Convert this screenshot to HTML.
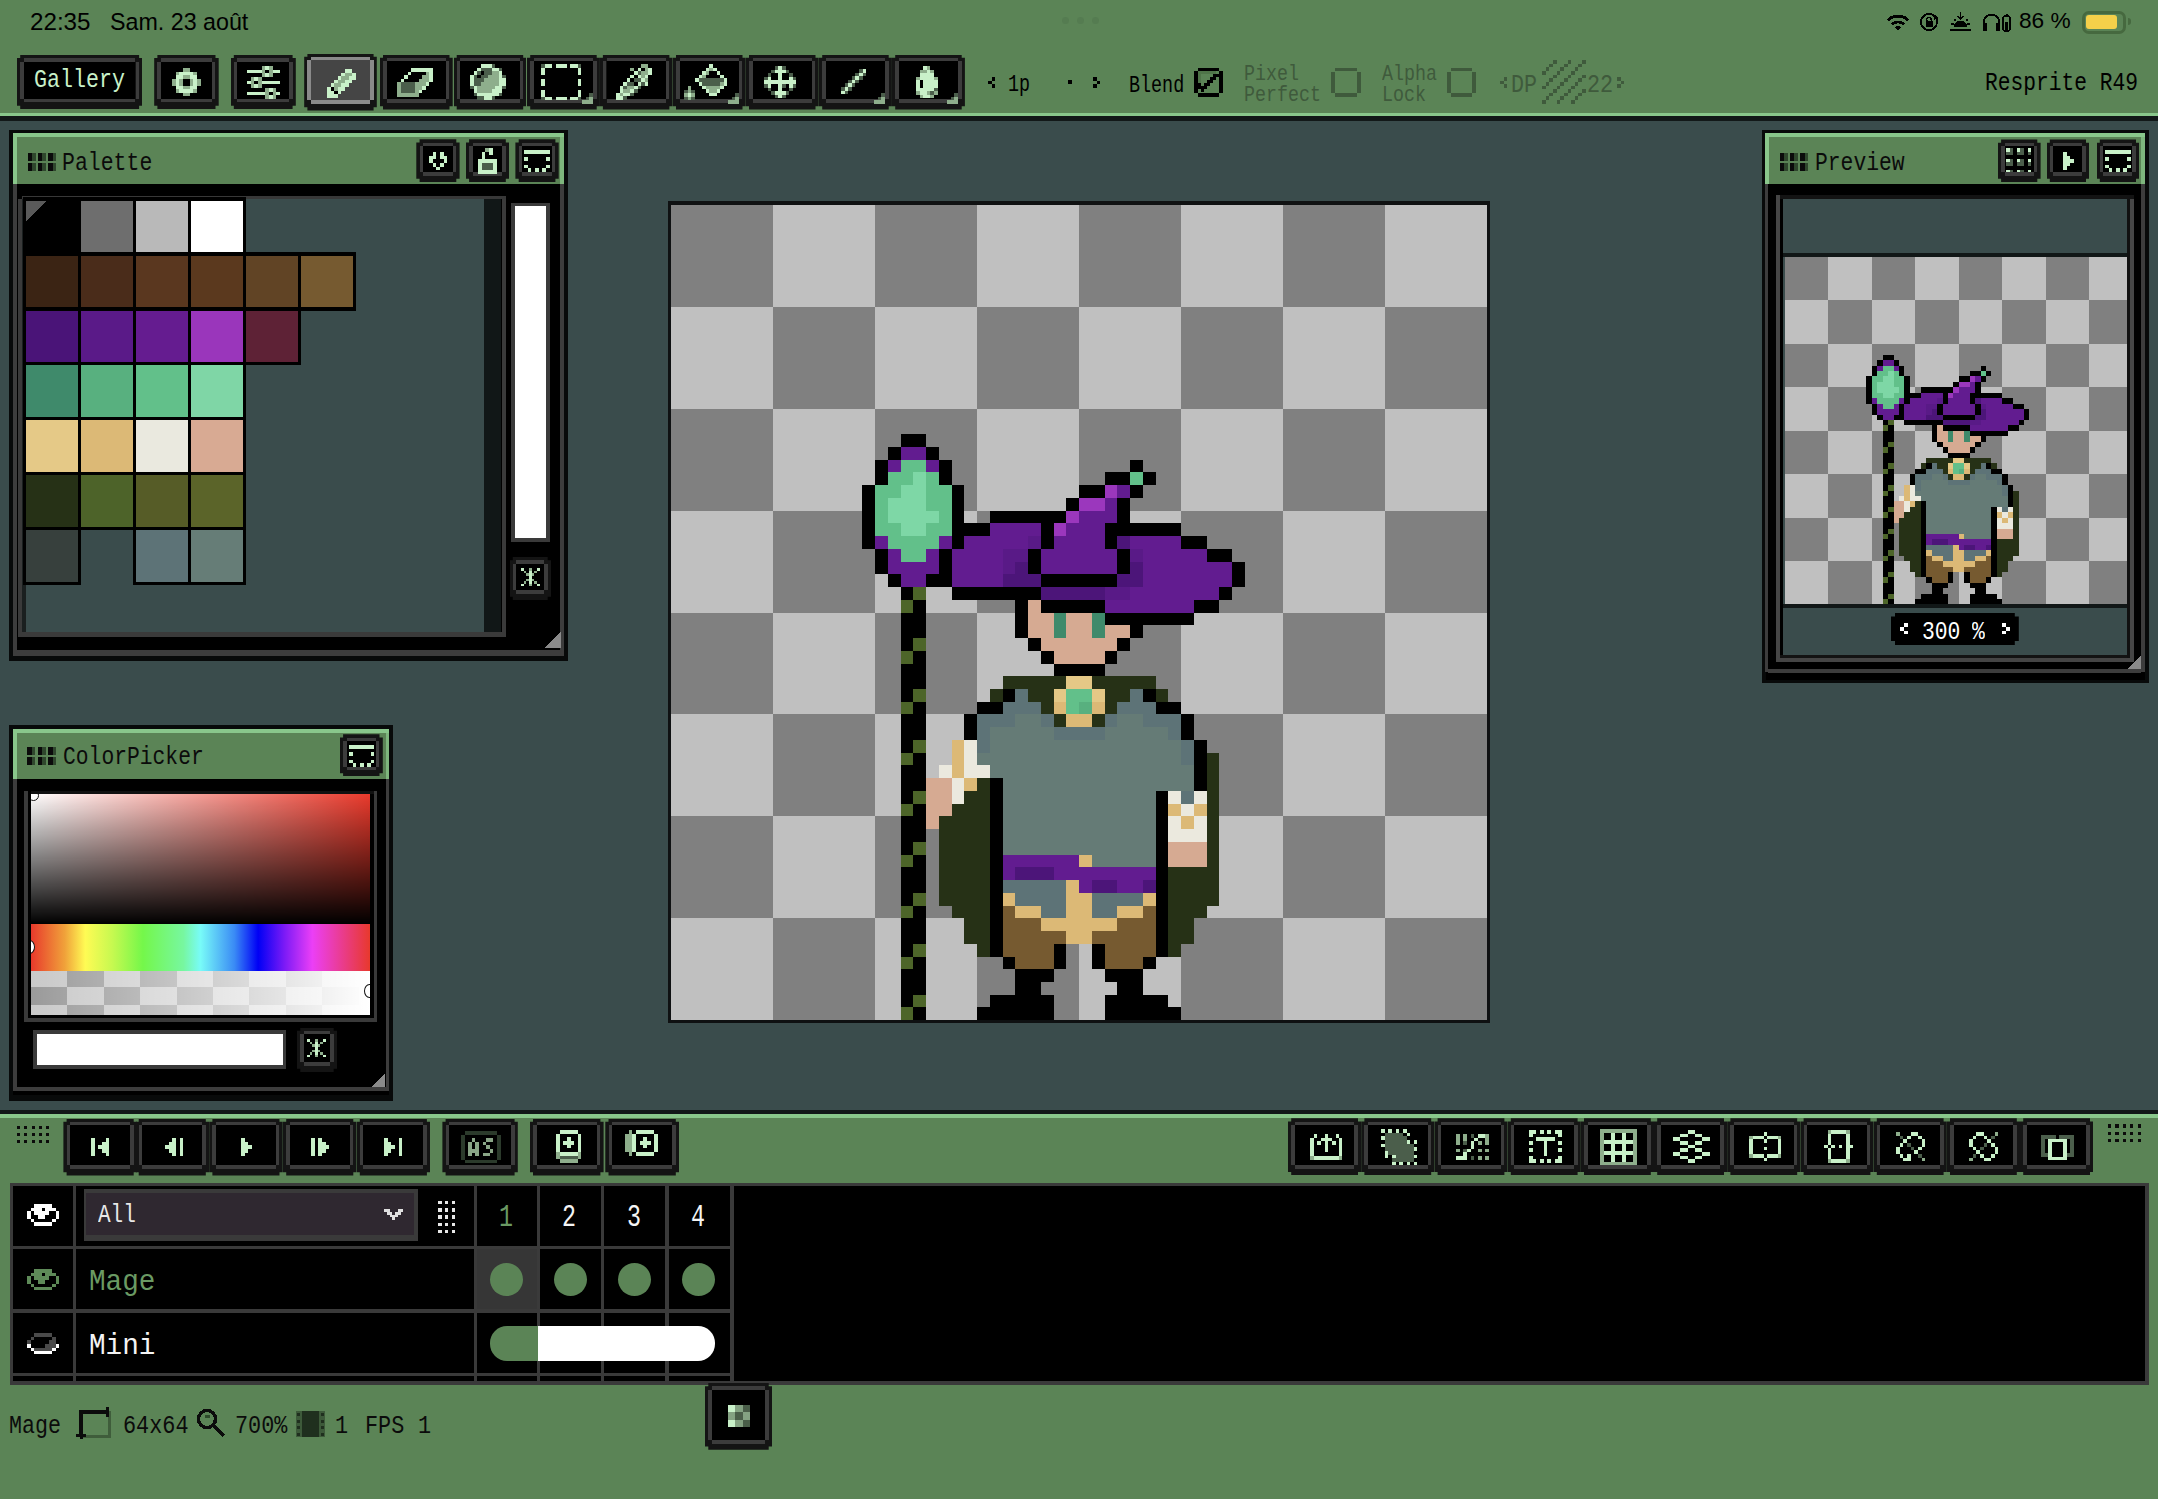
<!DOCTYPE html>
<html><head><meta charset="utf-8"><title>Resprite</title>
<style>
html,body{margin:0;padding:0;width:2158px;height:1499px;overflow:hidden;background:#3a4c4c}
#r{position:relative;width:2158px;height:1499px;overflow:hidden}
#r div{position:absolute}
</style></head><body><div id="r">
<div style="left:0px;top:0px;width:2158px;height:113px;background:#5b8456;"></div>
<div style="left:0px;top:112.8px;width:2158px;height:3.4px;background:#89c78b;"></div>
<div style="left:0px;top:116.2px;width:2158px;height:4.4px;background:#121818;"></div>
<div style="left:0px;top:1110.2px;width:2158px;height:3.4px;background:#121818;"></div>
<div style="left:0px;top:1113.6px;width:2158px;height:4.2px;background:#89c78b;"></div>
<div style="left:0px;top:1117.8px;width:2158px;height:381.2px;background:#5b8456;"></div>
<div style="left:30px;top:10.51px;font:23.26px/23.26px 'Liberation Sans',sans-serif;color:#000;white-space:pre;transform:scaleX(1.0400);transform-origin:0 0;">22:35</div>
<div style="left:110px;top:10.51px;font:23.26px/23.26px 'Liberation Sans',sans-serif;color:#000;white-space:pre;transform:scaleX(1.0000);transform-origin:0 0;">Sam. 23 août</div>
<div style="left:2019px;top:10.47px;font:22.24px/22.24px 'Liberation Sans',sans-serif;color:#000;white-space:pre;transform:scaleX(1.0200);transform-origin:0 0;">86 %</div>
<div style="left:1062px;top:17px;width:7px;height:7px;border-radius:50%;background:#557c51"></div>
<div style="left:1077px;top:17px;width:7px;height:7px;border-radius:50%;background:#557c51"></div>
<div style="left:1092px;top:17px;width:7px;height:7px;border-radius:50%;background:#557c51"></div>
<svg style="position:absolute;left:1885px;top:12px" width="26" height="20" viewBox="0 0 26 20" preserveAspectRatio="none" shape-rendering="crispEdges"><path d="M13 19 L9.5 15.2 A5 5 0 0 1 16.5 15.2 Z" fill="#000"/><path d="M5.8 11.6 A10 10 0 0 1 20.2 11.6 L18.2 13.6 A7.2 7.2 0 0 0 7.8 13.6 Z" fill="#000"/><path d="M1.5 7.4 A16 16 0 0 1 24.5 7.4 L22.4 9.5 A13 13 0 0 0 3.6 9.5 Z" fill="#000"/></svg>
<svg style="position:absolute;left:1919px;top:12px" width="21" height="20" viewBox="0 0 21 20" preserveAspectRatio="none" shape-rendering="crispEdges"><circle cx="10" cy="10" r="8" fill="none" stroke="#000" stroke-width="2"/><rect x="6.5" y="9" width="7" height="6" fill="#000"/><path d="M7.8 9 V7.5 A2.2 2.2 0 0 1 12.2 7.5 V9" fill="none" stroke="#000" stroke-width="1.4"/><path d="M16 3 L20 6 L15 8 Z" fill="#000"/></svg>
<svg style="position:absolute;left:1949px;top:11px" width="23" height="21" viewBox="0 0 23 21" preserveAspectRatio="none" shape-rendering="crispEdges"><path d="M11.5 1 V8 M8.5 5 L11.5 8 L14.5 5" stroke="#000" stroke-width="1.6" fill="none"/><path d="M5 16 A6.5 6.5 0 0 1 18 16 Z" fill="#000"/><rect x="1" y="18" width="21" height="2" fill="#000"/><rect x="2" y="12" width="3" height="1.6" fill="#000"/><rect x="18" y="12" width="3" height="1.6" fill="#000"/><rect x="4.5" y="8" width="2" height="2" fill="#000"/><rect x="16.5" y="8" width="2" height="2" fill="#000"/></svg>
<svg style="position:absolute;left:1982px;top:12px" width="30" height="20" viewBox="0 0 30 20" preserveAspectRatio="none" shape-rendering="crispEdges"><path d="M2 15 V10 A7.5 7.5 0 0 1 17 10 V15" fill="none" stroke="#000" stroke-width="2"/><rect x="1" y="11" width="4" height="8" rx="1.5" fill="#000"/><rect x="14" y="11" width="4" height="8" rx="1.5" fill="#000"/><rect x="21" y="4" width="7" height="15" rx="1.5" fill="none" stroke="#000" stroke-width="1.5"/><rect x="23" y="10" width="3" height="8" fill="#000"/><rect x="23.5" y="2" width="2" height="2" fill="#000"/></svg>
<div style="left:2082px;top:11.3px;width:38px;height:17px;border:3px solid #46693f;border-radius:7px"></div>
<div style="left:2085.5px;top:14.8px;width:31.5px;height:14.2px;background:#f5d04a;border-radius:3px"></div>
<div style="left:2127.5px;top:18px;width:3px;height:7px;background:#46693f;border-radius:0 3px 3px 0"></div>
<div style="left:17px;top:54.8px;width:125.3px;height:54.2px;background:#141414;clip-path:polygon(3.2px 0px,122.1px 0px,122.1px 3.2px,125.3px 3.2px,125.3px 51px,122.1px 51px,122.1px 54.2px,3.2px 54.2px,3.2px 51px,0px 51px,0px 3.2px,3.2px 3.2px)"></div>
<div style="left:23.8px;top:58px;width:111.7px;height:3.6px;background:#3c3c3c;"></div>
<div style="left:23.8px;top:98.9px;width:111.7px;height:3.6px;background:#3c3c3c;"></div>
<div style="left:20.2px;top:61.6px;width:3.6px;height:37.3px;background:#3c3c3c;"></div>
<div style="left:135.5px;top:61.6px;width:3.6px;height:37.3px;background:#3c3c3c;"></div>
<div style="left:23.8px;top:61.6px;width:111.7px;height:37.3px;background:#000;"></div>
<div style="left:34.1px;top:68.43px;font:25.81px/25.81px 'Liberation Mono',monospace;color:#c9f1c9;white-space:pre;transform:scaleX(0.8395);transform-origin:0 0;">Gallery</div>
<div style="left:154.2px;top:54.8px;width:64.5px;height:54.2px;background:#141414;clip-path:polygon(3.2px 0px,61.3px 0px,61.3px 3.2px,64.5px 3.2px,64.5px 51px,61.3px 51px,61.3px 54.2px,3.2px 54.2px,3.2px 51px,0px 51px,0px 3.2px,3.2px 3.2px)"></div>
<div style="left:161px;top:58px;width:50.9px;height:3.6px;background:#3c3c3c;"></div>
<div style="left:161px;top:98.9px;width:50.9px;height:3.6px;background:#3c3c3c;"></div>
<div style="left:157.4px;top:61.6px;width:3.6px;height:37.3px;background:#3c3c3c;"></div>
<div style="left:211.9px;top:61.6px;width:3.6px;height:37.3px;background:#3c3c3c;"></div>
<div style="left:161px;top:61.6px;width:50.9px;height:37.3px;background:#000;"></div>
<svg style="position:absolute;left:172px;top:67.7px" width="28.56" height="28.56" viewBox="0 0 8 8" preserveAspectRatio="none" shape-rendering="crispEdges"><rect x="3" y="0" width="2" height="1" fill="#8eae8c"/><rect x="1" y="1" width="1" height="1" fill="#8eae8c"/><rect x="2" y="1" width="4" height="1" fill="#c9f1c9"/><rect x="6" y="1" width="1" height="1" fill="#8eae8c"/><rect x="1" y="2" width="2" height="1" fill="#c9f1c9"/><rect x="3" y="2" width="2" height="1" fill="#8eae8c"/><rect x="5" y="2" width="2" height="1" fill="#c9f1c9"/><rect x="0" y="3" width="1" height="1" fill="#8eae8c"/><rect x="1" y="3" width="1" height="1" fill="#c9f1c9"/><rect x="2" y="3" width="1" height="1" fill="#8eae8c"/><rect x="3" y="3" width="2" height="1" fill="#000"/><rect x="5" y="3" width="1" height="1" fill="#8eae8c"/><rect x="6" y="3" width="1" height="1" fill="#c9f1c9"/><rect x="7" y="3" width="1" height="1" fill="#8eae8c"/><rect x="0" y="4" width="1" height="1" fill="#8eae8c"/><rect x="1" y="4" width="1" height="1" fill="#c9f1c9"/><rect x="2" y="4" width="1" height="1" fill="#8eae8c"/><rect x="3" y="4" width="2" height="1" fill="#000"/><rect x="5" y="4" width="1" height="1" fill="#8eae8c"/><rect x="6" y="4" width="1" height="1" fill="#c9f1c9"/><rect x="7" y="4" width="1" height="1" fill="#8eae8c"/><rect x="1" y="5" width="2" height="1" fill="#c9f1c9"/><rect x="3" y="5" width="2" height="1" fill="#8eae8c"/><rect x="5" y="5" width="2" height="1" fill="#c9f1c9"/><rect x="1" y="6" width="1" height="1" fill="#8eae8c"/><rect x="2" y="6" width="4" height="1" fill="#c9f1c9"/><rect x="6" y="6" width="1" height="1" fill="#8eae8c"/><rect x="3" y="7" width="2" height="1" fill="#8eae8c"/></svg>
<div style="left:230.6px;top:54.8px;width:65.2px;height:54.2px;background:#141414;clip-path:polygon(3.2px 0px,62px 0px,62px 3.2px,65.2px 3.2px,65.2px 51px,62px 51px,62px 54.2px,3.2px 54.2px,3.2px 51px,0px 51px,0px 3.2px,3.2px 3.2px)"></div>
<div style="left:237.4px;top:58px;width:51.6px;height:3.6px;background:#3c3c3c;"></div>
<div style="left:237.4px;top:98.9px;width:51.6px;height:3.6px;background:#3c3c3c;"></div>
<div style="left:233.8px;top:61.6px;width:3.6px;height:37.3px;background:#3c3c3c;"></div>
<div style="left:289px;top:61.6px;width:3.6px;height:37.3px;background:#3c3c3c;"></div>
<div style="left:237.4px;top:61.6px;width:51.6px;height:37.3px;background:#000;"></div>
<svg style="position:absolute;left:246.9px;top:65.8px" width="33.03" height="33.03" viewBox="0 0 9 9" preserveAspectRatio="none" shape-rendering="crispEdges"><rect x="4" y="0" width="1" height="1" fill="#8eae8c"/><rect x="5" y="0" width="1" height="1" fill="#c9f1c9"/><rect x="6" y="0" width="1" height="1" fill="#8eae8c"/><rect x="0" y="1" width="4" height="1" fill="#c9f1c9"/><rect x="4" y="1" width="1" height="1" fill="#8eae8c"/><rect x="5" y="1" width="1" height="1" fill="#000"/><rect x="6" y="1" width="1" height="1" fill="#8eae8c"/><rect x="7" y="1" width="2" height="1" fill="#c9f1c9"/><rect x="4" y="2" width="1" height="1" fill="#8eae8c"/><rect x="5" y="2" width="1" height="1" fill="#c9f1c9"/><rect x="6" y="2" width="1" height="1" fill="#8eae8c"/><rect x="1" y="3" width="1" height="1" fill="#8eae8c"/><rect x="2" y="3" width="1" height="1" fill="#c9f1c9"/><rect x="3" y="3" width="1" height="1" fill="#8eae8c"/><rect x="0" y="4" width="1" height="1" fill="#c9f1c9"/><rect x="1" y="4" width="1" height="1" fill="#8eae8c"/><rect x="2" y="4" width="1" height="1" fill="#000"/><rect x="3" y="4" width="1" height="1" fill="#8eae8c"/><rect x="4" y="4" width="5" height="1" fill="#c9f1c9"/><rect x="1" y="5" width="1" height="1" fill="#8eae8c"/><rect x="2" y="5" width="1" height="1" fill="#c9f1c9"/><rect x="3" y="5" width="1" height="1" fill="#8eae8c"/><rect x="5" y="6" width="1" height="1" fill="#8eae8c"/><rect x="6" y="6" width="1" height="1" fill="#c9f1c9"/><rect x="7" y="6" width="1" height="1" fill="#8eae8c"/><rect x="0" y="7" width="5" height="1" fill="#c9f1c9"/><rect x="5" y="7" width="1" height="1" fill="#8eae8c"/><rect x="6" y="7" width="1" height="1" fill="#000"/><rect x="7" y="7" width="1" height="1" fill="#8eae8c"/><rect x="8" y="7" width="1" height="1" fill="#c9f1c9"/><rect x="5" y="8" width="1" height="1" fill="#8eae8c"/><rect x="6" y="8" width="1" height="1" fill="#c9f1c9"/><rect x="7" y="8" width="1" height="1" fill="#8eae8c"/></svg>
<div style="left:304.2px;top:53.5px;width:72.6px;height:57px;background:#141414;clip-path:polygon(3.2px 0px,69.4px 0px,69.4px 3.2px,72.6px 3.2px,72.6px 53.8px,69.4px 53.8px,69.4px 57px,3.2px 57px,3.2px 53.8px,0px 53.8px,0px 3.2px,3.2px 3.2px)"></div>
<div style="left:311px;top:56.7px;width:59px;height:3.6px;background:#8a8a8a;"></div>
<div style="left:311px;top:100.4px;width:59px;height:3.6px;background:#8a8a8a;"></div>
<div style="left:307.4px;top:60.3px;width:3.6px;height:40.1px;background:#8a8a8a;"></div>
<div style="left:370px;top:60.3px;width:3.6px;height:40.1px;background:#8a8a8a;"></div>
<div style="left:311px;top:60.3px;width:59px;height:40.1px;background:#454545;"></div>
<div style="left:379.8px;top:54.5px;width:72.9px;height:55px;background:#141414;clip-path:polygon(3.2px 0px,69.7px 0px,69.7px 3.2px,72.9px 3.2px,72.9px 51.8px,69.7px 51.8px,69.7px 55px,3.2px 55px,3.2px 51.8px,0px 51.8px,0px 3.2px,3.2px 3.2px)"></div>
<div style="left:386.6px;top:57.7px;width:59.3px;height:3.6px;background:#3c3c3c;"></div>
<div style="left:386.6px;top:99.4px;width:59.3px;height:3.6px;background:#3c3c3c;"></div>
<div style="left:383px;top:61.3px;width:3.6px;height:38.1px;background:#3c3c3c;"></div>
<div style="left:445.9px;top:61.3px;width:3.6px;height:38.1px;background:#3c3c3c;"></div>
<div style="left:386.6px;top:61.3px;width:59.3px;height:38.1px;background:#000;"></div>
<div style="left:453.5px;top:54.5px;width:72.9px;height:55px;background:#141414;clip-path:polygon(3.2px 0px,69.7px 0px,69.7px 3.2px,72.9px 3.2px,72.9px 51.8px,69.7px 51.8px,69.7px 55px,3.2px 55px,3.2px 51.8px,0px 51.8px,0px 3.2px,3.2px 3.2px)"></div>
<div style="left:460.3px;top:57.7px;width:59.3px;height:3.6px;background:#3c3c3c;"></div>
<div style="left:460.3px;top:99.4px;width:59.3px;height:3.6px;background:#3c3c3c;"></div>
<div style="left:456.7px;top:61.3px;width:3.6px;height:38.1px;background:#3c3c3c;"></div>
<div style="left:519.6px;top:61.3px;width:3.6px;height:38.1px;background:#3c3c3c;"></div>
<div style="left:460.3px;top:61.3px;width:59.3px;height:38.1px;background:#000;"></div>
<div style="left:527px;top:54.5px;width:72.9px;height:55px;background:#141414;clip-path:polygon(3.2px 0px,69.7px 0px,69.7px 3.2px,72.9px 3.2px,72.9px 51.8px,69.7px 51.8px,69.7px 55px,3.2px 55px,3.2px 51.8px,0px 51.8px,0px 3.2px,3.2px 3.2px)"></div>
<div style="left:533.8px;top:57.7px;width:59.3px;height:3.6px;background:#3c3c3c;"></div>
<div style="left:533.8px;top:99.4px;width:59.3px;height:3.6px;background:#3c3c3c;"></div>
<div style="left:530.2px;top:61.3px;width:3.6px;height:38.1px;background:#3c3c3c;"></div>
<div style="left:593.1px;top:61.3px;width:3.6px;height:38.1px;background:#3c3c3c;"></div>
<div style="left:533.8px;top:61.3px;width:59.3px;height:38.1px;background:#000;"></div>
<div style="left:599.7px;top:54.5px;width:72.9px;height:55px;background:#141414;clip-path:polygon(3.2px 0px,69.7px 0px,69.7px 3.2px,72.9px 3.2px,72.9px 51.8px,69.7px 51.8px,69.7px 55px,3.2px 55px,3.2px 51.8px,0px 51.8px,0px 3.2px,3.2px 3.2px)"></div>
<div style="left:606.5px;top:57.7px;width:59.3px;height:3.6px;background:#3c3c3c;"></div>
<div style="left:606.5px;top:99.4px;width:59.3px;height:3.6px;background:#3c3c3c;"></div>
<div style="left:602.9px;top:61.3px;width:3.6px;height:38.1px;background:#3c3c3c;"></div>
<div style="left:665.8px;top:61.3px;width:3.6px;height:38.1px;background:#3c3c3c;"></div>
<div style="left:606.5px;top:61.3px;width:59.3px;height:38.1px;background:#000;"></div>
<div style="left:672.8px;top:54.5px;width:72.9px;height:55px;background:#141414;clip-path:polygon(3.2px 0px,69.7px 0px,69.7px 3.2px,72.9px 3.2px,72.9px 51.8px,69.7px 51.8px,69.7px 55px,3.2px 55px,3.2px 51.8px,0px 51.8px,0px 3.2px,3.2px 3.2px)"></div>
<div style="left:679.6px;top:57.7px;width:59.3px;height:3.6px;background:#3c3c3c;"></div>
<div style="left:679.6px;top:99.4px;width:59.3px;height:3.6px;background:#3c3c3c;"></div>
<div style="left:676px;top:61.3px;width:3.6px;height:38.1px;background:#3c3c3c;"></div>
<div style="left:738.9px;top:61.3px;width:3.6px;height:38.1px;background:#3c3c3c;"></div>
<div style="left:679.6px;top:61.3px;width:59.3px;height:38.1px;background:#000;"></div>
<div style="left:745.8px;top:54.5px;width:72.9px;height:55px;background:#141414;clip-path:polygon(3.2px 0px,69.7px 0px,69.7px 3.2px,72.9px 3.2px,72.9px 51.8px,69.7px 51.8px,69.7px 55px,3.2px 55px,3.2px 51.8px,0px 51.8px,0px 3.2px,3.2px 3.2px)"></div>
<div style="left:752.6px;top:57.7px;width:59.3px;height:3.6px;background:#3c3c3c;"></div>
<div style="left:752.6px;top:99.4px;width:59.3px;height:3.6px;background:#3c3c3c;"></div>
<div style="left:749px;top:61.3px;width:3.6px;height:38.1px;background:#3c3c3c;"></div>
<div style="left:811.9px;top:61.3px;width:3.6px;height:38.1px;background:#3c3c3c;"></div>
<div style="left:752.6px;top:61.3px;width:59.3px;height:38.1px;background:#000;"></div>
<div style="left:819px;top:54.5px;width:72.9px;height:55px;background:#141414;clip-path:polygon(3.2px 0px,69.7px 0px,69.7px 3.2px,72.9px 3.2px,72.9px 51.8px,69.7px 51.8px,69.7px 55px,3.2px 55px,3.2px 51.8px,0px 51.8px,0px 3.2px,3.2px 3.2px)"></div>
<div style="left:825.8px;top:57.7px;width:59.3px;height:3.6px;background:#3c3c3c;"></div>
<div style="left:825.8px;top:99.4px;width:59.3px;height:3.6px;background:#3c3c3c;"></div>
<div style="left:822.2px;top:61.3px;width:3.6px;height:38.1px;background:#3c3c3c;"></div>
<div style="left:885.1px;top:61.3px;width:3.6px;height:38.1px;background:#3c3c3c;"></div>
<div style="left:825.8px;top:61.3px;width:59.3px;height:38.1px;background:#000;"></div>
<div style="left:892px;top:54.5px;width:72.9px;height:55px;background:#141414;clip-path:polygon(3.2px 0px,69.7px 0px,69.7px 3.2px,72.9px 3.2px,72.9px 51.8px,69.7px 51.8px,69.7px 55px,3.2px 55px,3.2px 51.8px,0px 51.8px,0px 3.2px,3.2px 3.2px)"></div>
<div style="left:898.8px;top:57.7px;width:59.3px;height:3.6px;background:#3c3c3c;"></div>
<div style="left:898.8px;top:99.4px;width:59.3px;height:3.6px;background:#3c3c3c;"></div>
<div style="left:895.2px;top:61.3px;width:3.6px;height:38.1px;background:#3c3c3c;"></div>
<div style="left:958.1px;top:61.3px;width:3.6px;height:38.1px;background:#3c3c3c;"></div>
<div style="left:898.8px;top:61.3px;width:59.3px;height:38.1px;background:#000;"></div>
<svg style="position:absolute;left:327.2px;top:69.1px" width="32.4" height="28.8" viewBox="0 0 9 8" preserveAspectRatio="none" shape-rendering="crispEdges"><rect x="5" y="0" width="2" height="1" fill="#c9f1c9"/><rect x="4" y="1" width="1" height="1" fill="#c9f1c9"/><rect x="5" y="1" width="2" height="1" fill="#8eae8c"/><rect x="7" y="1" width="1" height="1" fill="#c9f1c9"/><rect x="3" y="2" width="1" height="1" fill="#c9f1c9"/><rect x="4" y="2" width="2" height="1" fill="#8eae8c"/><rect x="6" y="2" width="2" height="1" fill="#c9f1c9"/><rect x="2" y="3" width="1" height="1" fill="#c9f1c9"/><rect x="3" y="3" width="2" height="1" fill="#8eae8c"/><rect x="5" y="3" width="2" height="1" fill="#c9f1c9"/><rect x="1" y="4" width="1" height="1" fill="#c9f1c9"/><rect x="2" y="4" width="2" height="1" fill="#8eae8c"/><rect x="4" y="4" width="2" height="1" fill="#c9f1c9"/><rect x="0" y="5" width="1" height="1" fill="#c9f1c9"/><rect x="1" y="5" width="1" height="1" fill="#000"/><rect x="2" y="5" width="1" height="1" fill="#8eae8c"/><rect x="3" y="5" width="2" height="1" fill="#c9f1c9"/><rect x="0" y="6" width="2" height="1" fill="#c9f1c9"/><rect x="2" y="6" width="1" height="1" fill="#000"/><rect x="3" y="6" width="1" height="1" fill="#c9f1c9"/><rect x="0" y="7" width="3" height="1" fill="#c9f1c9"/></svg>
<svg style="position:absolute;left:396.9px;top:67.8px" width="36" height="28.8" viewBox="0 0 10 8" preserveAspectRatio="none" shape-rendering="crispEdges"><rect x="4" y="0" width="6" height="1" fill="#c9f1c9"/><rect x="3" y="1" width="1" height="1" fill="#c9f1c9"/><rect x="8" y="1" width="1" height="1" fill="#8eae8c"/><rect x="9" y="1" width="1" height="1" fill="#c9f1c9"/><rect x="2" y="2" width="1" height="1" fill="#c9f1c9"/><rect x="7" y="2" width="2" height="1" fill="#8eae8c"/><rect x="9" y="2" width="1" height="1" fill="#c9f1c9"/><rect x="1" y="3" width="1" height="1" fill="#c9f1c9"/><rect x="6" y="3" width="3" height="1" fill="#8eae8c"/><rect x="9" y="3" width="1" height="1" fill="#c9f1c9"/><rect x="0" y="4" width="1" height="1" fill="#8eae8c"/><rect x="1" y="4" width="4" height="1" fill="#4b5e4b"/><rect x="5" y="4" width="3" height="1" fill="#8eae8c"/><rect x="8" y="4" width="1" height="1" fill="#c9f1c9"/><rect x="0" y="5" width="1" height="1" fill="#8eae8c"/><rect x="1" y="5" width="4" height="1" fill="#4b5e4b"/><rect x="5" y="5" width="2" height="1" fill="#8eae8c"/><rect x="7" y="5" width="1" height="1" fill="#c9f1c9"/><rect x="0" y="6" width="1" height="1" fill="#8eae8c"/><rect x="1" y="6" width="4" height="1" fill="#4b5e4b"/><rect x="5" y="6" width="1" height="1" fill="#8eae8c"/><rect x="6" y="6" width="1" height="1" fill="#c9f1c9"/><rect x="0" y="7" width="6" height="1" fill="#8eae8c"/></svg>
<svg style="position:absolute;left:470.1px;top:63.9px" width="36" height="36" viewBox="0 0 10 10" preserveAspectRatio="none" shape-rendering="crispEdges"><rect x="3" y="0" width="3" height="1" fill="#c9f1c9"/><rect x="6" y="0" width="1" height="1" fill="#4b5e4b"/><rect x="2" y="1" width="1" height="1" fill="#c9f1c9"/><rect x="3" y="1" width="3" height="1" fill="#4b5e4b"/><rect x="6" y="1" width="2" height="1" fill="#c9f1c9"/><rect x="8" y="1" width="1" height="1" fill="#4b5e4b"/><rect x="1" y="2" width="1" height="1" fill="#c9f1c9"/><rect x="2" y="2" width="1" height="1" fill="#4b5e4b"/><rect x="3" y="2" width="1" height="1" fill="#000"/><rect x="4" y="2" width="2" height="1" fill="#4b5e4b"/><rect x="6" y="2" width="2" height="1" fill="#8eae8c"/><rect x="8" y="2" width="1" height="1" fill="#c9f1c9"/><rect x="0" y="3" width="1" height="1" fill="#c9f1c9"/><rect x="1" y="3" width="1" height="1" fill="#4b5e4b"/><rect x="2" y="3" width="1" height="1" fill="#000"/><rect x="3" y="3" width="2" height="1" fill="#4b5e4b"/><rect x="5" y="3" width="3" height="1" fill="#8eae8c"/><rect x="8" y="3" width="1" height="1" fill="#c9f1c9"/><rect x="9" y="3" width="1" height="1" fill="#4b5e4b"/><rect x="0" y="4" width="1" height="1" fill="#c9f1c9"/><rect x="1" y="4" width="3" height="1" fill="#4b5e4b"/><rect x="4" y="4" width="4" height="1" fill="#8eae8c"/><rect x="8" y="4" width="2" height="1" fill="#c9f1c9"/><rect x="0" y="5" width="1" height="1" fill="#c9f1c9"/><rect x="1" y="5" width="2" height="1" fill="#4b5e4b"/><rect x="3" y="5" width="5" height="1" fill="#8eae8c"/><rect x="8" y="5" width="2" height="1" fill="#c9f1c9"/><rect x="0" y="6" width="1" height="1" fill="#4b5e4b"/><rect x="1" y="6" width="1" height="1" fill="#c9f1c9"/><rect x="2" y="6" width="5" height="1" fill="#8eae8c"/><rect x="7" y="6" width="2" height="1" fill="#c9f1c9"/><rect x="9" y="6" width="1" height="1" fill="#4b5e4b"/><rect x="1" y="7" width="1" height="1" fill="#c9f1c9"/><rect x="2" y="7" width="4" height="1" fill="#8eae8c"/><rect x="6" y="7" width="3" height="1" fill="#c9f1c9"/><rect x="1" y="8" width="1" height="1" fill="#4b5e4b"/><rect x="2" y="8" width="6" height="1" fill="#c9f1c9"/><rect x="8" y="8" width="1" height="1" fill="#4b5e4b"/><rect x="2" y="9" width="2" height="1" fill="#4b5e4b"/><rect x="4" y="9" width="2" height="1" fill="#c9f1c9"/><rect x="6" y="9" width="1" height="1" fill="#4b5e4b"/></svg>
<svg style="position:absolute;left:541.1px;top:63.9px" width="40.26" height="36.6" viewBox="0 0 11 10" preserveAspectRatio="none" shape-rendering="crispEdges"><rect x="0" y="0" width="1" height="1" fill="#4b5e4b"/><rect x="1" y="0" width="2" height="1" fill="#c9f1c9"/><rect x="4" y="0" width="3" height="1" fill="#c9f1c9"/><rect x="8" y="0" width="2" height="1" fill="#c9f1c9"/><rect x="10" y="0" width="1" height="1" fill="#4b5e4b"/><rect x="0" y="1" width="1" height="1" fill="#c9f1c9"/><rect x="10" y="1" width="1" height="1" fill="#c9f1c9"/><rect x="0" y="2" width="1" height="1" fill="#c9f1c9"/><rect x="10" y="2" width="1" height="1" fill="#c9f1c9"/><rect x="0" y="4" width="1" height="1" fill="#c9f1c9"/><rect x="10" y="4" width="1" height="1" fill="#c9f1c9"/><rect x="0" y="5" width="1" height="1" fill="#c9f1c9"/><rect x="10" y="5" width="1" height="1" fill="#c9f1c9"/><rect x="0" y="7" width="1" height="1" fill="#c9f1c9"/><rect x="10" y="7" width="1" height="1" fill="#c9f1c9"/><rect x="0" y="8" width="1" height="1" fill="#c9f1c9"/><rect x="10" y="8" width="1" height="1" fill="#c9f1c9"/><rect x="0" y="9" width="1" height="1" fill="#4b5e4b"/><rect x="1" y="9" width="2" height="1" fill="#c9f1c9"/><rect x="4" y="9" width="3" height="1" fill="#c9f1c9"/><rect x="8" y="9" width="2" height="1" fill="#c9f1c9"/><rect x="10" y="9" width="1" height="1" fill="#4b5e4b"/></svg>
<svg style="position:absolute;left:582px;top:93px" width="10.8" height="10.8" viewBox="0 0 3 3" preserveAspectRatio="none" shape-rendering="crispEdges"><rect x="2" y="0" width="1" height="1" fill="#4b5e4b"/><rect x="1" y="1" width="1" height="1" fill="#4b5e4b"/><rect x="2" y="1" width="1" height="1" fill="#8eae8c"/><rect x="0" y="2" width="3" height="1" fill="#8eae8c"/></svg>
<svg style="position:absolute;left:616px;top:63.9px" width="36" height="36" viewBox="0 0 10 10" preserveAspectRatio="none" shape-rendering="crispEdges"><rect x="7" y="0" width="2" height="1" fill="#8eae8c"/><rect x="4" y="1" width="1" height="1" fill="#8eae8c"/><rect x="6" y="1" width="1" height="1" fill="#c9f1c9"/><rect x="7" y="1" width="1" height="1" fill="#000"/><rect x="8" y="1" width="1" height="1" fill="#8eae8c"/><rect x="9" y="1" width="1" height="1" fill="#c9f1c9"/><rect x="5" y="2" width="1" height="1" fill="#c9f1c9"/><rect x="6" y="2" width="1" height="1" fill="#4b5e4b"/><rect x="7" y="2" width="2" height="1" fill="#8eae8c"/><rect x="9" y="2" width="1" height="1" fill="#c9f1c9"/><rect x="4" y="3" width="1" height="1" fill="#c9f1c9"/><rect x="5" y="3" width="1" height="1" fill="#000"/><rect x="6" y="3" width="1" height="1" fill="#c9f1c9"/><rect x="7" y="3" width="1" height="1" fill="#8eae8c"/><rect x="8" y="3" width="1" height="1" fill="#c9f1c9"/><rect x="3" y="4" width="1" height="1" fill="#c9f1c9"/><rect x="4" y="4" width="1" height="1" fill="#000"/><rect x="5" y="4" width="2" height="1" fill="#4b5e4b"/><rect x="7" y="4" width="1" height="1" fill="#c9f1c9"/><rect x="8" y="4" width="1" height="1" fill="#8eae8c"/><rect x="2" y="5" width="1" height="1" fill="#c9f1c9"/><rect x="3" y="5" width="2" height="1" fill="#4b5e4b"/><rect x="5" y="5" width="1" height="1" fill="#000"/><rect x="6" y="5" width="1" height="1" fill="#c9f1c9"/><rect x="7" y="5" width="1" height="1" fill="#4b5e4b"/><rect x="8" y="5" width="1" height="1" fill="#c9f1c9"/><rect x="1" y="6" width="1" height="1" fill="#c9f1c9"/><rect x="2" y="6" width="1" height="1" fill="#4b5e4b"/><rect x="3" y="6" width="2" height="1" fill="#8eae8c"/><rect x="5" y="6" width="1" height="1" fill="#c9f1c9"/><rect x="6" y="6" width="1" height="1" fill="#4b5e4b"/><rect x="1" y="7" width="1" height="1" fill="#c9f1c9"/><rect x="2" y="7" width="2" height="1" fill="#8eae8c"/><rect x="4" y="7" width="1" height="1" fill="#c9f1c9"/><rect x="5" y="7" width="1" height="1" fill="#4b5e4b"/><rect x="0" y="8" width="1" height="1" fill="#c9f1c9"/><rect x="1" y="8" width="1" height="1" fill="#8eae8c"/><rect x="2" y="8" width="2" height="1" fill="#c9f1c9"/><rect x="4" y="8" width="1" height="1" fill="#4b5e4b"/><rect x="0" y="9" width="2" height="1" fill="#c9f1c9"/><rect x="2" y="9" width="1" height="1" fill="#4b5e4b"/></svg>
<svg style="position:absolute;left:695.2px;top:63.9px" width="32.4" height="32.4" viewBox="0 0 9 9" preserveAspectRatio="none" shape-rendering="crispEdges"><rect x="4" y="0" width="1" height="1" fill="#c9f1c9"/><rect x="3" y="1" width="1" height="1" fill="#c9f1c9"/><rect x="4" y="1" width="1" height="1" fill="#8eae8c"/><rect x="5" y="1" width="1" height="1" fill="#c9f1c9"/><rect x="2" y="2" width="1" height="1" fill="#c9f1c9"/><rect x="3" y="2" width="1" height="1" fill="#8eae8c"/><rect x="6" y="2" width="1" height="1" fill="#c9f1c9"/><rect x="1" y="3" width="1" height="1" fill="#c9f1c9"/><rect x="2" y="3" width="1" height="1" fill="#8eae8c"/><rect x="7" y="3" width="1" height="1" fill="#c9f1c9"/><rect x="0" y="4" width="1" height="1" fill="#c9f1c9"/><rect x="1" y="4" width="7" height="1" fill="#4b5e4b"/><rect x="8" y="4" width="1" height="1" fill="#c9f1c9"/><rect x="1" y="5" width="1" height="1" fill="#c9f1c9"/><rect x="2" y="5" width="5" height="1" fill="#4b5e4b"/><rect x="7" y="5" width="1" height="1" fill="#8eae8c"/><rect x="8" y="5" width="1" height="1" fill="#c9f1c9"/><rect x="2" y="6" width="1" height="1" fill="#c9f1c9"/><rect x="3" y="6" width="4" height="1" fill="#8eae8c"/><rect x="7" y="6" width="1" height="1" fill="#c9f1c9"/><rect x="3" y="7" width="1" height="1" fill="#c9f1c9"/><rect x="4" y="7" width="2" height="1" fill="#8eae8c"/><rect x="6" y="7" width="1" height="1" fill="#c9f1c9"/><rect x="4" y="8" width="2" height="1" fill="#c9f1c9"/></svg>
<svg style="position:absolute;left:684.4px;top:86px" width="10.8" height="14.4" viewBox="0 0 3 4" preserveAspectRatio="none" shape-rendering="crispEdges"><rect x="1" y="0" width="1" height="1" fill="#8eae8c"/><rect x="0" y="1" width="1" height="1" fill="#4b5e4b"/><rect x="1" y="1" width="1" height="1" fill="#8eae8c"/><rect x="2" y="1" width="1" height="1" fill="#4b5e4b"/><rect x="0" y="2" width="1" height="1" fill="#8eae8c"/><rect x="1" y="2" width="1" height="1" fill="#c9f1c9"/><rect x="2" y="2" width="1" height="1" fill="#8eae8c"/><rect x="0" y="3" width="1" height="1" fill="#4b5e4b"/><rect x="1" y="3" width="1" height="1" fill="#8eae8c"/><rect x="2" y="3" width="1" height="1" fill="#4b5e4b"/></svg>
<svg style="position:absolute;left:728px;top:93px" width="10.8" height="10.8" viewBox="0 0 3 3" preserveAspectRatio="none" shape-rendering="crispEdges"><rect x="2" y="0" width="1" height="1" fill="#4b5e4b"/><rect x="1" y="1" width="1" height="1" fill="#4b5e4b"/><rect x="2" y="1" width="1" height="1" fill="#8eae8c"/><rect x="0" y="2" width="3" height="1" fill="#8eae8c"/></svg>
<svg style="position:absolute;left:764.3px;top:65.8px" width="32.4" height="32.4" viewBox="0 0 9 9" preserveAspectRatio="none" shape-rendering="crispEdges"><rect x="3" y="0" width="1" height="1" fill="#4b5e4b"/><rect x="4" y="0" width="1" height="1" fill="#c9f1c9"/><rect x="5" y="0" width="1" height="1" fill="#4b5e4b"/><rect x="2" y="1" width="1" height="1" fill="#4b5e4b"/><rect x="3" y="1" width="3" height="1" fill="#c9f1c9"/><rect x="6" y="1" width="1" height="1" fill="#4b5e4b"/><rect x="1" y="2" width="1" height="1" fill="#4b5e4b"/><rect x="4" y="2" width="1" height="1" fill="#c9f1c9"/><rect x="7" y="2" width="1" height="1" fill="#4b5e4b"/><rect x="0" y="3" width="1" height="1" fill="#4b5e4b"/><rect x="1" y="3" width="1" height="1" fill="#c9f1c9"/><rect x="4" y="3" width="1" height="1" fill="#c9f1c9"/><rect x="7" y="3" width="1" height="1" fill="#c9f1c9"/><rect x="8" y="3" width="1" height="1" fill="#4b5e4b"/><rect x="0" y="4" width="9" height="1" fill="#c9f1c9"/><rect x="0" y="5" width="1" height="1" fill="#4b5e4b"/><rect x="1" y="5" width="1" height="1" fill="#c9f1c9"/><rect x="4" y="5" width="1" height="1" fill="#c9f1c9"/><rect x="5" y="5" width="1" height="1" fill="#4b5e4b"/><rect x="7" y="5" width="1" height="1" fill="#c9f1c9"/><rect x="8" y="5" width="1" height="1" fill="#4b5e4b"/><rect x="1" y="6" width="1" height="1" fill="#4b5e4b"/><rect x="4" y="6" width="1" height="1" fill="#c9f1c9"/><rect x="7" y="6" width="1" height="1" fill="#4b5e4b"/><rect x="2" y="7" width="1" height="1" fill="#4b5e4b"/><rect x="3" y="7" width="3" height="1" fill="#c9f1c9"/><rect x="6" y="7" width="1" height="1" fill="#4b5e4b"/><rect x="3" y="8" width="1" height="1" fill="#4b5e4b"/><rect x="4" y="8" width="1" height="1" fill="#c9f1c9"/><rect x="5" y="8" width="1" height="1" fill="#4b5e4b"/></svg>
<svg style="position:absolute;left:841.2px;top:69.1px" width="25.2" height="25.2" viewBox="0 0 7 7" preserveAspectRatio="none" shape-rendering="crispEdges"><rect x="5" y="0" width="1" height="1" fill="#4b5e4b"/><rect x="6" y="0" width="1" height="1" fill="#c9f1c9"/><rect x="4" y="1" width="1" height="1" fill="#4b5e4b"/><rect x="5" y="1" width="1" height="1" fill="#c9f1c9"/><rect x="6" y="1" width="1" height="1" fill="#4b5e4b"/><rect x="3" y="2" width="1" height="1" fill="#4b5e4b"/><rect x="4" y="2" width="1" height="1" fill="#c9f1c9"/><rect x="5" y="2" width="1" height="1" fill="#4b5e4b"/><rect x="2" y="3" width="1" height="1" fill="#4b5e4b"/><rect x="3" y="3" width="1" height="1" fill="#c9f1c9"/><rect x="4" y="3" width="1" height="1" fill="#4b5e4b"/><rect x="1" y="4" width="1" height="1" fill="#4b5e4b"/><rect x="2" y="4" width="1" height="1" fill="#c9f1c9"/><rect x="3" y="4" width="1" height="1" fill="#4b5e4b"/><rect x="0" y="5" width="1" height="1" fill="#4b5e4b"/><rect x="1" y="5" width="1" height="1" fill="#c9f1c9"/><rect x="2" y="5" width="1" height="1" fill="#4b5e4b"/><rect x="0" y="6" width="1" height="1" fill="#c9f1c9"/><rect x="1" y="6" width="1" height="1" fill="#4b5e4b"/></svg>
<svg style="position:absolute;left:874px;top:93px" width="10.8" height="10.8" viewBox="0 0 3 3" preserveAspectRatio="none" shape-rendering="crispEdges"><rect x="2" y="0" width="1" height="1" fill="#4b5e4b"/><rect x="1" y="1" width="1" height="1" fill="#4b5e4b"/><rect x="2" y="1" width="1" height="1" fill="#8eae8c"/><rect x="0" y="2" width="3" height="1" fill="#8eae8c"/></svg>
<svg style="position:absolute;left:916.3px;top:65.8px" width="21.6" height="32.4" viewBox="0 0 6 9" preserveAspectRatio="none" shape-rendering="crispEdges"><rect x="2" y="0" width="1" height="1" fill="#c9f1c9"/><rect x="3" y="0" width="1" height="1" fill="#8eae8c"/><rect x="1" y="1" width="2" height="1" fill="#8eae8c"/><rect x="3" y="1" width="1" height="1" fill="#c9f1c9"/><rect x="4" y="1" width="1" height="1" fill="#8eae8c"/><rect x="1" y="2" width="4" height="1" fill="#c9f1c9"/><rect x="0" y="3" width="1" height="1" fill="#8eae8c"/><rect x="1" y="3" width="4" height="1" fill="#c9f1c9"/><rect x="5" y="3" width="1" height="1" fill="#8eae8c"/><rect x="0" y="4" width="1" height="1" fill="#c9f1c9"/><rect x="1" y="4" width="1" height="1" fill="#000"/><rect x="2" y="4" width="4" height="1" fill="#c9f1c9"/><rect x="0" y="5" width="1" height="1" fill="#c9f1c9"/><rect x="1" y="5" width="1" height="1" fill="#000"/><rect x="2" y="5" width="4" height="1" fill="#c9f1c9"/><rect x="0" y="6" width="5" height="1" fill="#c9f1c9"/><rect x="5" y="6" width="1" height="1" fill="#4b5e4b"/><rect x="0" y="7" width="1" height="1" fill="#8eae8c"/><rect x="1" y="7" width="2" height="1" fill="#c9f1c9"/><rect x="3" y="7" width="1" height="1" fill="#8eae8c"/><rect x="4" y="7" width="1" height="1" fill="#4b5e4b"/><rect x="5" y="7" width="1" height="1" fill="#8eae8c"/><rect x="1" y="8" width="1" height="1" fill="#8eae8c"/><rect x="2" y="8" width="2" height="1" fill="#c9f1c9"/><rect x="4" y="8" width="1" height="1" fill="#8eae8c"/></svg>
<svg style="position:absolute;left:947px;top:93px" width="10.8" height="10.8" viewBox="0 0 3 3" preserveAspectRatio="none" shape-rendering="crispEdges"><rect x="2" y="0" width="1" height="1" fill="#4b5e4b"/><rect x="1" y="1" width="1" height="1" fill="#4b5e4b"/><rect x="2" y="1" width="1" height="1" fill="#8eae8c"/><rect x="0" y="2" width="3" height="1" fill="#8eae8c"/></svg>
<svg style="position:absolute;left:987.8px;top:77px" width="7.2" height="10.8" viewBox="0 0 2 3" preserveAspectRatio="none" shape-rendering="crispEdges"><rect x="1" y="0" width="1" height="1" fill="#000"/><rect x="0" y="1" width="1" height="1" fill="#000"/><rect x="1" y="2" width="1" height="1" fill="#000"/></svg>
<div style="left:1007.5px;top:72.99px;font:24.29px/24.29px 'Liberation Mono',monospace;color:#000;white-space:pre;transform:scaleX(0.7548);transform-origin:0 0;">1p</div>
<div style="left:1068px;top:80px;width:4px;height:3.8px;background:#000;"></div>
<svg style="position:absolute;left:1093.4px;top:77px" width="7.2" height="10.8" viewBox="0 0 2 3" preserveAspectRatio="none" shape-rendering="crispEdges"><rect x="0" y="0" width="1" height="1" fill="#000"/><rect x="1" y="1" width="1" height="1" fill="#000"/><rect x="0" y="2" width="1" height="1" fill="#000"/></svg>
<div style="left:1128.5px;top:74.26px;font:23.68px/23.68px 'Liberation Mono',monospace;color:#000;white-space:pre;transform:scaleX(0.7769);transform-origin:0 0;">Blend</div>
<div style="left:1198.2px;top:67.5px;width:20.7px;height:3.8px;background:#000;"></div>
<div style="left:1198.2px;top:92.9px;width:20.7px;height:3.8px;background:#000;"></div>
<div style="left:1194.4px;top:71.3px;width:3.8px;height:21.6px;background:#000;"></div>
<div style="left:1218.9px;top:71.3px;width:3.8px;height:21.6px;background:#000;"></div>
<svg style="position:absolute;left:1198.2px;top:71.3px" width="21" height="21" viewBox="0 0 7 7" preserveAspectRatio="none" shape-rendering="crispEdges"><rect x="0" y="0" width="6" height="1" fill="#4f7549"/><rect x="0" y="1" width="1" height="1" fill="#4f7549"/><rect x="5" y="1" width="2" height="1" fill="#000"/><rect x="0" y="2" width="1" height="1" fill="#4f7549"/><rect x="4" y="2" width="2" height="1" fill="#000"/><rect x="0" y="3" width="1" height="1" fill="#4f7549"/><rect x="3" y="3" width="2" height="1" fill="#000"/><rect x="0" y="4" width="1" height="1" fill="#000"/><rect x="2" y="4" width="2" height="1" fill="#000"/><rect x="0" y="5" width="3" height="1" fill="#000"/><rect x="1" y="6" width="1" height="1" fill="#000"/></svg>
<div style="left:1244px;top:62.85px;font:22.77px/22.77px 'Liberation Mono',monospace;color:#3f5a3c;white-space:pre;transform:scaleX(0.8051);transform-origin:0 0;">Pixel</div>
<div style="left:1244px;top:83.95px;font:22.77px/22.77px 'Liberation Mono',monospace;color:#3f5a3c;white-space:pre;transform:scaleX(0.8051);transform-origin:0 0;">Perfect</div>
<div style="left:1335px;top:67.7px;width:21.9px;height:3.8px;background:#3f5a3c;"></div>
<div style="left:1335px;top:92.8px;width:21.9px;height:3.8px;background:#3f5a3c;"></div>
<div style="left:1331.2px;top:71.5px;width:3.8px;height:21.3px;background:#3f5a3c;"></div>
<div style="left:1356.9px;top:71.5px;width:3.8px;height:21.3px;background:#3f5a3c;"></div>
<div style="left:1382px;top:62.85px;font:22.77px/22.77px 'Liberation Mono',monospace;color:#3f5a3c;white-space:pre;transform:scaleX(0.8051);transform-origin:0 0;">Alpha</div>
<div style="left:1382px;top:83.95px;font:22.77px/22.77px 'Liberation Mono',monospace;color:#3f5a3c;white-space:pre;transform:scaleX(0.8051);transform-origin:0 0;">Lock</div>
<div style="left:1450.7px;top:67.7px;width:21.3px;height:3.8px;background:#3f5a3c;"></div>
<div style="left:1450.7px;top:92.8px;width:21.3px;height:3.8px;background:#3f5a3c;"></div>
<div style="left:1446.9px;top:71.5px;width:3.8px;height:21.3px;background:#3f5a3c;"></div>
<div style="left:1472px;top:71.5px;width:3.8px;height:21.3px;background:#3f5a3c;"></div>
<svg style="position:absolute;left:1499.7px;top:77px" width="7.2" height="10.8" viewBox="0 0 2 3" preserveAspectRatio="none" shape-rendering="crispEdges"><rect x="1" y="0" width="1" height="1" fill="#3f5a3c"/><rect x="0" y="1" width="1" height="1" fill="#3f5a3c"/><rect x="1" y="2" width="1" height="1" fill="#3f5a3c"/></svg>
<div style="left:1510.5px;top:71.55px;font:26.57px/26.57px 'Liberation Mono',monospace;color:#3f5a3c;white-space:pre;transform:scaleX(0.8155);transform-origin:0 0;">DP</div>
<svg style="position:absolute;left:1541.9px;top:60px" width="43.8" height="43.8" viewBox="0 0 12 12" preserveAspectRatio="none" shape-rendering="crispEdges"><rect x="3" y="0" width="1" height="1" fill="#3f5a3c"/><rect x="7" y="0" width="1" height="1" fill="#3f5a3c"/><rect x="11" y="0" width="1" height="1" fill="#3f5a3c"/><rect x="2" y="1" width="1" height="1" fill="#3f5a3c"/><rect x="6" y="1" width="1" height="1" fill="#3f5a3c"/><rect x="10" y="1" width="1" height="1" fill="#3f5a3c"/><rect x="1" y="2" width="1" height="1" fill="#3f5a3c"/><rect x="5" y="2" width="1" height="1" fill="#3f5a3c"/><rect x="9" y="2" width="1" height="1" fill="#3f5a3c"/><rect x="0" y="3" width="1" height="1" fill="#3f5a3c"/><rect x="4" y="3" width="1" height="1" fill="#3f5a3c"/><rect x="8" y="3" width="1" height="1" fill="#3f5a3c"/><rect x="3" y="4" width="1" height="1" fill="#3f5a3c"/><rect x="7" y="4" width="1" height="1" fill="#3f5a3c"/><rect x="11" y="4" width="1" height="1" fill="#3f5a3c"/><rect x="2" y="5" width="1" height="1" fill="#3f5a3c"/><rect x="6" y="5" width="1" height="1" fill="#3f5a3c"/><rect x="10" y="5" width="1" height="1" fill="#3f5a3c"/><rect x="1" y="6" width="1" height="1" fill="#3f5a3c"/><rect x="5" y="6" width="1" height="1" fill="#3f5a3c"/><rect x="9" y="6" width="1" height="1" fill="#3f5a3c"/><rect x="0" y="7" width="1" height="1" fill="#3f5a3c"/><rect x="4" y="7" width="1" height="1" fill="#3f5a3c"/><rect x="8" y="7" width="1" height="1" fill="#3f5a3c"/><rect x="3" y="8" width="1" height="1" fill="#3f5a3c"/><rect x="7" y="8" width="1" height="1" fill="#3f5a3c"/><rect x="11" y="8" width="1" height="1" fill="#3f5a3c"/><rect x="2" y="9" width="1" height="1" fill="#3f5a3c"/><rect x="6" y="9" width="1" height="1" fill="#3f5a3c"/><rect x="10" y="9" width="1" height="1" fill="#3f5a3c"/><rect x="1" y="10" width="1" height="1" fill="#3f5a3c"/><rect x="5" y="10" width="1" height="1" fill="#3f5a3c"/><rect x="9" y="10" width="1" height="1" fill="#3f5a3c"/><rect x="0" y="11" width="1" height="1" fill="#3f5a3c"/><rect x="4" y="11" width="1" height="1" fill="#3f5a3c"/><rect x="8" y="11" width="1" height="1" fill="#3f5a3c"/></svg>
<div style="left:1587px;top:71.55px;font:26.57px/26.57px 'Liberation Mono',monospace;color:#3f5a3c;white-space:pre;transform:scaleX(0.8218);transform-origin:0 0;">22</div>
<svg style="position:absolute;left:1617px;top:77px" width="7.2" height="10.8" viewBox="0 0 2 3" preserveAspectRatio="none" shape-rendering="crispEdges"><rect x="0" y="0" width="1" height="1" fill="#3f5a3c"/><rect x="1" y="1" width="1" height="1" fill="#3f5a3c"/><rect x="0" y="2" width="1" height="1" fill="#3f5a3c"/></svg>
<div style="left:1985px;top:70.63px;font:25.81px/25.81px 'Liberation Mono',monospace;color:#000;white-space:pre;transform:scaleX(0.8234);transform-origin:0 0;">Resprite R49</div>
<div style="left:9px;top:129.7px;width:558.5px;height:531.3px;background:#080a0a;"></div>
<div style="left:12.8px;top:133.3px;width:550.9px;height:51.1px;background:#5b8456;"></div>
<div style="left:12.8px;top:133.3px;width:550.9px;height:3.8px;background:#89c78b;"></div>
<div style="left:12.8px;top:133.3px;width:3.8px;height:51.1px;background:#89c78b;"></div>
<div style="left:560.1px;top:133.3px;width:3.6px;height:51.1px;background:#89c78b;opacity:.75"></div>
<div style="left:27.5px;top:152.5px;width:8.2px;height:8.2px;background:#0b0b0b;"></div>
<div style="left:32.01px;top:152.5px;width:3.69px;height:8.2px;background:#2f472d;"></div>
<div style="left:37.9px;top:152.5px;width:8.2px;height:8.2px;background:#0b0b0b;"></div>
<div style="left:42.41px;top:152.5px;width:3.69px;height:8.2px;background:#2f472d;"></div>
<div style="left:48.3px;top:152.5px;width:8.2px;height:8.2px;background:#0b0b0b;"></div>
<div style="left:52.81px;top:152.5px;width:3.69px;height:8.2px;background:#2f472d;"></div>
<div style="left:27.5px;top:162.9px;width:8.2px;height:8.2px;background:#0b0b0b;"></div>
<div style="left:32.01px;top:162.9px;width:3.69px;height:8.2px;background:#2f472d;"></div>
<div style="left:37.9px;top:162.9px;width:8.2px;height:8.2px;background:#0b0b0b;"></div>
<div style="left:42.41px;top:162.9px;width:3.69px;height:8.2px;background:#2f472d;"></div>
<div style="left:48.3px;top:162.9px;width:8.2px;height:8.2px;background:#0b0b0b;"></div>
<div style="left:52.81px;top:162.9px;width:3.69px;height:8.2px;background:#2f472d;"></div>
<div style="left:62px;top:150.58px;font:25.35px/25.35px 'Liberation Mono',monospace;color:#0b0b0b;white-space:pre;transform:scaleX(0.8480);transform-origin:0 0;">Palette</div>
<div style="left:416.3px;top:139.2px;width:43.3px;height:42.8px;background:#141414;clip-path:polygon(3.3px 0px,40px 0px,40px 3.3px,43.3px 3.3px,43.3px 39.5px,40px 39.5px,40px 42.8px,3.3px 42.8px,3.3px 39.5px,0px 39.5px,0px 3.3px,3.3px 3.3px)"></div>
<div style="left:423.2px;top:142.5px;width:29.5px;height:3.6px;background:#3c3c3c;"></div>
<div style="left:423.2px;top:172.4px;width:29.5px;height:3.6px;background:#3c3c3c;"></div>
<div style="left:419.6px;top:146.1px;width:3.6px;height:26.3px;background:#3c3c3c;"></div>
<div style="left:452.7px;top:146.1px;width:3.6px;height:26.3px;background:#3c3c3c;"></div>
<div style="left:423.2px;top:146.1px;width:29.5px;height:26.3px;background:#000;"></div>
<div style="left:465.8px;top:139.2px;width:43.3px;height:42.8px;background:#141414;clip-path:polygon(3.3px 0px,40px 0px,40px 3.3px,43.3px 3.3px,43.3px 39.5px,40px 39.5px,40px 42.8px,3.3px 42.8px,3.3px 39.5px,0px 39.5px,0px 3.3px,3.3px 3.3px)"></div>
<div style="left:472.7px;top:142.5px;width:29.5px;height:3.6px;background:#3c3c3c;"></div>
<div style="left:472.7px;top:172.4px;width:29.5px;height:3.6px;background:#3c3c3c;"></div>
<div style="left:469.1px;top:146.1px;width:3.6px;height:26.3px;background:#3c3c3c;"></div>
<div style="left:502.2px;top:146.1px;width:3.6px;height:26.3px;background:#3c3c3c;"></div>
<div style="left:472.7px;top:146.1px;width:29.5px;height:26.3px;background:#000;"></div>
<div style="left:515.4px;top:139.2px;width:43.3px;height:42.8px;background:#141414;clip-path:polygon(3.3px 0px,40px 0px,40px 3.3px,43.3px 3.3px,43.3px 39.5px,40px 39.5px,40px 42.8px,3.3px 42.8px,3.3px 39.5px,0px 39.5px,0px 3.3px,3.3px 3.3px)"></div>
<div style="left:522.3px;top:142.5px;width:29.5px;height:3.6px;background:#3c3c3c;"></div>
<div style="left:522.3px;top:172.4px;width:29.5px;height:3.6px;background:#3c3c3c;"></div>
<div style="left:518.7px;top:146.1px;width:3.6px;height:26.3px;background:#3c3c3c;"></div>
<div style="left:551.8px;top:146.1px;width:3.6px;height:26.3px;background:#3c3c3c;"></div>
<div style="left:522.3px;top:146.1px;width:29.5px;height:26.3px;background:#000;"></div>
<svg style="position:absolute;left:428.75px;top:151.7px" width="18.5" height="18.5" viewBox="0 0 5 5" preserveAspectRatio="none" shape-rendering="crispEdges"><rect x="1" y="0" width="1" height="1" fill="#c9f1c9"/><rect x="3" y="0" width="1" height="1" fill="#c9f1c9"/><rect x="0" y="1" width="2" height="1" fill="#c9f1c9"/><rect x="3" y="1" width="2" height="1" fill="#c9f1c9"/><rect x="0" y="2" width="1" height="1" fill="#c9f1c9"/><rect x="4" y="2" width="1" height="1" fill="#c9f1c9"/><rect x="1" y="3" width="1" height="1" fill="#c9f1c9"/><rect x="3" y="3" width="1" height="1" fill="#c9f1c9"/><rect x="2" y="4" width="1" height="1" fill="#c9f1c9"/></svg>
<svg style="position:absolute;left:478px;top:147.9px" width="18.5" height="25.9" viewBox="0 0 5 7" preserveAspectRatio="none" shape-rendering="crispEdges"><rect x="2" y="0" width="1" height="1" fill="#8eae8c"/><rect x="3" y="0" width="1" height="1" fill="#c9f1c9"/><rect x="1" y="1" width="1" height="1" fill="#c9f1c9"/><rect x="3" y="1" width="1" height="1" fill="#c9f1c9"/><rect x="1" y="2" width="1" height="1" fill="#c9f1c9"/><rect x="0" y="3" width="5" height="1" fill="#c9f1c9"/><rect x="0" y="4" width="1" height="1" fill="#c9f1c9"/><rect x="1" y="4" width="3" height="1" fill="#4b5e4b"/><rect x="4" y="4" width="1" height="1" fill="#c9f1c9"/><rect x="0" y="5" width="1" height="1" fill="#c9f1c9"/><rect x="1" y="5" width="3" height="1" fill="#4b5e4b"/><rect x="4" y="5" width="1" height="1" fill="#c9f1c9"/><rect x="0" y="6" width="5" height="1" fill="#c9f1c9"/></svg>
<svg style="position:absolute;left:523.8px;top:149.6px" width="25.9" height="22.2" viewBox="0 0 7 6" preserveAspectRatio="none" shape-rendering="crispEdges"><rect x="0" y="0" width="7" height="1" fill="#c9f1c9"/><rect x="0" y="2" width="1" height="1" fill="#c9f1c9"/><rect x="6" y="2" width="1" height="1" fill="#c9f1c9"/><rect x="0" y="4" width="1" height="1" fill="#c9f1c9"/><rect x="6" y="4" width="1" height="1" fill="#c9f1c9"/><rect x="1" y="5" width="1" height="1" fill="#c9f1c9"/><rect x="3" y="5" width="1" height="1" fill="#c9f1c9"/><rect x="5" y="5" width="1" height="1" fill="#c9f1c9"/></svg>
<div style="left:16.7px;top:184.4px;width:543.7px;height:465.6px;background:#000;"></div>
<div style="left:22.2px;top:196.2px;width:483.6px;height:3px;background:#383838;"></div>
<div style="left:18px;top:199.2px;width:4.2px;height:437.8px;background:#3a3a3a;"></div>
<div style="left:22.2px;top:631.7px;width:483.6px;height:5.3px;background:#3a3a3a;"></div>
<div style="left:26px;top:199.2px;width:458.2px;height:432.5px;background:#3a4c4c;"></div>
<div style="left:22.2px;top:199.2px;width:3.8px;height:432.5px;background:#1a1f1f;"></div>
<div style="left:484.2px;top:199.2px;width:17.1px;height:432.5px;background:#111717;"></div>
<div style="left:501.7px;top:199.2px;width:4.1px;height:437.8px;background:#3a3a3a;"></div>
<div style="left:510.8px;top:202.5px;width:38.8px;height:339px;background:#3a3a3a;"></div>
<div style="left:515px;top:206px;width:30.8px;height:331.5px;background:#ffffff;"></div>
<div style="left:509.5px;top:557px;width:41.5px;height:43px;background:#141414;clip-path:polygon(3.3px 0px,38.2px 0px,38.2px 3.3px,41.5px 3.3px,41.5px 39.7px,38.2px 39.7px,38.2px 43px,3.3px 43px,3.3px 39.7px,0px 39.7px,0px 3.3px,3.3px 3.3px)"></div>
<div style="left:516.4px;top:560.3px;width:27.7px;height:3.6px;background:#3c3c3c;"></div>
<div style="left:516.4px;top:590.4px;width:27.7px;height:3.6px;background:#3c3c3c;"></div>
<div style="left:512.8px;top:563.9px;width:3.6px;height:26.5px;background:#3c3c3c;"></div>
<div style="left:544.1px;top:563.9px;width:3.6px;height:26.5px;background:#3c3c3c;"></div>
<div style="left:516.4px;top:563.9px;width:27.7px;height:26.5px;background:#000;"></div>
<svg style="position:absolute;left:521px;top:567.5px" width="18.9" height="18.9" viewBox="0 0 7 7" preserveAspectRatio="none" shape-rendering="crispEdges"><rect x="0" y="0" width="1" height="1" fill="#c9f1c9"/><rect x="3" y="0" width="1" height="1" fill="#8eae8c"/><rect x="6" y="0" width="1" height="1" fill="#c9f1c9"/><rect x="1" y="1" width="1" height="1" fill="#8eae8c"/><rect x="3" y="1" width="1" height="1" fill="#c9f1c9"/><rect x="5" y="1" width="1" height="1" fill="#8eae8c"/><rect x="2" y="2" width="1" height="1" fill="#8eae8c"/><rect x="3" y="2" width="1" height="1" fill="#c9f1c9"/><rect x="4" y="2" width="1" height="1" fill="#8eae8c"/><rect x="3" y="3" width="1" height="1" fill="#c9f1c9"/><rect x="2" y="4" width="1" height="1" fill="#8eae8c"/><rect x="3" y="4" width="1" height="1" fill="#c9f1c9"/><rect x="4" y="4" width="1" height="1" fill="#8eae8c"/><rect x="1" y="5" width="1" height="1" fill="#8eae8c"/><rect x="3" y="5" width="1" height="1" fill="#c9f1c9"/><rect x="5" y="5" width="1" height="1" fill="#8eae8c"/><rect x="0" y="6" width="1" height="1" fill="#c9f1c9"/><rect x="3" y="6" width="1" height="1" fill="#8eae8c"/><rect x="6" y="6" width="1" height="1" fill="#c9f1c9"/></svg>
<div style="left:12.8px;top:184.4px;width:3.8px;height:471.2px;background:#3d3d3d;"></div>
<div style="left:560.1px;top:184.4px;width:3.6px;height:471.2px;background:#3d3d3d;"></div>
<div style="left:12.8px;top:650px;width:550.9px;height:5.6px;background:#3d3d3d;"></div>
<svg style="position:absolute;left:545px;top:631px" width="16" height="17" viewBox="0 0 16 17" preserveAspectRatio="none" shape-rendering="crispEdges"><path d="M16 0 L16 17 L0 17 Z" fill="#8a8a8a"/></svg>
<div style="left:22.8px;top:197px;width:58.6px;height:58.6px;background:#000;"></div>
<div style="left:77.75px;top:197px;width:58.6px;height:58.6px;background:#000;"></div>
<div style="left:132.7px;top:197px;width:58.6px;height:58.6px;background:#000;"></div>
<div style="left:187.65px;top:197px;width:58.6px;height:58.6px;background:#000;"></div>
<div style="left:22.8px;top:251.95px;width:58.6px;height:58.6px;background:#000;"></div>
<div style="left:77.75px;top:251.95px;width:58.6px;height:58.6px;background:#000;"></div>
<div style="left:132.7px;top:251.95px;width:58.6px;height:58.6px;background:#000;"></div>
<div style="left:187.65px;top:251.95px;width:58.6px;height:58.6px;background:#000;"></div>
<div style="left:242.6px;top:251.95px;width:58.6px;height:58.6px;background:#000;"></div>
<div style="left:297.55px;top:251.95px;width:58.6px;height:58.6px;background:#000;"></div>
<div style="left:22.8px;top:306.9px;width:58.6px;height:58.6px;background:#000;"></div>
<div style="left:77.75px;top:306.9px;width:58.6px;height:58.6px;background:#000;"></div>
<div style="left:132.7px;top:306.9px;width:58.6px;height:58.6px;background:#000;"></div>
<div style="left:187.65px;top:306.9px;width:58.6px;height:58.6px;background:#000;"></div>
<div style="left:242.6px;top:306.9px;width:58.6px;height:58.6px;background:#000;"></div>
<div style="left:22.8px;top:361.85px;width:58.6px;height:58.6px;background:#000;"></div>
<div style="left:77.75px;top:361.85px;width:58.6px;height:58.6px;background:#000;"></div>
<div style="left:132.7px;top:361.85px;width:58.6px;height:58.6px;background:#000;"></div>
<div style="left:187.65px;top:361.85px;width:58.6px;height:58.6px;background:#000;"></div>
<div style="left:22.8px;top:416.8px;width:58.6px;height:58.6px;background:#000;"></div>
<div style="left:77.75px;top:416.8px;width:58.6px;height:58.6px;background:#000;"></div>
<div style="left:132.7px;top:416.8px;width:58.6px;height:58.6px;background:#000;"></div>
<div style="left:187.65px;top:416.8px;width:58.6px;height:58.6px;background:#000;"></div>
<div style="left:22.8px;top:471.75px;width:58.6px;height:58.6px;background:#000;"></div>
<div style="left:77.75px;top:471.75px;width:58.6px;height:58.6px;background:#000;"></div>
<div style="left:132.7px;top:471.75px;width:58.6px;height:58.6px;background:#000;"></div>
<div style="left:187.65px;top:471.75px;width:58.6px;height:58.6px;background:#000;"></div>
<div style="left:22.8px;top:526.7px;width:58.6px;height:58.6px;background:#000;"></div>
<div style="left:132.7px;top:526.7px;width:58.6px;height:58.6px;background:#000;"></div>
<div style="left:187.65px;top:526.7px;width:58.6px;height:58.6px;background:#000;"></div>
<div style="left:26.4px;top:200.6px;width:51.4px;height:51.4px;background:#000000;"></div>
<div style="left:81.35px;top:200.6px;width:51.4px;height:51.4px;background:#6e6e6e;"></div>
<div style="left:136.3px;top:200.6px;width:51.4px;height:51.4px;background:#b9b9b9;"></div>
<div style="left:191.25px;top:200.6px;width:51.4px;height:51.4px;background:#ffffff;"></div>
<div style="left:26.4px;top:255.55px;width:51.4px;height:51.4px;background:#3b2414;"></div>
<div style="left:81.35px;top:255.55px;width:51.4px;height:51.4px;background:#4a2c1a;"></div>
<div style="left:136.3px;top:255.55px;width:51.4px;height:51.4px;background:#5a371f;"></div>
<div style="left:191.25px;top:255.55px;width:51.4px;height:51.4px;background:#5b391e;"></div>
<div style="left:246.2px;top:255.55px;width:51.4px;height:51.4px;background:#614425;"></div>
<div style="left:301.15px;top:255.55px;width:51.4px;height:51.4px;background:#765a30;"></div>
<div style="left:26.4px;top:310.5px;width:51.4px;height:51.4px;background:#4a1478;"></div>
<div style="left:81.35px;top:310.5px;width:51.4px;height:51.4px;background:#5a1a88;"></div>
<div style="left:136.3px;top:310.5px;width:51.4px;height:51.4px;background:#651c90;"></div>
<div style="left:191.25px;top:310.5px;width:51.4px;height:51.4px;background:#9a36bb;"></div>
<div style="left:246.2px;top:310.5px;width:51.4px;height:51.4px;background:#5e2236;"></div>
<div style="left:26.4px;top:365.45px;width:51.4px;height:51.4px;background:#3f8a6b;"></div>
<div style="left:81.35px;top:365.45px;width:51.4px;height:51.4px;background:#58b07f;"></div>
<div style="left:136.3px;top:365.45px;width:51.4px;height:51.4px;background:#62c08a;"></div>
<div style="left:191.25px;top:365.45px;width:51.4px;height:51.4px;background:#7fd6a6;"></div>
<div style="left:26.4px;top:420.4px;width:51.4px;height:51.4px;background:#e5c987;"></div>
<div style="left:81.35px;top:420.4px;width:51.4px;height:51.4px;background:#dcb976;"></div>
<div style="left:136.3px;top:420.4px;width:51.4px;height:51.4px;background:#eae9df;"></div>
<div style="left:191.25px;top:420.4px;width:51.4px;height:51.4px;background:#d8aa93;"></div>
<div style="left:26.4px;top:475.35px;width:51.4px;height:51.4px;background:#263116;"></div>
<div style="left:81.35px;top:475.35px;width:51.4px;height:51.4px;background:#4d6329;"></div>
<div style="left:136.3px;top:475.35px;width:51.4px;height:51.4px;background:#565c27;"></div>
<div style="left:191.25px;top:475.35px;width:51.4px;height:51.4px;background:#5b6429;"></div>
<div style="left:26.4px;top:530.3px;width:51.4px;height:51.4px;background:#37403d;"></div>
<div style="left:136.3px;top:530.3px;width:51.4px;height:51.4px;background:#5d7377;"></div>
<div style="left:191.25px;top:530.3px;width:51.4px;height:51.4px;background:#667d77;"></div>
<svg style="position:absolute;left:26.4px;top:200.6px" width="20" height="20" viewBox="0 0 20 20" preserveAspectRatio="none" shape-rendering="crispEdges"><path d="M0 0 L20 0 L0 20 Z" fill="#5a5a5a"/></svg>
<div style="left:9.1px;top:725.2px;width:383.9px;height:375.8px;background:#080a0a;"></div>
<div style="left:12.9px;top:728.8px;width:376.3px;height:49.8px;background:#5b8456;"></div>
<div style="left:12.9px;top:728.8px;width:376.3px;height:3.8px;background:#89c78b;"></div>
<div style="left:12.9px;top:728.8px;width:3.8px;height:49.8px;background:#89c78b;"></div>
<div style="left:385.6px;top:728.8px;width:3.6px;height:49.8px;background:#89c78b;opacity:.75"></div>
<div style="left:27.3px;top:746.5px;width:8.2px;height:8.2px;background:#0b0b0b;"></div>
<div style="left:31.81px;top:746.5px;width:3.69px;height:8.2px;background:#2f472d;"></div>
<div style="left:37.7px;top:746.5px;width:8.2px;height:8.2px;background:#0b0b0b;"></div>
<div style="left:42.21px;top:746.5px;width:3.69px;height:8.2px;background:#2f472d;"></div>
<div style="left:48.1px;top:746.5px;width:8.2px;height:8.2px;background:#0b0b0b;"></div>
<div style="left:52.61px;top:746.5px;width:3.69px;height:8.2px;background:#2f472d;"></div>
<div style="left:27.3px;top:756.9px;width:8.2px;height:8.2px;background:#0b0b0b;"></div>
<div style="left:31.81px;top:756.9px;width:3.69px;height:8.2px;background:#2f472d;"></div>
<div style="left:37.7px;top:756.9px;width:8.2px;height:8.2px;background:#0b0b0b;"></div>
<div style="left:42.21px;top:756.9px;width:3.69px;height:8.2px;background:#2f472d;"></div>
<div style="left:48.1px;top:756.9px;width:8.2px;height:8.2px;background:#0b0b0b;"></div>
<div style="left:52.61px;top:756.9px;width:3.69px;height:8.2px;background:#2f472d;"></div>
<div style="left:62.8px;top:744.83px;font:25.81px/25.81px 'Liberation Mono',monospace;color:#0b0b0b;white-space:pre;transform:scaleX(0.8266);transform-origin:0 0;">ColorPicker</div>
<div style="left:339.8px;top:734.3px;width:43px;height:42.2px;background:#141414;clip-path:polygon(3.3px 0px,39.7px 0px,39.7px 3.3px,43px 3.3px,43px 38.9px,39.7px 38.9px,39.7px 42.2px,3.3px 42.2px,3.3px 38.9px,0px 38.9px,0px 3.3px,3.3px 3.3px)"></div>
<div style="left:346.7px;top:737.6px;width:29.2px;height:3.6px;background:#3c3c3c;"></div>
<div style="left:346.7px;top:766.9px;width:29.2px;height:3.6px;background:#3c3c3c;"></div>
<div style="left:343.1px;top:741.2px;width:3.6px;height:25.7px;background:#3c3c3c;"></div>
<div style="left:375.9px;top:741.2px;width:3.6px;height:25.7px;background:#3c3c3c;"></div>
<div style="left:346.7px;top:741.2px;width:29.2px;height:25.7px;background:#000;"></div>
<svg style="position:absolute;left:348.5px;top:745px" width="25.9" height="22.2" viewBox="0 0 7 6" preserveAspectRatio="none" shape-rendering="crispEdges"><rect x="0" y="0" width="7" height="1" fill="#c9f1c9"/><rect x="0" y="2" width="1" height="1" fill="#c9f1c9"/><rect x="6" y="2" width="1" height="1" fill="#c9f1c9"/><rect x="0" y="4" width="1" height="1" fill="#c9f1c9"/><rect x="6" y="4" width="1" height="1" fill="#c9f1c9"/><rect x="1" y="5" width="1" height="1" fill="#c9f1c9"/><rect x="3" y="5" width="1" height="1" fill="#c9f1c9"/><rect x="5" y="5" width="1" height="1" fill="#c9f1c9"/></svg>
<div style="left:13px;top:778.6px;width:376px;height:316.4px;background:#000;"></div>
<div style="left:12.9px;top:778.6px;width:3.8px;height:312.2px;background:#3d3d3d;"></div>
<div style="left:385.6px;top:778.6px;width:3.6px;height:312.2px;background:#3d3d3d;"></div>
<div style="left:12.9px;top:1086.8px;width:376.3px;height:4px;background:#3d3d3d;"></div>
<div style="left:24px;top:790.8px;width:353.4px;height:231.2px;background:#3a3a3a;"></div>
<div style="left:27.6px;top:790.8px;width:346.2px;height:227.4px;background:#000;"></div>
<div style="left:30.8px;top:790.8px;width:343px;height:3.2px;background:#111;"></div>
<div style="left:30.7px;top:794.2px;width:339.3px;height:130.2px;background:linear-gradient(to bottom,rgba(0,0,0,0),#000),linear-gradient(to right,#fff,#ea3a2c)"></div>
<div style="left:30.7px;top:924.4px;width:339.3px;height:46.6px;background:linear-gradient(to right,#e8392c 0%,#f0a23a 10%,#fffb54 16%,#c6f950 24%,#74f74a 33%,#77f7a0 45%,#78fbf8 50%,#3a8bf5 60%,#0000f5 67%,#7f1bf6 75%,#eb3ff6 83%,#e8392c 100%)"></div>
<svg style="position:absolute;left:30.7px;top:971px" width="339.3" height="44.4" viewBox="0 0 339.3 44.4" preserveAspectRatio="none" shape-rendering="crispEdges"><rect width="339.3" height="44.4" fill="#c9c9c9"/><rect x="0" y="16.5" width="36.4" height="17.5" fill="#9a9a9a"/><rect x="36.4" y="-1" width="36.4" height="17.5" fill="#9a9a9a"/><rect x="36.4" y="34" width="36.4" height="17.5" fill="#9a9a9a"/><rect x="72.8" y="16.5" width="36.4" height="17.5" fill="#9a9a9a"/><rect x="109.2" y="-1" width="36.4" height="17.5" fill="#9a9a9a"/><rect x="109.2" y="34" width="36.4" height="17.5" fill="#9a9a9a"/><rect x="145.6" y="16.5" width="36.4" height="17.5" fill="#9a9a9a"/><rect x="182" y="-1" width="36.4" height="17.5" fill="#9a9a9a"/><rect x="182" y="34" width="36.4" height="17.5" fill="#9a9a9a"/><rect x="218.4" y="16.5" width="36.4" height="17.5" fill="#9a9a9a"/><rect x="254.8" y="-1" width="36.4" height="17.5" fill="#9a9a9a"/><rect x="254.8" y="34" width="36.4" height="17.5" fill="#9a9a9a"/><rect x="291.2" y="16.5" width="36.4" height="17.5" fill="#9a9a9a"/><defs><linearGradient id="ag"><stop offset="0" stop-color="#fff" stop-opacity="0"/><stop offset="1" stop-color="#fff" stop-opacity="1"/></linearGradient></defs><rect width="339.3" height="44.4" fill="url(#ag)"/></svg>
<div style="left:30.8px;top:794.2px;width:339.3px;height:221.2px;overflow:hidden"><div style="left:-3px;top:-4.5px;width:9px;height:9px;border:1.6px solid #111;border-radius:50%;background:#fff"></div><div style="left:-6.5px;top:146px;width:9px;height:12px;border:1.6px solid #111;border-radius:50%;background:#fff"></div><div style="left:333px;top:190px;width:9px;height:12px;border:1.6px solid #111;border-radius:50%;background:#fff"></div></div>
<div style="left:32.5px;top:1029.7px;width:253.8px;height:39.1px;background:#3a3a3a;"></div>
<div style="left:36.5px;top:1033.6px;width:246px;height:31.4px;background:#fff;"></div>
<div style="left:297px;top:1027.5px;width:40px;height:44.5px;background:#141414;clip-path:polygon(3.3px 0px,36.7px 0px,36.7px 3.3px,40px 3.3px,40px 41.2px,36.7px 41.2px,36.7px 44.5px,3.3px 44.5px,3.3px 41.2px,0px 41.2px,0px 3.3px,3.3px 3.3px)"></div>
<div style="left:303.9px;top:1030.8px;width:26.2px;height:3.6px;background:#3c3c3c;"></div>
<div style="left:303.9px;top:1062.4px;width:26.2px;height:3.6px;background:#3c3c3c;"></div>
<div style="left:300.3px;top:1034.4px;width:3.6px;height:28px;background:#3c3c3c;"></div>
<div style="left:330.1px;top:1034.4px;width:3.6px;height:28px;background:#3c3c3c;"></div>
<div style="left:303.9px;top:1034.4px;width:26.2px;height:28px;background:#000;"></div>
<svg style="position:absolute;left:307px;top:1038.5px" width="18.9" height="18.9" viewBox="0 0 7 7" preserveAspectRatio="none" shape-rendering="crispEdges"><rect x="0" y="0" width="1" height="1" fill="#c9f1c9"/><rect x="3" y="0" width="1" height="1" fill="#8eae8c"/><rect x="6" y="0" width="1" height="1" fill="#c9f1c9"/><rect x="1" y="1" width="1" height="1" fill="#8eae8c"/><rect x="3" y="1" width="1" height="1" fill="#c9f1c9"/><rect x="5" y="1" width="1" height="1" fill="#8eae8c"/><rect x="2" y="2" width="1" height="1" fill="#8eae8c"/><rect x="3" y="2" width="1" height="1" fill="#c9f1c9"/><rect x="4" y="2" width="1" height="1" fill="#8eae8c"/><rect x="3" y="3" width="1" height="1" fill="#c9f1c9"/><rect x="2" y="4" width="1" height="1" fill="#8eae8c"/><rect x="3" y="4" width="1" height="1" fill="#c9f1c9"/><rect x="4" y="4" width="1" height="1" fill="#8eae8c"/><rect x="1" y="5" width="1" height="1" fill="#8eae8c"/><rect x="3" y="5" width="1" height="1" fill="#c9f1c9"/><rect x="5" y="5" width="1" height="1" fill="#8eae8c"/><rect x="0" y="6" width="1" height="1" fill="#c9f1c9"/><rect x="3" y="6" width="1" height="1" fill="#8eae8c"/><rect x="6" y="6" width="1" height="1" fill="#c9f1c9"/></svg>
<svg style="position:absolute;left:370.5px;top:1072.5px" width="14.5" height="14.5" viewBox="0 0 14.5 14.5" preserveAspectRatio="none" shape-rendering="crispEdges"><path d="M14.5 0 L14.5 14.5 L0 14.5 Z" fill="#8a8a8a"/></svg>
<div style="left:1761.6px;top:129.7px;width:387.2px;height:553.3px;background:#080a0a;"></div>
<div style="left:1765.4px;top:133.3px;width:379.6px;height:50.9px;background:#5b8456;"></div>
<div style="left:1765.4px;top:133.3px;width:379.6px;height:3.8px;background:#89c78b;"></div>
<div style="left:1765.4px;top:133.3px;width:3.8px;height:50.9px;background:#89c78b;"></div>
<div style="left:2141.4px;top:133.3px;width:3.6px;height:50.9px;background:#89c78b;opacity:.75"></div>
<div style="left:1779.5px;top:152.5px;width:8.2px;height:8.2px;background:#0b0b0b;"></div>
<div style="left:1784.01px;top:152.5px;width:3.69px;height:8.2px;background:#2f472d;"></div>
<div style="left:1789.9px;top:152.5px;width:8.2px;height:8.2px;background:#0b0b0b;"></div>
<div style="left:1794.41px;top:152.5px;width:3.69px;height:8.2px;background:#2f472d;"></div>
<div style="left:1800.3px;top:152.5px;width:8.2px;height:8.2px;background:#0b0b0b;"></div>
<div style="left:1804.81px;top:152.5px;width:3.69px;height:8.2px;background:#2f472d;"></div>
<div style="left:1779.5px;top:162.9px;width:8.2px;height:8.2px;background:#0b0b0b;"></div>
<div style="left:1784.01px;top:162.9px;width:3.69px;height:8.2px;background:#2f472d;"></div>
<div style="left:1789.9px;top:162.9px;width:8.2px;height:8.2px;background:#0b0b0b;"></div>
<div style="left:1794.41px;top:162.9px;width:3.69px;height:8.2px;background:#2f472d;"></div>
<div style="left:1800.3px;top:162.9px;width:8.2px;height:8.2px;background:#0b0b0b;"></div>
<div style="left:1804.81px;top:162.9px;width:3.69px;height:8.2px;background:#2f472d;"></div>
<div style="left:1815px;top:150.58px;font:25.35px/25.35px 'Liberation Mono',monospace;color:#0b0b0b;white-space:pre;transform:scaleX(0.8414);transform-origin:0 0;">Preview</div>
<div style="left:1997.8px;top:139.4px;width:42.8px;height:42.6px;background:#141414;clip-path:polygon(3.3px 0px,39.5px 0px,39.5px 3.3px,42.8px 3.3px,42.8px 39.3px,39.5px 39.3px,39.5px 42.6px,3.3px 42.6px,3.3px 39.3px,0px 39.3px,0px 3.3px,3.3px 3.3px)"></div>
<div style="left:2004.7px;top:142.7px;width:29px;height:3.6px;background:#3c3c3c;"></div>
<div style="left:2004.7px;top:172.4px;width:29px;height:3.6px;background:#3c3c3c;"></div>
<div style="left:2001.1px;top:146.3px;width:3.6px;height:26.1px;background:#3c3c3c;"></div>
<div style="left:2033.7px;top:146.3px;width:3.6px;height:26.1px;background:#3c3c3c;"></div>
<div style="left:2004.7px;top:146.3px;width:29px;height:26.1px;background:#000;"></div>
<div style="left:2046.5px;top:139.4px;width:42.8px;height:42.6px;background:#141414;clip-path:polygon(3.3px 0px,39.5px 0px,39.5px 3.3px,42.8px 3.3px,42.8px 39.3px,39.5px 39.3px,39.5px 42.6px,3.3px 42.6px,3.3px 39.3px,0px 39.3px,0px 3.3px,3.3px 3.3px)"></div>
<div style="left:2053.4px;top:142.7px;width:29px;height:3.6px;background:#3c3c3c;"></div>
<div style="left:2053.4px;top:172.4px;width:29px;height:3.6px;background:#3c3c3c;"></div>
<div style="left:2049.8px;top:146.3px;width:3.6px;height:26.1px;background:#3c3c3c;"></div>
<div style="left:2082.4px;top:146.3px;width:3.6px;height:26.1px;background:#3c3c3c;"></div>
<div style="left:2053.4px;top:146.3px;width:29px;height:26.1px;background:#000;"></div>
<div style="left:2096.5px;top:139.4px;width:42.8px;height:42.6px;background:#141414;clip-path:polygon(3.3px 0px,39.5px 0px,39.5px 3.3px,42.8px 3.3px,42.8px 39.3px,39.5px 39.3px,39.5px 42.6px,3.3px 42.6px,3.3px 39.3px,0px 39.3px,0px 3.3px,3.3px 3.3px)"></div>
<div style="left:2103.4px;top:142.7px;width:29px;height:3.6px;background:#3c3c3c;"></div>
<div style="left:2103.4px;top:172.4px;width:29px;height:3.6px;background:#3c3c3c;"></div>
<div style="left:2099.8px;top:146.3px;width:3.6px;height:26.1px;background:#3c3c3c;"></div>
<div style="left:2132.4px;top:146.3px;width:3.6px;height:26.1px;background:#3c3c3c;"></div>
<div style="left:2103.4px;top:146.3px;width:29px;height:26.1px;background:#000;"></div>
<div style="left:2006.1px;top:147.8px;width:25.2px;height:23.8px;overflow:hidden">
<svg style="position:absolute;left:0px;top:0px" width="25.2" height="25.2" viewBox="0 0 7 7" preserveAspectRatio="none" shape-rendering="crispEdges"><rect x="0" y="0" width="1" height="1" fill="#c9f1c9"/><rect x="1" y="0" width="1" height="1" fill="#4b5e4b"/><rect x="3" y="0" width="1" height="1" fill="#c9f1c9"/><rect x="4" y="0" width="1" height="1" fill="#4b5e4b"/><rect x="6" y="0" width="1" height="1" fill="#c9f1c9"/><rect x="0" y="1" width="2" height="1" fill="#4b5e4b"/><rect x="3" y="1" width="2" height="1" fill="#4b5e4b"/><rect x="6" y="1" width="1" height="1" fill="#4b5e4b"/><rect x="0" y="3" width="1" height="1" fill="#c9f1c9"/><rect x="1" y="3" width="1" height="1" fill="#4b5e4b"/><rect x="3" y="3" width="1" height="1" fill="#c9f1c9"/><rect x="4" y="3" width="1" height="1" fill="#4b5e4b"/><rect x="6" y="3" width="1" height="1" fill="#c9f1c9"/><rect x="0" y="4" width="2" height="1" fill="#4b5e4b"/><rect x="3" y="4" width="2" height="1" fill="#4b5e4b"/><rect x="6" y="4" width="1" height="1" fill="#4b5e4b"/><rect x="0" y="6" width="1" height="1" fill="#c9f1c9"/><rect x="1" y="6" width="1" height="1" fill="#4b5e4b"/><rect x="3" y="6" width="1" height="1" fill="#c9f1c9"/><rect x="4" y="6" width="1" height="1" fill="#4b5e4b"/><rect x="6" y="6" width="1" height="1" fill="#c9f1c9"/></svg>
</div>
<svg style="position:absolute;left:2062.8px;top:151.6px" width="10.8" height="18" viewBox="0 0 3 5" preserveAspectRatio="none" shape-rendering="crispEdges"><rect x="0" y="0" width="1" height="1" fill="#c9f1c9"/><rect x="0" y="1" width="2" height="1" fill="#c9f1c9"/><rect x="0" y="2" width="3" height="1" fill="#c9f1c9"/><rect x="0" y="3" width="2" height="1" fill="#c9f1c9"/><rect x="0" y="4" width="1" height="1" fill="#c9f1c9"/></svg>
<svg style="position:absolute;left:2104.8px;top:149.6px" width="25.9" height="22.2" viewBox="0 0 7 6" preserveAspectRatio="none" shape-rendering="crispEdges"><rect x="0" y="0" width="7" height="1" fill="#c9f1c9"/><rect x="0" y="2" width="1" height="1" fill="#c9f1c9"/><rect x="6" y="2" width="1" height="1" fill="#c9f1c9"/><rect x="0" y="4" width="1" height="1" fill="#c9f1c9"/><rect x="6" y="4" width="1" height="1" fill="#c9f1c9"/><rect x="1" y="5" width="1" height="1" fill="#c9f1c9"/><rect x="3" y="5" width="1" height="1" fill="#c9f1c9"/><rect x="5" y="5" width="1" height="1" fill="#c9f1c9"/></svg>
<div style="left:1765.5px;top:184.2px;width:379.5px;height:495.8px;background:#000;"></div>
<div style="left:1764.7px;top:184.2px;width:3.3px;height:488.3px;background:#3d3d3d;"></div>
<div style="left:1775.9px;top:195.4px;width:3.7px;height:466.8px;background:#454545;"></div>
<div style="left:1779.6px;top:195.4px;width:354.4px;height:3.7px;background:#131313;"></div>
<div style="left:1782.9px;top:199.1px;width:344.4px;height:455.5px;background:#3a4c4c;"></div>
<div style="left:1782.9px;top:252.9px;width:344.4px;height:3.7px;background:#111717;"></div>
<div style="left:1782.9px;top:604.2px;width:344.4px;height:3.4px;background:#111717;"></div>
<div style="left:1779.6px;top:654.6px;width:354.4px;height:3.4px;background:#131313;"></div>
<div style="left:1775.9px;top:658px;width:358.1px;height:4.2px;background:#454545;"></div>
<div style="left:2127.3px;top:199.1px;width:3.1px;height:458.9px;background:#111;"></div>
<div style="left:2130.4px;top:199.1px;width:3.6px;height:463.1px;background:#454545;"></div>
<div style="left:1768px;top:669px;width:373px;height:3.5px;background:#3d3d3d;"></div>
<div style="left:2141px;top:184.2px;width:4.1px;height:488.3px;background:#3d3d3d;"></div>
<svg style="position:absolute;left:2127px;top:654.6px" width="14" height="14.4" viewBox="0 0 14 14.4" preserveAspectRatio="none" shape-rendering="crispEdges"><path d="M14 0 L14 14.4 L0 14.4 Z" fill="#8a8a8a"/></svg>
<div style="left:1891px;top:612.5px;width:127.8px;height:32.5px;background:#000;clip-path:polygon(4px 0px,123.8px 0px,123.8px 4px,127.8px 4px,127.8px 28.5px,123.8px 28.5px,123.8px 32.5px,4px 32.5px,4px 28.5px,0px 28.5px,0px 4px,4px 4px)"></div>
<svg style="position:absolute;left:1900px;top:622.8px" width="7.6" height="11.4" viewBox="0 0 2 3" preserveAspectRatio="none" shape-rendering="crispEdges"><rect x="1" y="0" width="1" height="1" fill="#fff"/><rect x="0" y="1" width="1" height="1" fill="#fff"/><rect x="1" y="2" width="1" height="1" fill="#fff"/></svg>
<div style="left:1921.5px;top:618.58px;font:26.26px/26.26px 'Liberation Mono',monospace;color:#fff;white-space:pre;transform:scaleX(0.8123);transform-origin:0 0;">300</div>
<div style="left:1972px;top:618.58px;font:26.26px/26.26px 'Liberation Mono',monospace;color:#fff;white-space:pre;transform:scaleX(0.8123);transform-origin:0 0;">%</div>
<svg style="position:absolute;left:2002.2px;top:622.8px" width="7.6" height="11.4" viewBox="0 0 2 3" preserveAspectRatio="none" shape-rendering="crispEdges"><rect x="0" y="0" width="1" height="1" fill="#fff"/><rect x="1" y="1" width="1" height="1" fill="#fff"/><rect x="0" y="2" width="1" height="1" fill="#fff"/></svg>
<div style="left:667.7px;top:201px;width:822.6px;height:822px;background:#0f1112;"></div>
<svg style="position:absolute;left:671px;top:204.6px" width="816.3" height="815.2" viewBox="0 0 64 64" preserveAspectRatio="none" shape-rendering="crispEdges"><rect width="64" height="64" fill="#c0c0c0"/><rect x="0" y="0" width="8" height="8" fill="#808080"/><rect x="16" y="0" width="8" height="8" fill="#808080"/><rect x="32" y="0" width="8" height="8" fill="#808080"/><rect x="48" y="0" width="8" height="8" fill="#808080"/><rect x="8" y="8" width="8" height="8" fill="#808080"/><rect x="24" y="8" width="8" height="8" fill="#808080"/><rect x="40" y="8" width="8" height="8" fill="#808080"/><rect x="56" y="8" width="8" height="8" fill="#808080"/><rect x="0" y="16" width="8" height="8" fill="#808080"/><rect x="16" y="16" width="8" height="8" fill="#808080"/><rect x="32" y="16" width="8" height="8" fill="#808080"/><rect x="48" y="16" width="8" height="8" fill="#808080"/><rect x="8" y="24" width="8" height="8" fill="#808080"/><rect x="24" y="24" width="8" height="8" fill="#808080"/><rect x="40" y="24" width="8" height="8" fill="#808080"/><rect x="56" y="24" width="8" height="8" fill="#808080"/><rect x="0" y="32" width="8" height="8" fill="#808080"/><rect x="16" y="32" width="8" height="8" fill="#808080"/><rect x="32" y="32" width="8" height="8" fill="#808080"/><rect x="48" y="32" width="8" height="8" fill="#808080"/><rect x="8" y="40" width="8" height="8" fill="#808080"/><rect x="24" y="40" width="8" height="8" fill="#808080"/><rect x="40" y="40" width="8" height="8" fill="#808080"/><rect x="56" y="40" width="8" height="8" fill="#808080"/><rect x="0" y="48" width="8" height="8" fill="#808080"/><rect x="16" y="48" width="8" height="8" fill="#808080"/><rect x="32" y="48" width="8" height="8" fill="#808080"/><rect x="48" y="48" width="8" height="8" fill="#808080"/><rect x="8" y="56" width="8" height="8" fill="#808080"/><rect x="24" y="56" width="8" height="8" fill="#808080"/><rect x="40" y="56" width="8" height="8" fill="#808080"/><rect x="56" y="56" width="8" height="8" fill="#808080"/><rect x="18" y="18" width="2" height="1" fill="#000000"/><rect x="17" y="19" width="1" height="1" fill="#000000"/><rect x="18" y="19" width="2" height="1" fill="#621c90"/><rect x="20" y="19" width="1" height="1" fill="#000000"/><rect x="16" y="20" width="1" height="1" fill="#000000"/><rect x="17" y="20" width="1" height="1" fill="#621c90"/><rect x="18" y="20" width="2" height="1" fill="#62c08a"/><rect x="20" y="20" width="1" height="1" fill="#621c90"/><rect x="21" y="20" width="1" height="1" fill="#000000"/><rect x="36" y="20" width="1" height="1" fill="#000000"/><rect x="16" y="21" width="1" height="1" fill="#000000"/><rect x="17" y="21" width="2" height="1" fill="#62c08a"/><rect x="19" y="21" width="1" height="1" fill="#7ed7a6"/><rect x="20" y="21" width="1" height="1" fill="#62c08a"/><rect x="21" y="21" width="1" height="1" fill="#000000"/><rect x="34" y="21" width="2" height="1" fill="#000000"/><rect x="36" y="21" width="1" height="1" fill="#62c08a"/><rect x="37" y="21" width="1" height="1" fill="#000000"/><rect x="15" y="22" width="1" height="1" fill="#000000"/><rect x="16" y="22" width="2" height="1" fill="#62c08a"/><rect x="18" y="22" width="2" height="1" fill="#7ed7a6"/><rect x="20" y="22" width="2" height="1" fill="#62c08a"/><rect x="22" y="22" width="1" height="1" fill="#000000"/><rect x="32" y="22" width="2" height="1" fill="#000000"/><rect x="34" y="22" width="1" height="1" fill="#9b37bd"/><rect x="35" y="22" width="1" height="1" fill="#621c90"/><rect x="36" y="22" width="1" height="1" fill="#000000"/><rect x="15" y="23" width="1" height="1" fill="#000000"/><rect x="16" y="23" width="1" height="1" fill="#62c08a"/><rect x="17" y="23" width="3" height="1" fill="#7ed7a6"/><rect x="20" y="23" width="2" height="1" fill="#62c08a"/><rect x="22" y="23" width="1" height="1" fill="#000000"/><rect x="31" y="23" width="1" height="1" fill="#000000"/><rect x="32" y="23" width="2" height="1" fill="#9b37bd"/><rect x="34" y="23" width="1" height="1" fill="#621c90"/><rect x="35" y="23" width="1" height="1" fill="#000000"/><rect x="15" y="24" width="1" height="1" fill="#000000"/><rect x="16" y="24" width="1" height="1" fill="#62c08a"/><rect x="17" y="24" width="4" height="1" fill="#7ed7a6"/><rect x="21" y="24" width="1" height="1" fill="#62c08a"/><rect x="22" y="24" width="1" height="1" fill="#000000"/><rect x="25" y="24" width="6" height="1" fill="#000000"/><rect x="31" y="24" width="1" height="1" fill="#9b37bd"/><rect x="32" y="24" width="3" height="1" fill="#621c90"/><rect x="35" y="24" width="1" height="1" fill="#000000"/><rect x="15" y="25" width="1" height="1" fill="#000000"/><rect x="16" y="25" width="2" height="1" fill="#62c08a"/><rect x="18" y="25" width="2" height="1" fill="#7ed7a6"/><rect x="20" y="25" width="2" height="1" fill="#62c08a"/><rect x="22" y="25" width="3" height="1" fill="#000000"/><rect x="25" y="25" width="4" height="1" fill="#621c90"/><rect x="29" y="25" width="1" height="1" fill="#000000"/><rect x="30" y="25" width="1" height="1" fill="#9b37bd"/><rect x="31" y="25" width="3" height="1" fill="#621c90"/><rect x="34" y="25" width="6" height="1" fill="#000000"/><rect x="15" y="26" width="1" height="1" fill="#000000"/><rect x="16" y="26" width="1" height="1" fill="#621c90"/><rect x="17" y="26" width="4" height="1" fill="#62c08a"/><rect x="21" y="26" width="1" height="1" fill="#621c90"/><rect x="22" y="26" width="1" height="1" fill="#000000"/><rect x="23" y="26" width="5" height="1" fill="#621c90"/><rect x="28" y="26" width="1" height="1" fill="#591a87"/><rect x="29" y="26" width="1" height="1" fill="#000000"/><rect x="30" y="26" width="4" height="1" fill="#621c90"/><rect x="34" y="26" width="1" height="1" fill="#000000"/><rect x="35" y="26" width="1" height="1" fill="#4c1579"/><rect x="36" y="26" width="4" height="1" fill="#621c90"/><rect x="40" y="26" width="2" height="1" fill="#000000"/><rect x="16" y="27" width="1" height="1" fill="#000000"/><rect x="17" y="27" width="1" height="1" fill="#621c90"/><rect x="18" y="27" width="2" height="1" fill="#62c08a"/><rect x="20" y="27" width="1" height="1" fill="#621c90"/><rect x="21" y="27" width="1" height="1" fill="#000000"/><rect x="22" y="27" width="4" height="1" fill="#621c90"/><rect x="26" y="27" width="2" height="1" fill="#591a87"/><rect x="28" y="27" width="1" height="1" fill="#000000"/><rect x="29" y="27" width="6" height="1" fill="#621c90"/><rect x="35" y="27" width="1" height="1" fill="#000000"/><rect x="36" y="27" width="1" height="1" fill="#591a87"/><rect x="37" y="27" width="5" height="1" fill="#621c90"/><rect x="42" y="27" width="2" height="1" fill="#000000"/><rect x="16" y="28" width="1" height="1" fill="#000000"/><rect x="17" y="28" width="4" height="1" fill="#621c90"/><rect x="21" y="28" width="1" height="1" fill="#000000"/><rect x="22" y="28" width="4" height="1" fill="#621c90"/><rect x="26" y="28" width="1" height="1" fill="#591a87"/><rect x="27" y="28" width="1" height="1" fill="#4c1579"/><rect x="28" y="28" width="1" height="1" fill="#000000"/><rect x="29" y="28" width="6" height="1" fill="#621c90"/><rect x="35" y="28" width="1" height="1" fill="#000000"/><rect x="36" y="28" width="1" height="1" fill="#4c1579"/><rect x="37" y="28" width="7" height="1" fill="#621c90"/><rect x="44" y="28" width="1" height="1" fill="#000000"/><rect x="17" y="29" width="1" height="1" fill="#000000"/><rect x="18" y="29" width="2" height="1" fill="#621c90"/><rect x="20" y="29" width="2" height="1" fill="#000000"/><rect x="22" y="29" width="4" height="1" fill="#621c90"/><rect x="26" y="29" width="3" height="1" fill="#4c1579"/><rect x="29" y="29" width="6" height="1" fill="#000000"/><rect x="35" y="29" width="2" height="1" fill="#4c1579"/><rect x="37" y="29" width="7" height="1" fill="#621c90"/><rect x="44" y="29" width="1" height="1" fill="#000000"/><rect x="18" y="30" width="1" height="1" fill="#000000"/><rect x="19" y="30" width="1" height="1" fill="#4d6529"/><rect x="22" y="30" width="7" height="1" fill="#000000"/><rect x="29" y="30" width="5" height="1" fill="#4c1579"/><rect x="34" y="30" width="2" height="1" fill="#591a87"/><rect x="36" y="30" width="7" height="1" fill="#621c90"/><rect x="43" y="30" width="1" height="1" fill="#000000"/><rect x="18" y="31" width="1" height="1" fill="#4d6529"/><rect x="19" y="31" width="1" height="1" fill="#000000"/><rect x="27" y="31" width="1" height="1" fill="#000000"/><rect x="28" y="31" width="1" height="1" fill="#d6aa92"/><rect x="29" y="31" width="5" height="1" fill="#000000"/><rect x="34" y="31" width="7" height="1" fill="#621c90"/><rect x="41" y="31" width="2" height="1" fill="#000000"/><rect x="18" y="32" width="2" height="1" fill="#000000"/><rect x="27" y="32" width="1" height="1" fill="#000000"/><rect x="28" y="32" width="2" height="1" fill="#d6aa92"/><rect x="30" y="32" width="1" height="1" fill="#3f8a6b"/><rect x="31" y="32" width="2" height="1" fill="#d6aa92"/><rect x="33" y="32" width="1" height="1" fill="#3f8a6b"/><rect x="34" y="32" width="7" height="1" fill="#000000"/><rect x="18" y="33" width="2" height="1" fill="#000000"/><rect x="27" y="33" width="1" height="1" fill="#000000"/><rect x="28" y="33" width="2" height="1" fill="#d6aa92"/><rect x="30" y="33" width="1" height="1" fill="#3f8a6b"/><rect x="31" y="33" width="2" height="1" fill="#d6aa92"/><rect x="33" y="33" width="1" height="1" fill="#3f8a6b"/><rect x="34" y="33" width="2" height="1" fill="#d6aa92"/><rect x="36" y="33" width="1" height="1" fill="#000000"/><rect x="18" y="34" width="1" height="1" fill="#000000"/><rect x="19" y="34" width="1" height="1" fill="#4d6529"/><rect x="28" y="34" width="1" height="1" fill="#000000"/><rect x="29" y="34" width="6" height="1" fill="#d6aa92"/><rect x="35" y="34" width="1" height="1" fill="#000000"/><rect x="18" y="35" width="1" height="1" fill="#4d6529"/><rect x="19" y="35" width="1" height="1" fill="#000000"/><rect x="29" y="35" width="1" height="1" fill="#000000"/><rect x="30" y="35" width="4" height="1" fill="#d6aa92"/><rect x="34" y="35" width="1" height="1" fill="#000000"/><rect x="18" y="36" width="2" height="1" fill="#000000"/><rect x="30" y="36" width="4" height="1" fill="#000000"/><rect x="18" y="37" width="2" height="1" fill="#000000"/><rect x="26" y="37" width="5" height="1" fill="#263116"/><rect x="31" y="37" width="2" height="1" fill="#e4c886"/><rect x="33" y="37" width="5" height="1" fill="#263116"/><rect x="18" y="38" width="1" height="1" fill="#000000"/><rect x="19" y="38" width="1" height="1" fill="#4d6529"/><rect x="25" y="38" width="1" height="1" fill="#263116"/><rect x="26" y="38" width="1" height="1" fill="#000000"/><rect x="27" y="38" width="1" height="1" fill="#5d7377"/><rect x="28" y="38" width="2" height="1" fill="#263116"/><rect x="30" y="38" width="1" height="1" fill="#e4c886"/><rect x="31" y="38" width="2" height="1" fill="#62c08a"/><rect x="33" y="38" width="1" height="1" fill="#e4c886"/><rect x="34" y="38" width="2" height="1" fill="#263116"/><rect x="36" y="38" width="1" height="1" fill="#5d7377"/><rect x="37" y="38" width="1" height="1" fill="#000000"/><rect x="38" y="38" width="1" height="1" fill="#263116"/><rect x="18" y="39" width="1" height="1" fill="#4d6529"/><rect x="19" y="39" width="1" height="1" fill="#000000"/><rect x="24" y="39" width="2" height="1" fill="#000000"/><rect x="26" y="39" width="3" height="1" fill="#5d7377"/><rect x="29" y="39" width="1" height="1" fill="#263116"/><rect x="30" y="39" width="1" height="1" fill="#dcb976"/><rect x="31" y="39" width="1" height="1" fill="#62c08a"/><rect x="32" y="39" width="1" height="1" fill="#58b07f"/><rect x="33" y="39" width="1" height="1" fill="#dcb976"/><rect x="34" y="39" width="1" height="1" fill="#263116"/><rect x="35" y="39" width="3" height="1" fill="#5d7377"/><rect x="38" y="39" width="2" height="1" fill="#000000"/><rect x="18" y="40" width="2" height="1" fill="#000000"/><rect x="23" y="40" width="1" height="1" fill="#000000"/><rect x="24" y="40" width="3" height="1" fill="#5d7377"/><rect x="27" y="40" width="2" height="1" fill="#657b76"/><rect x="29" y="40" width="1" height="1" fill="#5d7377"/><rect x="30" y="40" width="1" height="1" fill="#263116"/><rect x="31" y="40" width="2" height="1" fill="#dcb976"/><rect x="33" y="40" width="1" height="1" fill="#263116"/><rect x="34" y="40" width="1" height="1" fill="#5d7377"/><rect x="35" y="40" width="2" height="1" fill="#657b76"/><rect x="37" y="40" width="3" height="1" fill="#5d7377"/><rect x="40" y="40" width="1" height="1" fill="#000000"/><rect x="18" y="41" width="2" height="1" fill="#000000"/><rect x="23" y="41" width="1" height="1" fill="#000000"/><rect x="24" y="41" width="1" height="1" fill="#5d7377"/><rect x="25" y="41" width="5" height="1" fill="#657b76"/><rect x="30" y="41" width="4" height="1" fill="#5d7377"/><rect x="34" y="41" width="5" height="1" fill="#657b76"/><rect x="39" y="41" width="1" height="1" fill="#5d7377"/><rect x="40" y="41" width="1" height="1" fill="#000000"/><rect x="18" y="42" width="1" height="1" fill="#000000"/><rect x="19" y="42" width="1" height="1" fill="#4d6529"/><rect x="22" y="42" width="1" height="1" fill="#dcb976"/><rect x="23" y="42" width="1" height="1" fill="#ebe9de"/><rect x="24" y="42" width="1" height="1" fill="#5d7377"/><rect x="25" y="42" width="15" height="1" fill="#657b76"/><rect x="40" y="42" width="1" height="1" fill="#5d7377"/><rect x="41" y="42" width="1" height="1" fill="#000000"/><rect x="18" y="43" width="1" height="1" fill="#4d6529"/><rect x="19" y="43" width="1" height="1" fill="#000000"/><rect x="22" y="43" width="1" height="1" fill="#dcb976"/><rect x="23" y="43" width="1" height="1" fill="#ebe9de"/><rect x="24" y="43" width="16" height="1" fill="#657b76"/><rect x="40" y="43" width="1" height="1" fill="#5d7377"/><rect x="41" y="43" width="1" height="1" fill="#000000"/><rect x="42" y="43" width="1" height="1" fill="#263116"/><rect x="18" y="44" width="2" height="1" fill="#000000"/><rect x="21" y="44" width="1" height="1" fill="#ebe9de"/><rect x="22" y="44" width="1" height="1" fill="#dcb976"/><rect x="23" y="44" width="2" height="1" fill="#ebe9de"/><rect x="25" y="44" width="16" height="1" fill="#657b76"/><rect x="41" y="44" width="1" height="1" fill="#000000"/><rect x="42" y="44" width="1" height="1" fill="#263116"/><rect x="18" y="45" width="2" height="1" fill="#000000"/><rect x="20" y="45" width="2" height="1" fill="#d6aa92"/><rect x="22" y="45" width="1" height="1" fill="#ebe9de"/><rect x="23" y="45" width="1" height="1" fill="#dcb976"/><rect x="24" y="45" width="1" height="1" fill="#263116"/><rect x="25" y="45" width="1" height="1" fill="#000000"/><rect x="26" y="45" width="15" height="1" fill="#657b76"/><rect x="41" y="45" width="1" height="1" fill="#000000"/><rect x="42" y="45" width="1" height="1" fill="#263116"/><rect x="18" y="46" width="1" height="1" fill="#000000"/><rect x="19" y="46" width="1" height="1" fill="#4d6529"/><rect x="20" y="46" width="2" height="1" fill="#d6aa92"/><rect x="22" y="46" width="1" height="1" fill="#ebe9de"/><rect x="23" y="46" width="2" height="1" fill="#263116"/><rect x="25" y="46" width="1" height="1" fill="#000000"/><rect x="26" y="46" width="12" height="1" fill="#657b76"/><rect x="38" y="46" width="1" height="1" fill="#000000"/><rect x="39" y="46" width="1" height="1" fill="#ebe9de"/><rect x="40" y="46" width="1" height="1" fill="#5d7377"/><rect x="41" y="46" width="1" height="1" fill="#ebe9de"/><rect x="42" y="46" width="1" height="1" fill="#263116"/><rect x="18" y="47" width="1" height="1" fill="#4d6529"/><rect x="19" y="47" width="1" height="1" fill="#000000"/><rect x="20" y="47" width="2" height="1" fill="#d6aa92"/><rect x="22" y="47" width="3" height="1" fill="#263116"/><rect x="25" y="47" width="1" height="1" fill="#000000"/><rect x="26" y="47" width="12" height="1" fill="#657b76"/><rect x="38" y="47" width="1" height="1" fill="#000000"/><rect x="39" y="47" width="1" height="1" fill="#dcb976"/><rect x="40" y="47" width="1" height="1" fill="#ebe9de"/><rect x="41" y="47" width="1" height="1" fill="#dcb976"/><rect x="42" y="47" width="1" height="1" fill="#263116"/><rect x="18" y="48" width="2" height="1" fill="#000000"/><rect x="20" y="48" width="1" height="1" fill="#d6aa92"/><rect x="21" y="48" width="4" height="1" fill="#263116"/><rect x="25" y="48" width="1" height="1" fill="#000000"/><rect x="26" y="48" width="12" height="1" fill="#657b76"/><rect x="38" y="48" width="1" height="1" fill="#000000"/><rect x="39" y="48" width="1" height="1" fill="#ebe9de"/><rect x="40" y="48" width="1" height="1" fill="#dcb976"/><rect x="41" y="48" width="1" height="1" fill="#ebe9de"/><rect x="42" y="48" width="1" height="1" fill="#263116"/><rect x="18" y="49" width="2" height="1" fill="#000000"/><rect x="21" y="49" width="4" height="1" fill="#263116"/><rect x="25" y="49" width="1" height="1" fill="#000000"/><rect x="26" y="49" width="12" height="1" fill="#657b76"/><rect x="38" y="49" width="1" height="1" fill="#000000"/><rect x="39" y="49" width="3" height="1" fill="#ebe9de"/><rect x="42" y="49" width="1" height="1" fill="#263116"/><rect x="18" y="50" width="1" height="1" fill="#000000"/><rect x="19" y="50" width="1" height="1" fill="#4d6529"/><rect x="21" y="50" width="4" height="1" fill="#263116"/><rect x="25" y="50" width="1" height="1" fill="#000000"/><rect x="26" y="50" width="12" height="1" fill="#657b76"/><rect x="38" y="50" width="1" height="1" fill="#000000"/><rect x="39" y="50" width="3" height="1" fill="#d6aa92"/><rect x="42" y="50" width="1" height="1" fill="#263116"/><rect x="18" y="51" width="1" height="1" fill="#4d6529"/><rect x="19" y="51" width="1" height="1" fill="#000000"/><rect x="21" y="51" width="4" height="1" fill="#263116"/><rect x="25" y="51" width="1" height="1" fill="#000000"/><rect x="26" y="51" width="6" height="1" fill="#621c90"/><rect x="32" y="51" width="1" height="1" fill="#dcb976"/><rect x="33" y="51" width="5" height="1" fill="#657b76"/><rect x="38" y="51" width="1" height="1" fill="#000000"/><rect x="39" y="51" width="3" height="1" fill="#d6aa92"/><rect x="42" y="51" width="1" height="1" fill="#263116"/><rect x="18" y="52" width="2" height="1" fill="#000000"/><rect x="21" y="52" width="4" height="1" fill="#263116"/><rect x="25" y="52" width="1" height="1" fill="#000000"/><rect x="26" y="52" width="1" height="1" fill="#621c90"/><rect x="27" y="52" width="3" height="1" fill="#4c1579"/><rect x="30" y="52" width="8" height="1" fill="#621c90"/><rect x="38" y="52" width="1" height="1" fill="#000000"/><rect x="39" y="52" width="4" height="1" fill="#263116"/><rect x="18" y="53" width="2" height="1" fill="#000000"/><rect x="21" y="53" width="4" height="1" fill="#263116"/><rect x="25" y="53" width="1" height="1" fill="#000000"/><rect x="26" y="53" width="5" height="1" fill="#5d7377"/><rect x="31" y="53" width="1" height="1" fill="#dcb976"/><rect x="32" y="53" width="1" height="1" fill="#621c90"/><rect x="33" y="53" width="2" height="1" fill="#4c1579"/><rect x="35" y="53" width="2" height="1" fill="#621c90"/><rect x="37" y="53" width="1" height="1" fill="#4c1579"/><rect x="38" y="53" width="1" height="1" fill="#000000"/><rect x="39" y="53" width="4" height="1" fill="#263116"/><rect x="18" y="54" width="1" height="1" fill="#000000"/><rect x="19" y="54" width="1" height="1" fill="#4d6529"/><rect x="21" y="54" width="4" height="1" fill="#263116"/><rect x="25" y="54" width="1" height="1" fill="#000000"/><rect x="26" y="54" width="1" height="1" fill="#dcb976"/><rect x="27" y="54" width="4" height="1" fill="#5d7377"/><rect x="31" y="54" width="2" height="1" fill="#dcb976"/><rect x="33" y="54" width="4" height="1" fill="#5d7377"/><rect x="37" y="54" width="1" height="1" fill="#dcb976"/><rect x="38" y="54" width="1" height="1" fill="#000000"/><rect x="39" y="54" width="4" height="1" fill="#263116"/><rect x="18" y="55" width="1" height="1" fill="#4d6529"/><rect x="19" y="55" width="1" height="1" fill="#000000"/><rect x="22" y="55" width="3" height="1" fill="#263116"/><rect x="25" y="55" width="1" height="1" fill="#000000"/><rect x="26" y="55" width="1" height="1" fill="#765a30"/><rect x="27" y="55" width="2" height="1" fill="#dcb976"/><rect x="29" y="55" width="2" height="1" fill="#5d7377"/><rect x="31" y="55" width="2" height="1" fill="#dcb976"/><rect x="33" y="55" width="2" height="1" fill="#5d7377"/><rect x="35" y="55" width="2" height="1" fill="#dcb976"/><rect x="37" y="55" width="1" height="1" fill="#765a30"/><rect x="38" y="55" width="1" height="1" fill="#000000"/><rect x="39" y="55" width="3" height="1" fill="#263116"/><rect x="18" y="56" width="2" height="1" fill="#000000"/><rect x="23" y="56" width="2" height="1" fill="#263116"/><rect x="25" y="56" width="1" height="1" fill="#000000"/><rect x="26" y="56" width="3" height="1" fill="#765a30"/><rect x="29" y="56" width="6" height="1" fill="#dcb976"/><rect x="35" y="56" width="3" height="1" fill="#765a30"/><rect x="38" y="56" width="1" height="1" fill="#000000"/><rect x="39" y="56" width="2" height="1" fill="#263116"/><rect x="18" y="57" width="2" height="1" fill="#000000"/><rect x="23" y="57" width="2" height="1" fill="#263116"/><rect x="25" y="57" width="1" height="1" fill="#000000"/><rect x="26" y="57" width="5" height="1" fill="#765a30"/><rect x="31" y="57" width="2" height="1" fill="#dcb976"/><rect x="33" y="57" width="5" height="1" fill="#765a30"/><rect x="38" y="57" width="1" height="1" fill="#000000"/><rect x="39" y="57" width="2" height="1" fill="#263116"/><rect x="18" y="58" width="1" height="1" fill="#000000"/><rect x="19" y="58" width="1" height="1" fill="#4d6529"/><rect x="24" y="58" width="1" height="1" fill="#263116"/><rect x="25" y="58" width="1" height="1" fill="#000000"/><rect x="26" y="58" width="4" height="1" fill="#765a30"/><rect x="30" y="58" width="1" height="1" fill="#000000"/><rect x="33" y="58" width="1" height="1" fill="#000000"/><rect x="34" y="58" width="4" height="1" fill="#765a30"/><rect x="38" y="58" width="1" height="1" fill="#000000"/><rect x="39" y="58" width="1" height="1" fill="#263116"/><rect x="18" y="59" width="1" height="1" fill="#4d6529"/><rect x="19" y="59" width="1" height="1" fill="#000000"/><rect x="26" y="59" width="1" height="1" fill="#000000"/><rect x="27" y="59" width="3" height="1" fill="#765a30"/><rect x="30" y="59" width="1" height="1" fill="#000000"/><rect x="33" y="59" width="1" height="1" fill="#000000"/><rect x="34" y="59" width="3" height="1" fill="#765a30"/><rect x="37" y="59" width="1" height="1" fill="#000000"/><rect x="18" y="60" width="2" height="1" fill="#000000"/><rect x="27" y="60" width="3" height="1" fill="#000000"/><rect x="34" y="60" width="3" height="1" fill="#000000"/><rect x="18" y="61" width="2" height="1" fill="#000000"/><rect x="27" y="61" width="2" height="1" fill="#000000"/><rect x="35" y="61" width="2" height="1" fill="#000000"/><rect x="18" y="62" width="1" height="1" fill="#000000"/><rect x="19" y="62" width="1" height="1" fill="#4d6529"/><rect x="25" y="62" width="5" height="1" fill="#000000"/><rect x="34" y="62" width="5" height="1" fill="#000000"/><rect x="18" y="63" width="1" height="1" fill="#4d6529"/><rect x="19" y="63" width="1" height="1" fill="#000000"/><rect x="24" y="63" width="6" height="1" fill="#000000"/><rect x="34" y="63" width="6" height="1" fill="#000000"/></svg>
<div style="left:1785px;top:256.6px;width:342.2px;height:347.6px;overflow:hidden">
<svg style="position:absolute;left:0px;top:0px" width="347.6" height="347.6" viewBox="0 0 64 64" preserveAspectRatio="none" shape-rendering="crispEdges"><rect width="64" height="64" fill="#c0c0c0"/><rect x="0" y="0" width="8" height="8" fill="#808080"/><rect x="16" y="0" width="8" height="8" fill="#808080"/><rect x="32" y="0" width="8" height="8" fill="#808080"/><rect x="48" y="0" width="8" height="8" fill="#808080"/><rect x="8" y="8" width="8" height="8" fill="#808080"/><rect x="24" y="8" width="8" height="8" fill="#808080"/><rect x="40" y="8" width="8" height="8" fill="#808080"/><rect x="56" y="8" width="8" height="8" fill="#808080"/><rect x="0" y="16" width="8" height="8" fill="#808080"/><rect x="16" y="16" width="8" height="8" fill="#808080"/><rect x="32" y="16" width="8" height="8" fill="#808080"/><rect x="48" y="16" width="8" height="8" fill="#808080"/><rect x="8" y="24" width="8" height="8" fill="#808080"/><rect x="24" y="24" width="8" height="8" fill="#808080"/><rect x="40" y="24" width="8" height="8" fill="#808080"/><rect x="56" y="24" width="8" height="8" fill="#808080"/><rect x="0" y="32" width="8" height="8" fill="#808080"/><rect x="16" y="32" width="8" height="8" fill="#808080"/><rect x="32" y="32" width="8" height="8" fill="#808080"/><rect x="48" y="32" width="8" height="8" fill="#808080"/><rect x="8" y="40" width="8" height="8" fill="#808080"/><rect x="24" y="40" width="8" height="8" fill="#808080"/><rect x="40" y="40" width="8" height="8" fill="#808080"/><rect x="56" y="40" width="8" height="8" fill="#808080"/><rect x="0" y="48" width="8" height="8" fill="#808080"/><rect x="16" y="48" width="8" height="8" fill="#808080"/><rect x="32" y="48" width="8" height="8" fill="#808080"/><rect x="48" y="48" width="8" height="8" fill="#808080"/><rect x="8" y="56" width="8" height="8" fill="#808080"/><rect x="24" y="56" width="8" height="8" fill="#808080"/><rect x="40" y="56" width="8" height="8" fill="#808080"/><rect x="56" y="56" width="8" height="8" fill="#808080"/><rect x="18" y="18" width="2" height="1" fill="#000000"/><rect x="17" y="19" width="1" height="1" fill="#000000"/><rect x="18" y="19" width="2" height="1" fill="#621c90"/><rect x="20" y="19" width="1" height="1" fill="#000000"/><rect x="16" y="20" width="1" height="1" fill="#000000"/><rect x="17" y="20" width="1" height="1" fill="#621c90"/><rect x="18" y="20" width="2" height="1" fill="#62c08a"/><rect x="20" y="20" width="1" height="1" fill="#621c90"/><rect x="21" y="20" width="1" height="1" fill="#000000"/><rect x="36" y="20" width="1" height="1" fill="#000000"/><rect x="16" y="21" width="1" height="1" fill="#000000"/><rect x="17" y="21" width="2" height="1" fill="#62c08a"/><rect x="19" y="21" width="1" height="1" fill="#7ed7a6"/><rect x="20" y="21" width="1" height="1" fill="#62c08a"/><rect x="21" y="21" width="1" height="1" fill="#000000"/><rect x="34" y="21" width="2" height="1" fill="#000000"/><rect x="36" y="21" width="1" height="1" fill="#62c08a"/><rect x="37" y="21" width="1" height="1" fill="#000000"/><rect x="15" y="22" width="1" height="1" fill="#000000"/><rect x="16" y="22" width="2" height="1" fill="#62c08a"/><rect x="18" y="22" width="2" height="1" fill="#7ed7a6"/><rect x="20" y="22" width="2" height="1" fill="#62c08a"/><rect x="22" y="22" width="1" height="1" fill="#000000"/><rect x="32" y="22" width="2" height="1" fill="#000000"/><rect x="34" y="22" width="1" height="1" fill="#9b37bd"/><rect x="35" y="22" width="1" height="1" fill="#621c90"/><rect x="36" y="22" width="1" height="1" fill="#000000"/><rect x="15" y="23" width="1" height="1" fill="#000000"/><rect x="16" y="23" width="1" height="1" fill="#62c08a"/><rect x="17" y="23" width="3" height="1" fill="#7ed7a6"/><rect x="20" y="23" width="2" height="1" fill="#62c08a"/><rect x="22" y="23" width="1" height="1" fill="#000000"/><rect x="31" y="23" width="1" height="1" fill="#000000"/><rect x="32" y="23" width="2" height="1" fill="#9b37bd"/><rect x="34" y="23" width="1" height="1" fill="#621c90"/><rect x="35" y="23" width="1" height="1" fill="#000000"/><rect x="15" y="24" width="1" height="1" fill="#000000"/><rect x="16" y="24" width="1" height="1" fill="#62c08a"/><rect x="17" y="24" width="4" height="1" fill="#7ed7a6"/><rect x="21" y="24" width="1" height="1" fill="#62c08a"/><rect x="22" y="24" width="1" height="1" fill="#000000"/><rect x="25" y="24" width="6" height="1" fill="#000000"/><rect x="31" y="24" width="1" height="1" fill="#9b37bd"/><rect x="32" y="24" width="3" height="1" fill="#621c90"/><rect x="35" y="24" width="1" height="1" fill="#000000"/><rect x="15" y="25" width="1" height="1" fill="#000000"/><rect x="16" y="25" width="2" height="1" fill="#62c08a"/><rect x="18" y="25" width="2" height="1" fill="#7ed7a6"/><rect x="20" y="25" width="2" height="1" fill="#62c08a"/><rect x="22" y="25" width="3" height="1" fill="#000000"/><rect x="25" y="25" width="4" height="1" fill="#621c90"/><rect x="29" y="25" width="1" height="1" fill="#000000"/><rect x="30" y="25" width="1" height="1" fill="#9b37bd"/><rect x="31" y="25" width="3" height="1" fill="#621c90"/><rect x="34" y="25" width="6" height="1" fill="#000000"/><rect x="15" y="26" width="1" height="1" fill="#000000"/><rect x="16" y="26" width="1" height="1" fill="#621c90"/><rect x="17" y="26" width="4" height="1" fill="#62c08a"/><rect x="21" y="26" width="1" height="1" fill="#621c90"/><rect x="22" y="26" width="1" height="1" fill="#000000"/><rect x="23" y="26" width="5" height="1" fill="#621c90"/><rect x="28" y="26" width="1" height="1" fill="#591a87"/><rect x="29" y="26" width="1" height="1" fill="#000000"/><rect x="30" y="26" width="4" height="1" fill="#621c90"/><rect x="34" y="26" width="1" height="1" fill="#000000"/><rect x="35" y="26" width="1" height="1" fill="#4c1579"/><rect x="36" y="26" width="4" height="1" fill="#621c90"/><rect x="40" y="26" width="2" height="1" fill="#000000"/><rect x="16" y="27" width="1" height="1" fill="#000000"/><rect x="17" y="27" width="1" height="1" fill="#621c90"/><rect x="18" y="27" width="2" height="1" fill="#62c08a"/><rect x="20" y="27" width="1" height="1" fill="#621c90"/><rect x="21" y="27" width="1" height="1" fill="#000000"/><rect x="22" y="27" width="4" height="1" fill="#621c90"/><rect x="26" y="27" width="2" height="1" fill="#591a87"/><rect x="28" y="27" width="1" height="1" fill="#000000"/><rect x="29" y="27" width="6" height="1" fill="#621c90"/><rect x="35" y="27" width="1" height="1" fill="#000000"/><rect x="36" y="27" width="1" height="1" fill="#591a87"/><rect x="37" y="27" width="5" height="1" fill="#621c90"/><rect x="42" y="27" width="2" height="1" fill="#000000"/><rect x="16" y="28" width="1" height="1" fill="#000000"/><rect x="17" y="28" width="4" height="1" fill="#621c90"/><rect x="21" y="28" width="1" height="1" fill="#000000"/><rect x="22" y="28" width="4" height="1" fill="#621c90"/><rect x="26" y="28" width="1" height="1" fill="#591a87"/><rect x="27" y="28" width="1" height="1" fill="#4c1579"/><rect x="28" y="28" width="1" height="1" fill="#000000"/><rect x="29" y="28" width="6" height="1" fill="#621c90"/><rect x="35" y="28" width="1" height="1" fill="#000000"/><rect x="36" y="28" width="1" height="1" fill="#4c1579"/><rect x="37" y="28" width="7" height="1" fill="#621c90"/><rect x="44" y="28" width="1" height="1" fill="#000000"/><rect x="17" y="29" width="1" height="1" fill="#000000"/><rect x="18" y="29" width="2" height="1" fill="#621c90"/><rect x="20" y="29" width="2" height="1" fill="#000000"/><rect x="22" y="29" width="4" height="1" fill="#621c90"/><rect x="26" y="29" width="3" height="1" fill="#4c1579"/><rect x="29" y="29" width="6" height="1" fill="#000000"/><rect x="35" y="29" width="2" height="1" fill="#4c1579"/><rect x="37" y="29" width="7" height="1" fill="#621c90"/><rect x="44" y="29" width="1" height="1" fill="#000000"/><rect x="18" y="30" width="1" height="1" fill="#000000"/><rect x="19" y="30" width="1" height="1" fill="#4d6529"/><rect x="22" y="30" width="7" height="1" fill="#000000"/><rect x="29" y="30" width="5" height="1" fill="#4c1579"/><rect x="34" y="30" width="2" height="1" fill="#591a87"/><rect x="36" y="30" width="7" height="1" fill="#621c90"/><rect x="43" y="30" width="1" height="1" fill="#000000"/><rect x="18" y="31" width="1" height="1" fill="#4d6529"/><rect x="19" y="31" width="1" height="1" fill="#000000"/><rect x="27" y="31" width="1" height="1" fill="#000000"/><rect x="28" y="31" width="1" height="1" fill="#d6aa92"/><rect x="29" y="31" width="5" height="1" fill="#000000"/><rect x="34" y="31" width="7" height="1" fill="#621c90"/><rect x="41" y="31" width="2" height="1" fill="#000000"/><rect x="18" y="32" width="2" height="1" fill="#000000"/><rect x="27" y="32" width="1" height="1" fill="#000000"/><rect x="28" y="32" width="2" height="1" fill="#d6aa92"/><rect x="30" y="32" width="1" height="1" fill="#3f8a6b"/><rect x="31" y="32" width="2" height="1" fill="#d6aa92"/><rect x="33" y="32" width="1" height="1" fill="#3f8a6b"/><rect x="34" y="32" width="7" height="1" fill="#000000"/><rect x="18" y="33" width="2" height="1" fill="#000000"/><rect x="27" y="33" width="1" height="1" fill="#000000"/><rect x="28" y="33" width="2" height="1" fill="#d6aa92"/><rect x="30" y="33" width="1" height="1" fill="#3f8a6b"/><rect x="31" y="33" width="2" height="1" fill="#d6aa92"/><rect x="33" y="33" width="1" height="1" fill="#3f8a6b"/><rect x="34" y="33" width="2" height="1" fill="#d6aa92"/><rect x="36" y="33" width="1" height="1" fill="#000000"/><rect x="18" y="34" width="1" height="1" fill="#000000"/><rect x="19" y="34" width="1" height="1" fill="#4d6529"/><rect x="28" y="34" width="1" height="1" fill="#000000"/><rect x="29" y="34" width="6" height="1" fill="#d6aa92"/><rect x="35" y="34" width="1" height="1" fill="#000000"/><rect x="18" y="35" width="1" height="1" fill="#4d6529"/><rect x="19" y="35" width="1" height="1" fill="#000000"/><rect x="29" y="35" width="1" height="1" fill="#000000"/><rect x="30" y="35" width="4" height="1" fill="#d6aa92"/><rect x="34" y="35" width="1" height="1" fill="#000000"/><rect x="18" y="36" width="2" height="1" fill="#000000"/><rect x="30" y="36" width="4" height="1" fill="#000000"/><rect x="18" y="37" width="2" height="1" fill="#000000"/><rect x="26" y="37" width="5" height="1" fill="#263116"/><rect x="31" y="37" width="2" height="1" fill="#e4c886"/><rect x="33" y="37" width="5" height="1" fill="#263116"/><rect x="18" y="38" width="1" height="1" fill="#000000"/><rect x="19" y="38" width="1" height="1" fill="#4d6529"/><rect x="25" y="38" width="1" height="1" fill="#263116"/><rect x="26" y="38" width="1" height="1" fill="#000000"/><rect x="27" y="38" width="1" height="1" fill="#5d7377"/><rect x="28" y="38" width="2" height="1" fill="#263116"/><rect x="30" y="38" width="1" height="1" fill="#e4c886"/><rect x="31" y="38" width="2" height="1" fill="#62c08a"/><rect x="33" y="38" width="1" height="1" fill="#e4c886"/><rect x="34" y="38" width="2" height="1" fill="#263116"/><rect x="36" y="38" width="1" height="1" fill="#5d7377"/><rect x="37" y="38" width="1" height="1" fill="#000000"/><rect x="38" y="38" width="1" height="1" fill="#263116"/><rect x="18" y="39" width="1" height="1" fill="#4d6529"/><rect x="19" y="39" width="1" height="1" fill="#000000"/><rect x="24" y="39" width="2" height="1" fill="#000000"/><rect x="26" y="39" width="3" height="1" fill="#5d7377"/><rect x="29" y="39" width="1" height="1" fill="#263116"/><rect x="30" y="39" width="1" height="1" fill="#dcb976"/><rect x="31" y="39" width="1" height="1" fill="#62c08a"/><rect x="32" y="39" width="1" height="1" fill="#58b07f"/><rect x="33" y="39" width="1" height="1" fill="#dcb976"/><rect x="34" y="39" width="1" height="1" fill="#263116"/><rect x="35" y="39" width="3" height="1" fill="#5d7377"/><rect x="38" y="39" width="2" height="1" fill="#000000"/><rect x="18" y="40" width="2" height="1" fill="#000000"/><rect x="23" y="40" width="1" height="1" fill="#000000"/><rect x="24" y="40" width="3" height="1" fill="#5d7377"/><rect x="27" y="40" width="2" height="1" fill="#657b76"/><rect x="29" y="40" width="1" height="1" fill="#5d7377"/><rect x="30" y="40" width="1" height="1" fill="#263116"/><rect x="31" y="40" width="2" height="1" fill="#dcb976"/><rect x="33" y="40" width="1" height="1" fill="#263116"/><rect x="34" y="40" width="1" height="1" fill="#5d7377"/><rect x="35" y="40" width="2" height="1" fill="#657b76"/><rect x="37" y="40" width="3" height="1" fill="#5d7377"/><rect x="40" y="40" width="1" height="1" fill="#000000"/><rect x="18" y="41" width="2" height="1" fill="#000000"/><rect x="23" y="41" width="1" height="1" fill="#000000"/><rect x="24" y="41" width="1" height="1" fill="#5d7377"/><rect x="25" y="41" width="5" height="1" fill="#657b76"/><rect x="30" y="41" width="4" height="1" fill="#5d7377"/><rect x="34" y="41" width="5" height="1" fill="#657b76"/><rect x="39" y="41" width="1" height="1" fill="#5d7377"/><rect x="40" y="41" width="1" height="1" fill="#000000"/><rect x="18" y="42" width="1" height="1" fill="#000000"/><rect x="19" y="42" width="1" height="1" fill="#4d6529"/><rect x="22" y="42" width="1" height="1" fill="#dcb976"/><rect x="23" y="42" width="1" height="1" fill="#ebe9de"/><rect x="24" y="42" width="1" height="1" fill="#5d7377"/><rect x="25" y="42" width="15" height="1" fill="#657b76"/><rect x="40" y="42" width="1" height="1" fill="#5d7377"/><rect x="41" y="42" width="1" height="1" fill="#000000"/><rect x="18" y="43" width="1" height="1" fill="#4d6529"/><rect x="19" y="43" width="1" height="1" fill="#000000"/><rect x="22" y="43" width="1" height="1" fill="#dcb976"/><rect x="23" y="43" width="1" height="1" fill="#ebe9de"/><rect x="24" y="43" width="16" height="1" fill="#657b76"/><rect x="40" y="43" width="1" height="1" fill="#5d7377"/><rect x="41" y="43" width="1" height="1" fill="#000000"/><rect x="42" y="43" width="1" height="1" fill="#263116"/><rect x="18" y="44" width="2" height="1" fill="#000000"/><rect x="21" y="44" width="1" height="1" fill="#ebe9de"/><rect x="22" y="44" width="1" height="1" fill="#dcb976"/><rect x="23" y="44" width="2" height="1" fill="#ebe9de"/><rect x="25" y="44" width="16" height="1" fill="#657b76"/><rect x="41" y="44" width="1" height="1" fill="#000000"/><rect x="42" y="44" width="1" height="1" fill="#263116"/><rect x="18" y="45" width="2" height="1" fill="#000000"/><rect x="20" y="45" width="2" height="1" fill="#d6aa92"/><rect x="22" y="45" width="1" height="1" fill="#ebe9de"/><rect x="23" y="45" width="1" height="1" fill="#dcb976"/><rect x="24" y="45" width="1" height="1" fill="#263116"/><rect x="25" y="45" width="1" height="1" fill="#000000"/><rect x="26" y="45" width="15" height="1" fill="#657b76"/><rect x="41" y="45" width="1" height="1" fill="#000000"/><rect x="42" y="45" width="1" height="1" fill="#263116"/><rect x="18" y="46" width="1" height="1" fill="#000000"/><rect x="19" y="46" width="1" height="1" fill="#4d6529"/><rect x="20" y="46" width="2" height="1" fill="#d6aa92"/><rect x="22" y="46" width="1" height="1" fill="#ebe9de"/><rect x="23" y="46" width="2" height="1" fill="#263116"/><rect x="25" y="46" width="1" height="1" fill="#000000"/><rect x="26" y="46" width="12" height="1" fill="#657b76"/><rect x="38" y="46" width="1" height="1" fill="#000000"/><rect x="39" y="46" width="1" height="1" fill="#ebe9de"/><rect x="40" y="46" width="1" height="1" fill="#5d7377"/><rect x="41" y="46" width="1" height="1" fill="#ebe9de"/><rect x="42" y="46" width="1" height="1" fill="#263116"/><rect x="18" y="47" width="1" height="1" fill="#4d6529"/><rect x="19" y="47" width="1" height="1" fill="#000000"/><rect x="20" y="47" width="2" height="1" fill="#d6aa92"/><rect x="22" y="47" width="3" height="1" fill="#263116"/><rect x="25" y="47" width="1" height="1" fill="#000000"/><rect x="26" y="47" width="12" height="1" fill="#657b76"/><rect x="38" y="47" width="1" height="1" fill="#000000"/><rect x="39" y="47" width="1" height="1" fill="#dcb976"/><rect x="40" y="47" width="1" height="1" fill="#ebe9de"/><rect x="41" y="47" width="1" height="1" fill="#dcb976"/><rect x="42" y="47" width="1" height="1" fill="#263116"/><rect x="18" y="48" width="2" height="1" fill="#000000"/><rect x="20" y="48" width="1" height="1" fill="#d6aa92"/><rect x="21" y="48" width="4" height="1" fill="#263116"/><rect x="25" y="48" width="1" height="1" fill="#000000"/><rect x="26" y="48" width="12" height="1" fill="#657b76"/><rect x="38" y="48" width="1" height="1" fill="#000000"/><rect x="39" y="48" width="1" height="1" fill="#ebe9de"/><rect x="40" y="48" width="1" height="1" fill="#dcb976"/><rect x="41" y="48" width="1" height="1" fill="#ebe9de"/><rect x="42" y="48" width="1" height="1" fill="#263116"/><rect x="18" y="49" width="2" height="1" fill="#000000"/><rect x="21" y="49" width="4" height="1" fill="#263116"/><rect x="25" y="49" width="1" height="1" fill="#000000"/><rect x="26" y="49" width="12" height="1" fill="#657b76"/><rect x="38" y="49" width="1" height="1" fill="#000000"/><rect x="39" y="49" width="3" height="1" fill="#ebe9de"/><rect x="42" y="49" width="1" height="1" fill="#263116"/><rect x="18" y="50" width="1" height="1" fill="#000000"/><rect x="19" y="50" width="1" height="1" fill="#4d6529"/><rect x="21" y="50" width="4" height="1" fill="#263116"/><rect x="25" y="50" width="1" height="1" fill="#000000"/><rect x="26" y="50" width="12" height="1" fill="#657b76"/><rect x="38" y="50" width="1" height="1" fill="#000000"/><rect x="39" y="50" width="3" height="1" fill="#d6aa92"/><rect x="42" y="50" width="1" height="1" fill="#263116"/><rect x="18" y="51" width="1" height="1" fill="#4d6529"/><rect x="19" y="51" width="1" height="1" fill="#000000"/><rect x="21" y="51" width="4" height="1" fill="#263116"/><rect x="25" y="51" width="1" height="1" fill="#000000"/><rect x="26" y="51" width="6" height="1" fill="#621c90"/><rect x="32" y="51" width="1" height="1" fill="#dcb976"/><rect x="33" y="51" width="5" height="1" fill="#657b76"/><rect x="38" y="51" width="1" height="1" fill="#000000"/><rect x="39" y="51" width="3" height="1" fill="#d6aa92"/><rect x="42" y="51" width="1" height="1" fill="#263116"/><rect x="18" y="52" width="2" height="1" fill="#000000"/><rect x="21" y="52" width="4" height="1" fill="#263116"/><rect x="25" y="52" width="1" height="1" fill="#000000"/><rect x="26" y="52" width="1" height="1" fill="#621c90"/><rect x="27" y="52" width="3" height="1" fill="#4c1579"/><rect x="30" y="52" width="8" height="1" fill="#621c90"/><rect x="38" y="52" width="1" height="1" fill="#000000"/><rect x="39" y="52" width="4" height="1" fill="#263116"/><rect x="18" y="53" width="2" height="1" fill="#000000"/><rect x="21" y="53" width="4" height="1" fill="#263116"/><rect x="25" y="53" width="1" height="1" fill="#000000"/><rect x="26" y="53" width="5" height="1" fill="#5d7377"/><rect x="31" y="53" width="1" height="1" fill="#dcb976"/><rect x="32" y="53" width="1" height="1" fill="#621c90"/><rect x="33" y="53" width="2" height="1" fill="#4c1579"/><rect x="35" y="53" width="2" height="1" fill="#621c90"/><rect x="37" y="53" width="1" height="1" fill="#4c1579"/><rect x="38" y="53" width="1" height="1" fill="#000000"/><rect x="39" y="53" width="4" height="1" fill="#263116"/><rect x="18" y="54" width="1" height="1" fill="#000000"/><rect x="19" y="54" width="1" height="1" fill="#4d6529"/><rect x="21" y="54" width="4" height="1" fill="#263116"/><rect x="25" y="54" width="1" height="1" fill="#000000"/><rect x="26" y="54" width="1" height="1" fill="#dcb976"/><rect x="27" y="54" width="4" height="1" fill="#5d7377"/><rect x="31" y="54" width="2" height="1" fill="#dcb976"/><rect x="33" y="54" width="4" height="1" fill="#5d7377"/><rect x="37" y="54" width="1" height="1" fill="#dcb976"/><rect x="38" y="54" width="1" height="1" fill="#000000"/><rect x="39" y="54" width="4" height="1" fill="#263116"/><rect x="18" y="55" width="1" height="1" fill="#4d6529"/><rect x="19" y="55" width="1" height="1" fill="#000000"/><rect x="22" y="55" width="3" height="1" fill="#263116"/><rect x="25" y="55" width="1" height="1" fill="#000000"/><rect x="26" y="55" width="1" height="1" fill="#765a30"/><rect x="27" y="55" width="2" height="1" fill="#dcb976"/><rect x="29" y="55" width="2" height="1" fill="#5d7377"/><rect x="31" y="55" width="2" height="1" fill="#dcb976"/><rect x="33" y="55" width="2" height="1" fill="#5d7377"/><rect x="35" y="55" width="2" height="1" fill="#dcb976"/><rect x="37" y="55" width="1" height="1" fill="#765a30"/><rect x="38" y="55" width="1" height="1" fill="#000000"/><rect x="39" y="55" width="3" height="1" fill="#263116"/><rect x="18" y="56" width="2" height="1" fill="#000000"/><rect x="23" y="56" width="2" height="1" fill="#263116"/><rect x="25" y="56" width="1" height="1" fill="#000000"/><rect x="26" y="56" width="3" height="1" fill="#765a30"/><rect x="29" y="56" width="6" height="1" fill="#dcb976"/><rect x="35" y="56" width="3" height="1" fill="#765a30"/><rect x="38" y="56" width="1" height="1" fill="#000000"/><rect x="39" y="56" width="2" height="1" fill="#263116"/><rect x="18" y="57" width="2" height="1" fill="#000000"/><rect x="23" y="57" width="2" height="1" fill="#263116"/><rect x="25" y="57" width="1" height="1" fill="#000000"/><rect x="26" y="57" width="5" height="1" fill="#765a30"/><rect x="31" y="57" width="2" height="1" fill="#dcb976"/><rect x="33" y="57" width="5" height="1" fill="#765a30"/><rect x="38" y="57" width="1" height="1" fill="#000000"/><rect x="39" y="57" width="2" height="1" fill="#263116"/><rect x="18" y="58" width="1" height="1" fill="#000000"/><rect x="19" y="58" width="1" height="1" fill="#4d6529"/><rect x="24" y="58" width="1" height="1" fill="#263116"/><rect x="25" y="58" width="1" height="1" fill="#000000"/><rect x="26" y="58" width="4" height="1" fill="#765a30"/><rect x="30" y="58" width="1" height="1" fill="#000000"/><rect x="33" y="58" width="1" height="1" fill="#000000"/><rect x="34" y="58" width="4" height="1" fill="#765a30"/><rect x="38" y="58" width="1" height="1" fill="#000000"/><rect x="39" y="58" width="1" height="1" fill="#263116"/><rect x="18" y="59" width="1" height="1" fill="#4d6529"/><rect x="19" y="59" width="1" height="1" fill="#000000"/><rect x="26" y="59" width="1" height="1" fill="#000000"/><rect x="27" y="59" width="3" height="1" fill="#765a30"/><rect x="30" y="59" width="1" height="1" fill="#000000"/><rect x="33" y="59" width="1" height="1" fill="#000000"/><rect x="34" y="59" width="3" height="1" fill="#765a30"/><rect x="37" y="59" width="1" height="1" fill="#000000"/><rect x="18" y="60" width="2" height="1" fill="#000000"/><rect x="27" y="60" width="3" height="1" fill="#000000"/><rect x="34" y="60" width="3" height="1" fill="#000000"/><rect x="18" y="61" width="2" height="1" fill="#000000"/><rect x="27" y="61" width="2" height="1" fill="#000000"/><rect x="35" y="61" width="2" height="1" fill="#000000"/><rect x="18" y="62" width="1" height="1" fill="#000000"/><rect x="19" y="62" width="1" height="1" fill="#4d6529"/><rect x="25" y="62" width="5" height="1" fill="#000000"/><rect x="34" y="62" width="5" height="1" fill="#000000"/><rect x="18" y="63" width="1" height="1" fill="#4d6529"/><rect x="19" y="63" width="1" height="1" fill="#000000"/><rect x="24" y="63" width="6" height="1" fill="#000000"/><rect x="34" y="63" width="6" height="1" fill="#000000"/></svg>
</div>
<div style="left:16.7px;top:1125.5px;width:3.2px;height:3.2px;background:#0b0b0b;"></div>
<div style="left:24.1px;top:1125.5px;width:3.2px;height:3.2px;background:#0b0b0b;"></div>
<div style="left:31.5px;top:1125.5px;width:3.2px;height:3.2px;background:#0b0b0b;"></div>
<div style="left:38.9px;top:1125.5px;width:3.2px;height:3.2px;background:#0b0b0b;"></div>
<div style="left:46.3px;top:1125.5px;width:3.2px;height:3.2px;background:#0b0b0b;"></div>
<div style="left:16.7px;top:1132.9px;width:3.2px;height:3.2px;background:#0b0b0b;"></div>
<div style="left:24.1px;top:1132.9px;width:3.2px;height:3.2px;background:#0b0b0b;"></div>
<div style="left:31.5px;top:1132.9px;width:3.2px;height:3.2px;background:#0b0b0b;"></div>
<div style="left:38.9px;top:1132.9px;width:3.2px;height:3.2px;background:#0b0b0b;"></div>
<div style="left:46.3px;top:1132.9px;width:3.2px;height:3.2px;background:#0b0b0b;"></div>
<div style="left:16.7px;top:1140.3px;width:3.2px;height:3.2px;background:#0b0b0b;"></div>
<div style="left:24.1px;top:1140.3px;width:3.2px;height:3.2px;background:#0b0b0b;"></div>
<div style="left:31.5px;top:1140.3px;width:3.2px;height:3.2px;background:#0b0b0b;"></div>
<div style="left:38.9px;top:1140.3px;width:3.2px;height:3.2px;background:#0b0b0b;"></div>
<div style="left:46.3px;top:1140.3px;width:3.2px;height:3.2px;background:#0b0b0b;"></div>
<div style="left:2108px;top:1124.4px;width:3.2px;height:3.2px;background:#0b0b0b;"></div>
<div style="left:2115.4px;top:1124.4px;width:3.2px;height:3.2px;background:#0b0b0b;"></div>
<div style="left:2122.8px;top:1124.4px;width:3.2px;height:3.2px;background:#0b0b0b;"></div>
<div style="left:2130.2px;top:1124.4px;width:3.2px;height:3.2px;background:#0b0b0b;"></div>
<div style="left:2137.6px;top:1124.4px;width:3.2px;height:3.2px;background:#0b0b0b;"></div>
<div style="left:2108px;top:1131.8px;width:3.2px;height:3.2px;background:#0b0b0b;"></div>
<div style="left:2115.4px;top:1131.8px;width:3.2px;height:3.2px;background:#0b0b0b;"></div>
<div style="left:2122.8px;top:1131.8px;width:3.2px;height:3.2px;background:#0b0b0b;"></div>
<div style="left:2130.2px;top:1131.8px;width:3.2px;height:3.2px;background:#0b0b0b;"></div>
<div style="left:2137.6px;top:1131.8px;width:3.2px;height:3.2px;background:#0b0b0b;"></div>
<div style="left:2108px;top:1139.2px;width:3.2px;height:3.2px;background:#0b0b0b;"></div>
<div style="left:2115.4px;top:1139.2px;width:3.2px;height:3.2px;background:#0b0b0b;"></div>
<div style="left:2122.8px;top:1139.2px;width:3.2px;height:3.2px;background:#0b0b0b;"></div>
<div style="left:2130.2px;top:1139.2px;width:3.2px;height:3.2px;background:#0b0b0b;"></div>
<div style="left:2137.6px;top:1139.2px;width:3.2px;height:3.2px;background:#0b0b0b;"></div>
<div style="left:63.4px;top:1118.5px;width:73.5px;height:57px;background:#141414;clip-path:polygon(3.2px 0px,70.3px 0px,70.3px 3.2px,73.5px 3.2px,73.5px 53.8px,70.3px 53.8px,70.3px 57px,3.2px 57px,3.2px 53.8px,0px 53.8px,0px 3.2px,3.2px 3.2px)"></div>
<div style="left:70.2px;top:1121.7px;width:59.9px;height:3.6px;background:#3c3c3c;"></div>
<div style="left:70.2px;top:1165.4px;width:59.9px;height:3.6px;background:#3c3c3c;"></div>
<div style="left:66.6px;top:1125.3px;width:3.6px;height:40.1px;background:#3c3c3c;"></div>
<div style="left:130.1px;top:1125.3px;width:3.6px;height:40.1px;background:#3c3c3c;"></div>
<div style="left:70.2px;top:1125.3px;width:59.9px;height:40.1px;background:#000;"></div>
<div style="left:135.5px;top:1118.5px;width:73.5px;height:57px;background:#141414;clip-path:polygon(3.2px 0px,70.3px 0px,70.3px 3.2px,73.5px 3.2px,73.5px 53.8px,70.3px 53.8px,70.3px 57px,3.2px 57px,3.2px 53.8px,0px 53.8px,0px 3.2px,3.2px 3.2px)"></div>
<div style="left:142.3px;top:1121.7px;width:59.9px;height:3.6px;background:#3c3c3c;"></div>
<div style="left:142.3px;top:1165.4px;width:59.9px;height:3.6px;background:#3c3c3c;"></div>
<div style="left:138.7px;top:1125.3px;width:3.6px;height:40.1px;background:#3c3c3c;"></div>
<div style="left:202.2px;top:1125.3px;width:3.6px;height:40.1px;background:#3c3c3c;"></div>
<div style="left:142.3px;top:1125.3px;width:59.9px;height:40.1px;background:#000;"></div>
<div style="left:209.2px;top:1118.5px;width:73.5px;height:57px;background:#141414;clip-path:polygon(3.2px 0px,70.3px 0px,70.3px 3.2px,73.5px 3.2px,73.5px 53.8px,70.3px 53.8px,70.3px 57px,3.2px 57px,3.2px 53.8px,0px 53.8px,0px 3.2px,3.2px 3.2px)"></div>
<div style="left:216px;top:1121.7px;width:59.9px;height:3.6px;background:#3c3c3c;"></div>
<div style="left:216px;top:1165.4px;width:59.9px;height:3.6px;background:#3c3c3c;"></div>
<div style="left:212.4px;top:1125.3px;width:3.6px;height:40.1px;background:#3c3c3c;"></div>
<div style="left:275.9px;top:1125.3px;width:3.6px;height:40.1px;background:#3c3c3c;"></div>
<div style="left:216px;top:1125.3px;width:59.9px;height:40.1px;background:#000;"></div>
<div style="left:283px;top:1118.5px;width:73.5px;height:57px;background:#141414;clip-path:polygon(3.2px 0px,70.3px 0px,70.3px 3.2px,73.5px 3.2px,73.5px 53.8px,70.3px 53.8px,70.3px 57px,3.2px 57px,3.2px 53.8px,0px 53.8px,0px 3.2px,3.2px 3.2px)"></div>
<div style="left:289.8px;top:1121.7px;width:59.9px;height:3.6px;background:#3c3c3c;"></div>
<div style="left:289.8px;top:1165.4px;width:59.9px;height:3.6px;background:#3c3c3c;"></div>
<div style="left:286.2px;top:1125.3px;width:3.6px;height:40.1px;background:#3c3c3c;"></div>
<div style="left:349.7px;top:1125.3px;width:3.6px;height:40.1px;background:#3c3c3c;"></div>
<div style="left:289.8px;top:1125.3px;width:59.9px;height:40.1px;background:#000;"></div>
<div style="left:356.6px;top:1118.5px;width:73.5px;height:57px;background:#141414;clip-path:polygon(3.2px 0px,70.3px 0px,70.3px 3.2px,73.5px 3.2px,73.5px 53.8px,70.3px 53.8px,70.3px 57px,3.2px 57px,3.2px 53.8px,0px 53.8px,0px 3.2px,3.2px 3.2px)"></div>
<div style="left:363.4px;top:1121.7px;width:59.9px;height:3.6px;background:#3c3c3c;"></div>
<div style="left:363.4px;top:1165.4px;width:59.9px;height:3.6px;background:#3c3c3c;"></div>
<div style="left:359.8px;top:1125.3px;width:3.6px;height:40.1px;background:#3c3c3c;"></div>
<div style="left:423.3px;top:1125.3px;width:3.6px;height:40.1px;background:#3c3c3c;"></div>
<div style="left:363.4px;top:1125.3px;width:59.9px;height:40.1px;background:#000;"></div>
<svg style="position:absolute;left:91.1px;top:1138px" width="18.25" height="18.25" viewBox="0 0 5 5" preserveAspectRatio="none" shape-rendering="crispEdges"><rect x="0" y="0" width="1" height="1" fill="#c9f1c9"/><rect x="4" y="0" width="1" height="1" fill="#c9f1c9"/><rect x="0" y="1" width="1" height="1" fill="#c9f1c9"/><rect x="3" y="1" width="2" height="1" fill="#c9f1c9"/><rect x="0" y="2" width="1" height="1" fill="#c9f1c9"/><rect x="2" y="2" width="3" height="1" fill="#c9f1c9"/><rect x="0" y="3" width="1" height="1" fill="#c9f1c9"/><rect x="3" y="3" width="2" height="1" fill="#c9f1c9"/><rect x="0" y="4" width="1" height="1" fill="#c9f1c9"/><rect x="4" y="4" width="1" height="1" fill="#c9f1c9"/></svg>
<svg style="position:absolute;left:164.7px;top:1138px" width="18.25" height="18.25" viewBox="0 0 5 5" preserveAspectRatio="none" shape-rendering="crispEdges"><rect x="2" y="0" width="1" height="1" fill="#c9f1c9"/><rect x="4" y="0" width="1" height="1" fill="#c9f1c9"/><rect x="1" y="1" width="2" height="1" fill="#c9f1c9"/><rect x="4" y="1" width="1" height="1" fill="#c9f1c9"/><rect x="0" y="2" width="3" height="1" fill="#c9f1c9"/><rect x="4" y="2" width="1" height="1" fill="#c9f1c9"/><rect x="1" y="3" width="2" height="1" fill="#c9f1c9"/><rect x="4" y="3" width="1" height="1" fill="#c9f1c9"/><rect x="2" y="4" width="1" height="1" fill="#c9f1c9"/><rect x="4" y="4" width="1" height="1" fill="#c9f1c9"/></svg>
<svg style="position:absolute;left:241.2px;top:1138px" width="10.95" height="18.25" viewBox="0 0 3 5" preserveAspectRatio="none" shape-rendering="crispEdges"><rect x="0" y="0" width="1" height="1" fill="#c9f1c9"/><rect x="0" y="1" width="2" height="1" fill="#c9f1c9"/><rect x="0" y="2" width="3" height="1" fill="#c9f1c9"/><rect x="0" y="3" width="2" height="1" fill="#c9f1c9"/><rect x="0" y="4" width="1" height="1" fill="#c9f1c9"/></svg>
<svg style="position:absolute;left:310.7px;top:1138.2px" width="18.25" height="18.25" viewBox="0 0 5 5" preserveAspectRatio="none" shape-rendering="crispEdges"><rect x="0" y="0" width="1" height="1" fill="#c9f1c9"/><rect x="2" y="0" width="1" height="1" fill="#c9f1c9"/><rect x="0" y="1" width="1" height="1" fill="#c9f1c9"/><rect x="2" y="1" width="2" height="1" fill="#c9f1c9"/><rect x="0" y="2" width="1" height="1" fill="#c9f1c9"/><rect x="2" y="2" width="3" height="1" fill="#c9f1c9"/><rect x="0" y="3" width="1" height="1" fill="#c9f1c9"/><rect x="2" y="3" width="2" height="1" fill="#c9f1c9"/><rect x="0" y="4" width="1" height="1" fill="#c9f1c9"/><rect x="2" y="4" width="1" height="1" fill="#c9f1c9"/></svg>
<svg style="position:absolute;left:384.1px;top:1138.2px" width="18.25" height="18.25" viewBox="0 0 5 5" preserveAspectRatio="none" shape-rendering="crispEdges"><rect x="0" y="0" width="1" height="1" fill="#c9f1c9"/><rect x="4" y="0" width="1" height="1" fill="#c9f1c9"/><rect x="0" y="1" width="2" height="1" fill="#c9f1c9"/><rect x="4" y="1" width="1" height="1" fill="#c9f1c9"/><rect x="0" y="2" width="3" height="1" fill="#c9f1c9"/><rect x="4" y="2" width="1" height="1" fill="#c9f1c9"/><rect x="0" y="3" width="2" height="1" fill="#c9f1c9"/><rect x="4" y="3" width="1" height="1" fill="#c9f1c9"/><rect x="0" y="4" width="1" height="1" fill="#c9f1c9"/><rect x="4" y="4" width="1" height="1" fill="#c9f1c9"/></svg>
<div style="left:442.4px;top:1118.5px;width:75.4px;height:57px;background:#141414;clip-path:polygon(3.2px 0px,72.2px 0px,72.2px 3.2px,75.4px 3.2px,75.4px 53.8px,72.2px 53.8px,72.2px 57px,3.2px 57px,3.2px 53.8px,0px 53.8px,0px 3.2px,3.2px 3.2px)"></div>
<div style="left:449.2px;top:1121.7px;width:61.8px;height:3.6px;background:#3c3c3c;"></div>
<div style="left:449.2px;top:1165.4px;width:61.8px;height:3.6px;background:#3c3c3c;"></div>
<div style="left:445.6px;top:1125.3px;width:3.6px;height:40.1px;background:#3c3c3c;"></div>
<div style="left:511px;top:1125.3px;width:3.6px;height:40.1px;background:#3c3c3c;"></div>
<div style="left:449.2px;top:1125.3px;width:61.8px;height:40.1px;background:#000;"></div>
<svg style="position:absolute;left:461.4px;top:1130.6px" width="39.6" height="32.4" viewBox="0 0 11 9" preserveAspectRatio="none" shape-rendering="crispEdges"><rect x="1" y="0" width="9" height="1" fill="#2b3a2b"/><rect x="0" y="1" width="1" height="1" fill="#2b3a2b"/><rect x="10" y="1" width="1" height="1" fill="#2b3a2b"/><rect x="0" y="2" width="1" height="1" fill="#2b3a2b"/><rect x="3" y="2" width="1" height="1" fill="#8aa687"/><rect x="7" y="2" width="2" height="1" fill="#8aa687"/><rect x="10" y="2" width="1" height="1" fill="#2b3a2b"/><rect x="0" y="3" width="1" height="1" fill="#2b3a2b"/><rect x="2" y="3" width="1" height="1" fill="#8aa687"/><rect x="4" y="3" width="1" height="1" fill="#8aa687"/><rect x="6" y="3" width="1" height="1" fill="#8aa687"/><rect x="10" y="3" width="1" height="1" fill="#2b3a2b"/><rect x="0" y="4" width="1" height="1" fill="#2b3a2b"/><rect x="2" y="4" width="1" height="1" fill="#8aa687"/><rect x="4" y="4" width="1" height="1" fill="#8aa687"/><rect x="7" y="4" width="1" height="1" fill="#8aa687"/><rect x="10" y="4" width="1" height="1" fill="#2b3a2b"/><rect x="0" y="5" width="1" height="1" fill="#2b3a2b"/><rect x="2" y="5" width="3" height="1" fill="#8aa687"/><rect x="8" y="5" width="1" height="1" fill="#8aa687"/><rect x="10" y="5" width="1" height="1" fill="#2b3a2b"/><rect x="0" y="6" width="1" height="1" fill="#2b3a2b"/><rect x="2" y="6" width="1" height="1" fill="#8aa687"/><rect x="4" y="6" width="1" height="1" fill="#8aa687"/><rect x="6" y="6" width="2" height="1" fill="#8aa687"/><rect x="10" y="6" width="1" height="1" fill="#2b3a2b"/><rect x="0" y="7" width="1" height="1" fill="#2b3a2b"/><rect x="10" y="7" width="1" height="1" fill="#2b3a2b"/><rect x="1" y="8" width="9" height="1" fill="#2b3a2b"/></svg>
<div style="left:529.8px;top:1118.5px;width:73.8px;height:57px;background:#141414;clip-path:polygon(3.2px 0px,70.6px 0px,70.6px 3.2px,73.8px 3.2px,73.8px 53.8px,70.6px 53.8px,70.6px 57px,3.2px 57px,3.2px 53.8px,0px 53.8px,0px 3.2px,3.2px 3.2px)"></div>
<div style="left:536.6px;top:1121.7px;width:60.2px;height:3.6px;background:#3c3c3c;"></div>
<div style="left:536.6px;top:1165.4px;width:60.2px;height:3.6px;background:#3c3c3c;"></div>
<div style="left:533px;top:1125.3px;width:3.6px;height:40.1px;background:#3c3c3c;"></div>
<div style="left:596.8px;top:1125.3px;width:3.6px;height:40.1px;background:#3c3c3c;"></div>
<div style="left:536.6px;top:1125.3px;width:60.2px;height:40.1px;background:#000;"></div>
<div style="left:605.3px;top:1118.5px;width:73.7px;height:57px;background:#141414;clip-path:polygon(3.2px 0px,70.5px 0px,70.5px 3.2px,73.7px 3.2px,73.7px 53.8px,70.5px 53.8px,70.5px 57px,3.2px 57px,3.2px 53.8px,0px 53.8px,0px 3.2px,3.2px 3.2px)"></div>
<div style="left:612.1px;top:1121.7px;width:60.1px;height:3.6px;background:#3c3c3c;"></div>
<div style="left:612.1px;top:1165.4px;width:60.1px;height:3.6px;background:#3c3c3c;"></div>
<div style="left:608.5px;top:1125.3px;width:3.6px;height:40.1px;background:#3c3c3c;"></div>
<div style="left:672.2px;top:1125.3px;width:3.6px;height:40.1px;background:#3c3c3c;"></div>
<div style="left:612.1px;top:1125.3px;width:60.1px;height:40.1px;background:#000;"></div>
<svg style="position:absolute;left:555.8px;top:1130px" width="25.55" height="32.85" viewBox="0 0 7 9" preserveAspectRatio="none" shape-rendering="crispEdges"><rect x="1" y="0" width="5" height="1" fill="#c9f1c9"/><rect x="0" y="1" width="1" height="1" fill="#c9f1c9"/><rect x="6" y="1" width="1" height="1" fill="#c9f1c9"/><rect x="0" y="2" width="1" height="1" fill="#c9f1c9"/><rect x="3" y="2" width="1" height="1" fill="#c9f1c9"/><rect x="6" y="2" width="1" height="1" fill="#c9f1c9"/><rect x="0" y="3" width="1" height="1" fill="#c9f1c9"/><rect x="2" y="3" width="3" height="1" fill="#c9f1c9"/><rect x="6" y="3" width="1" height="1" fill="#c9f1c9"/><rect x="0" y="4" width="1" height="1" fill="#c9f1c9"/><rect x="3" y="4" width="1" height="1" fill="#c9f1c9"/><rect x="6" y="4" width="1" height="1" fill="#c9f1c9"/><rect x="0" y="5" width="1" height="1" fill="#c9f1c9"/><rect x="6" y="5" width="1" height="1" fill="#c9f1c9"/><rect x="0" y="6" width="1" height="1" fill="#8eae8c"/><rect x="1" y="6" width="5" height="1" fill="#c9f1c9"/><rect x="6" y="6" width="1" height="1" fill="#8eae8c"/><rect x="0" y="7" width="1" height="1" fill="#8eae8c"/><rect x="1" y="7" width="5" height="1" fill="#4b5e4b"/><rect x="6" y="7" width="1" height="1" fill="#8eae8c"/><rect x="1" y="8" width="5" height="1" fill="#8eae8c"/></svg>
<svg style="position:absolute;left:625.4px;top:1130.3px" width="32.85" height="25.55" viewBox="0 0 9 7" preserveAspectRatio="none" shape-rendering="crispEdges"><rect x="1" y="0" width="1" height="1" fill="#8eae8c"/><rect x="3" y="0" width="5" height="1" fill="#c9f1c9"/><rect x="0" y="1" width="2" height="1" fill="#8eae8c"/><rect x="2" y="1" width="1" height="1" fill="#c9f1c9"/><rect x="8" y="1" width="1" height="1" fill="#c9f1c9"/><rect x="0" y="2" width="2" height="1" fill="#8eae8c"/><rect x="2" y="2" width="1" height="1" fill="#c9f1c9"/><rect x="5" y="2" width="1" height="1" fill="#c9f1c9"/><rect x="8" y="2" width="1" height="1" fill="#c9f1c9"/><rect x="0" y="3" width="2" height="1" fill="#8eae8c"/><rect x="2" y="3" width="1" height="1" fill="#c9f1c9"/><rect x="4" y="3" width="3" height="1" fill="#c9f1c9"/><rect x="8" y="3" width="1" height="1" fill="#c9f1c9"/><rect x="0" y="4" width="2" height="1" fill="#8eae8c"/><rect x="2" y="4" width="1" height="1" fill="#c9f1c9"/><rect x="5" y="4" width="1" height="1" fill="#c9f1c9"/><rect x="8" y="4" width="1" height="1" fill="#c9f1c9"/><rect x="0" y="5" width="2" height="1" fill="#8eae8c"/><rect x="2" y="5" width="1" height="1" fill="#c9f1c9"/><rect x="8" y="5" width="1" height="1" fill="#c9f1c9"/><rect x="1" y="6" width="1" height="1" fill="#8eae8c"/><rect x="3" y="6" width="5" height="1" fill="#c9f1c9"/></svg>
<div style="left:1288px;top:1118.3px;width:73.2px;height:57px;background:#141414;clip-path:polygon(3.2px 0px,70px 0px,70px 3.2px,73.2px 3.2px,73.2px 53.8px,70px 53.8px,70px 57px,3.2px 57px,3.2px 53.8px,0px 53.8px,0px 3.2px,3.2px 3.2px)"></div>
<div style="left:1294.8px;top:1121.5px;width:59.6px;height:3.6px;background:#3c3c3c;"></div>
<div style="left:1294.8px;top:1165.2px;width:59.6px;height:3.6px;background:#3c3c3c;"></div>
<div style="left:1291.2px;top:1125.1px;width:3.6px;height:40.1px;background:#3c3c3c;"></div>
<div style="left:1354.4px;top:1125.1px;width:3.6px;height:40.1px;background:#3c3c3c;"></div>
<div style="left:1294.8px;top:1125.1px;width:59.6px;height:40.1px;background:#000;"></div>
<div style="left:1361.2px;top:1118.3px;width:73.2px;height:57px;background:#141414;clip-path:polygon(3.2px 0px,70px 0px,70px 3.2px,73.2px 3.2px,73.2px 53.8px,70px 53.8px,70px 57px,3.2px 57px,3.2px 53.8px,0px 53.8px,0px 3.2px,3.2px 3.2px)"></div>
<div style="left:1368px;top:1121.5px;width:59.6px;height:3.6px;background:#3c3c3c;"></div>
<div style="left:1368px;top:1165.2px;width:59.6px;height:3.6px;background:#3c3c3c;"></div>
<div style="left:1364.4px;top:1125.1px;width:3.6px;height:40.1px;background:#3c3c3c;"></div>
<div style="left:1427.6px;top:1125.1px;width:3.6px;height:40.1px;background:#3c3c3c;"></div>
<div style="left:1368px;top:1125.1px;width:59.6px;height:40.1px;background:#000;"></div>
<div style="left:1434.4px;top:1118.3px;width:73.2px;height:57px;background:#141414;clip-path:polygon(3.2px 0px,70px 0px,70px 3.2px,73.2px 3.2px,73.2px 53.8px,70px 53.8px,70px 57px,3.2px 57px,3.2px 53.8px,0px 53.8px,0px 3.2px,3.2px 3.2px)"></div>
<div style="left:1441.2px;top:1121.5px;width:59.6px;height:3.6px;background:#3c3c3c;"></div>
<div style="left:1441.2px;top:1165.2px;width:59.6px;height:3.6px;background:#3c3c3c;"></div>
<div style="left:1437.6px;top:1125.1px;width:3.6px;height:40.1px;background:#3c3c3c;"></div>
<div style="left:1500.8px;top:1125.1px;width:3.6px;height:40.1px;background:#3c3c3c;"></div>
<div style="left:1441.2px;top:1125.1px;width:59.6px;height:40.1px;background:#000;"></div>
<div style="left:1507.6px;top:1118.3px;width:73.2px;height:57px;background:#141414;clip-path:polygon(3.2px 0px,70px 0px,70px 3.2px,73.2px 3.2px,73.2px 53.8px,70px 53.8px,70px 57px,3.2px 57px,3.2px 53.8px,0px 53.8px,0px 3.2px,3.2px 3.2px)"></div>
<div style="left:1514.4px;top:1121.5px;width:59.6px;height:3.6px;background:#3c3c3c;"></div>
<div style="left:1514.4px;top:1165.2px;width:59.6px;height:3.6px;background:#3c3c3c;"></div>
<div style="left:1510.8px;top:1125.1px;width:3.6px;height:40.1px;background:#3c3c3c;"></div>
<div style="left:1574px;top:1125.1px;width:3.6px;height:40.1px;background:#3c3c3c;"></div>
<div style="left:1514.4px;top:1125.1px;width:59.6px;height:40.1px;background:#000;"></div>
<div style="left:1580.8px;top:1118.3px;width:73.2px;height:57px;background:#141414;clip-path:polygon(3.2px 0px,70px 0px,70px 3.2px,73.2px 3.2px,73.2px 53.8px,70px 53.8px,70px 57px,3.2px 57px,3.2px 53.8px,0px 53.8px,0px 3.2px,3.2px 3.2px)"></div>
<div style="left:1587.6px;top:1121.5px;width:59.6px;height:3.6px;background:#3c3c3c;"></div>
<div style="left:1587.6px;top:1165.2px;width:59.6px;height:3.6px;background:#3c3c3c;"></div>
<div style="left:1584px;top:1125.1px;width:3.6px;height:40.1px;background:#3c3c3c;"></div>
<div style="left:1647.2px;top:1125.1px;width:3.6px;height:40.1px;background:#3c3c3c;"></div>
<div style="left:1587.6px;top:1125.1px;width:59.6px;height:40.1px;background:#000;"></div>
<div style="left:1654px;top:1118.3px;width:73.2px;height:57px;background:#141414;clip-path:polygon(3.2px 0px,70px 0px,70px 3.2px,73.2px 3.2px,73.2px 53.8px,70px 53.8px,70px 57px,3.2px 57px,3.2px 53.8px,0px 53.8px,0px 3.2px,3.2px 3.2px)"></div>
<div style="left:1660.8px;top:1121.5px;width:59.6px;height:3.6px;background:#3c3c3c;"></div>
<div style="left:1660.8px;top:1165.2px;width:59.6px;height:3.6px;background:#3c3c3c;"></div>
<div style="left:1657.2px;top:1125.1px;width:3.6px;height:40.1px;background:#3c3c3c;"></div>
<div style="left:1720.4px;top:1125.1px;width:3.6px;height:40.1px;background:#3c3c3c;"></div>
<div style="left:1660.8px;top:1125.1px;width:59.6px;height:40.1px;background:#000;"></div>
<div style="left:1727.2px;top:1118.3px;width:73.2px;height:57px;background:#141414;clip-path:polygon(3.2px 0px,70px 0px,70px 3.2px,73.2px 3.2px,73.2px 53.8px,70px 53.8px,70px 57px,3.2px 57px,3.2px 53.8px,0px 53.8px,0px 3.2px,3.2px 3.2px)"></div>
<div style="left:1734px;top:1121.5px;width:59.6px;height:3.6px;background:#3c3c3c;"></div>
<div style="left:1734px;top:1165.2px;width:59.6px;height:3.6px;background:#3c3c3c;"></div>
<div style="left:1730.4px;top:1125.1px;width:3.6px;height:40.1px;background:#3c3c3c;"></div>
<div style="left:1793.6px;top:1125.1px;width:3.6px;height:40.1px;background:#3c3c3c;"></div>
<div style="left:1734px;top:1125.1px;width:59.6px;height:40.1px;background:#000;"></div>
<div style="left:1800.4px;top:1118.3px;width:73.2px;height:57px;background:#141414;clip-path:polygon(3.2px 0px,70px 0px,70px 3.2px,73.2px 3.2px,73.2px 53.8px,70px 53.8px,70px 57px,3.2px 57px,3.2px 53.8px,0px 53.8px,0px 3.2px,3.2px 3.2px)"></div>
<div style="left:1807.2px;top:1121.5px;width:59.6px;height:3.6px;background:#3c3c3c;"></div>
<div style="left:1807.2px;top:1165.2px;width:59.6px;height:3.6px;background:#3c3c3c;"></div>
<div style="left:1803.6px;top:1125.1px;width:3.6px;height:40.1px;background:#3c3c3c;"></div>
<div style="left:1866.8px;top:1125.1px;width:3.6px;height:40.1px;background:#3c3c3c;"></div>
<div style="left:1807.2px;top:1125.1px;width:59.6px;height:40.1px;background:#000;"></div>
<div style="left:1873.6px;top:1118.3px;width:73.2px;height:57px;background:#141414;clip-path:polygon(3.2px 0px,70px 0px,70px 3.2px,73.2px 3.2px,73.2px 53.8px,70px 53.8px,70px 57px,3.2px 57px,3.2px 53.8px,0px 53.8px,0px 3.2px,3.2px 3.2px)"></div>
<div style="left:1880.4px;top:1121.5px;width:59.6px;height:3.6px;background:#3c3c3c;"></div>
<div style="left:1880.4px;top:1165.2px;width:59.6px;height:3.6px;background:#3c3c3c;"></div>
<div style="left:1876.8px;top:1125.1px;width:3.6px;height:40.1px;background:#3c3c3c;"></div>
<div style="left:1940px;top:1125.1px;width:3.6px;height:40.1px;background:#3c3c3c;"></div>
<div style="left:1880.4px;top:1125.1px;width:59.6px;height:40.1px;background:#000;"></div>
<div style="left:1946.8px;top:1118.3px;width:73.2px;height:57px;background:#141414;clip-path:polygon(3.2px 0px,70px 0px,70px 3.2px,73.2px 3.2px,73.2px 53.8px,70px 53.8px,70px 57px,3.2px 57px,3.2px 53.8px,0px 53.8px,0px 3.2px,3.2px 3.2px)"></div>
<div style="left:1953.6px;top:1121.5px;width:59.6px;height:3.6px;background:#3c3c3c;"></div>
<div style="left:1953.6px;top:1165.2px;width:59.6px;height:3.6px;background:#3c3c3c;"></div>
<div style="left:1950px;top:1125.1px;width:3.6px;height:40.1px;background:#3c3c3c;"></div>
<div style="left:2013.2px;top:1125.1px;width:3.6px;height:40.1px;background:#3c3c3c;"></div>
<div style="left:1953.6px;top:1125.1px;width:59.6px;height:40.1px;background:#000;"></div>
<div style="left:2020px;top:1118.3px;width:73.2px;height:57px;background:#141414;clip-path:polygon(3.2px 0px,70px 0px,70px 3.2px,73.2px 3.2px,73.2px 53.8px,70px 53.8px,70px 57px,3.2px 57px,3.2px 53.8px,0px 53.8px,0px 3.2px,3.2px 3.2px)"></div>
<div style="left:2026.8px;top:1121.5px;width:59.6px;height:3.6px;background:#3c3c3c;"></div>
<div style="left:2026.8px;top:1165.2px;width:59.6px;height:3.6px;background:#3c3c3c;"></div>
<div style="left:2023.2px;top:1125.1px;width:3.6px;height:40.1px;background:#3c3c3c;"></div>
<div style="left:2086.4px;top:1125.1px;width:3.6px;height:40.1px;background:#3c3c3c;"></div>
<div style="left:2026.8px;top:1125.1px;width:59.6px;height:40.1px;background:#000;"></div>
<svg style="position:absolute;left:1309.6px;top:1134.2px" width="32.85" height="25.55" viewBox="0 0 9 7" preserveAspectRatio="none" shape-rendering="crispEdges"><rect x="1" y="0" width="1" height="1" fill="#c9f1c9"/><rect x="4" y="0" width="1" height="1" fill="#c9f1c9"/><rect x="7" y="0" width="1" height="1" fill="#c9f1c9"/><rect x="0" y="1" width="1" height="1" fill="#c9f1c9"/><rect x="3" y="1" width="3" height="1" fill="#c9f1c9"/><rect x="8" y="1" width="1" height="1" fill="#c9f1c9"/><rect x="0" y="2" width="1" height="1" fill="#c9f1c9"/><rect x="2" y="2" width="1" height="1" fill="#c9f1c9"/><rect x="4" y="2" width="1" height="1" fill="#c9f1c9"/><rect x="6" y="2" width="1" height="1" fill="#c9f1c9"/><rect x="8" y="2" width="1" height="1" fill="#c9f1c9"/><rect x="0" y="3" width="1" height="1" fill="#c9f1c9"/><rect x="4" y="3" width="1" height="1" fill="#c9f1c9"/><rect x="8" y="3" width="1" height="1" fill="#c9f1c9"/><rect x="0" y="4" width="1" height="1" fill="#c9f1c9"/><rect x="4" y="4" width="1" height="1" fill="#c9f1c9"/><rect x="8" y="4" width="1" height="1" fill="#c9f1c9"/><rect x="0" y="5" width="1" height="1" fill="#c9f1c9"/><rect x="8" y="5" width="1" height="1" fill="#c9f1c9"/><rect x="0" y="6" width="1" height="1" fill="#8eae8c"/><rect x="1" y="6" width="7" height="1" fill="#c9f1c9"/><rect x="8" y="6" width="1" height="1" fill="#8eae8c"/></svg>
<svg style="position:absolute;left:1380.7px;top:1128.8px" width="36.5" height="36.5" viewBox="0 0 10 10" preserveAspectRatio="none" shape-rendering="crispEdges"><rect x="0" y="0" width="1" height="1" fill="#c9f1c9"/><rect x="2" y="0" width="1" height="1" fill="#c9f1c9"/><rect x="4" y="0" width="1" height="1" fill="#c9f1c9"/><rect x="6" y="0" width="1" height="1" fill="#c9f1c9"/><rect x="1" y="1" width="5" height="1" fill="#4b5e4b"/><rect x="7" y="1" width="1" height="1" fill="#c9f1c9"/><rect x="0" y="2" width="1" height="1" fill="#c9f1c9"/><rect x="1" y="2" width="6" height="1" fill="#4b5e4b"/><rect x="1" y="3" width="6" height="1" fill="#4b5e4b"/><rect x="7" y="3" width="1" height="1" fill="#c9f1c9"/><rect x="9" y="3" width="1" height="1" fill="#c9f1c9"/><rect x="0" y="4" width="1" height="1" fill="#c9f1c9"/><rect x="1" y="4" width="8" height="1" fill="#4b5e4b"/><rect x="1" y="5" width="8" height="1" fill="#4b5e4b"/><rect x="9" y="5" width="1" height="1" fill="#c9f1c9"/><rect x="1" y="6" width="1" height="1" fill="#c9f1c9"/><rect x="2" y="6" width="7" height="1" fill="#4b5e4b"/><rect x="1" y="7" width="1" height="1" fill="#c9f1c9"/><rect x="3" y="7" width="1" height="1" fill="#c9f1c9"/><rect x="4" y="7" width="5" height="1" fill="#4b5e4b"/><rect x="9" y="7" width="1" height="1" fill="#c9f1c9"/><rect x="3" y="8" width="6" height="1" fill="#4b5e4b"/><rect x="3" y="9" width="1" height="1" fill="#c9f1c9"/><rect x="5" y="9" width="1" height="1" fill="#c9f1c9"/><rect x="7" y="9" width="1" height="1" fill="#c9f1c9"/><rect x="9" y="9" width="1" height="1" fill="#c9f1c9"/></svg>
<svg style="position:absolute;left:1455.8px;top:1134.2px" width="32.85" height="25.55" viewBox="0 0 9 7" preserveAspectRatio="none" shape-rendering="crispEdges"><rect x="0" y="0" width="1" height="1" fill="#8eae8c"/><rect x="2" y="0" width="1" height="1" fill="#8eae8c"/><rect x="4" y="0" width="1" height="1" fill="#4b5e4b"/><rect x="6" y="0" width="2" height="1" fill="#c9f1c9"/><rect x="8" y="0" width="1" height="1" fill="#8eae8c"/><rect x="0" y="1" width="1" height="1" fill="#8eae8c"/><rect x="2" y="1" width="1" height="1" fill="#8eae8c"/><rect x="5" y="1" width="1" height="1" fill="#c9f1c9"/><rect x="8" y="1" width="1" height="1" fill="#8eae8c"/><rect x="0" y="2" width="1" height="1" fill="#8eae8c"/><rect x="2" y="2" width="1" height="1" fill="#4b5e4b"/><rect x="4" y="2" width="1" height="1" fill="#c9f1c9"/><rect x="6" y="2" width="1" height="1" fill="#8eae8c"/><rect x="8" y="2" width="1" height="1" fill="#8eae8c"/><rect x="4" y="3" width="1" height="1" fill="#c9f1c9"/><rect x="0" y="4" width="1" height="1" fill="#8eae8c"/><rect x="2" y="4" width="1" height="1" fill="#4b5e4b"/><rect x="3" y="4" width="1" height="1" fill="#c9f1c9"/><rect x="6" y="4" width="1" height="1" fill="#8eae8c"/><rect x="8" y="4" width="1" height="1" fill="#8eae8c"/><rect x="2" y="5" width="1" height="1" fill="#c9f1c9"/><rect x="0" y="6" width="3" height="1" fill="#c9f1c9"/><rect x="4" y="6" width="1" height="1" fill="#4b5e4b"/><rect x="6" y="6" width="1" height="1" fill="#8eae8c"/><rect x="8" y="6" width="1" height="1" fill="#8eae8c"/></svg>
<svg style="position:absolute;left:1528.9px;top:1130.2px" width="32.85" height="32.85" viewBox="0 0 9 9" preserveAspectRatio="none" shape-rendering="crispEdges"><rect x="0" y="0" width="2" height="1" fill="#c9f1c9"/><rect x="3" y="0" width="1" height="1" fill="#c9f1c9"/><rect x="5" y="0" width="1" height="1" fill="#c9f1c9"/><rect x="7" y="0" width="2" height="1" fill="#c9f1c9"/><rect x="0" y="1" width="1" height="1" fill="#c9f1c9"/><rect x="8" y="1" width="1" height="1" fill="#c9f1c9"/><rect x="2" y="2" width="5" height="1" fill="#c9f1c9"/><rect x="0" y="3" width="1" height="1" fill="#c9f1c9"/><rect x="4" y="3" width="1" height="1" fill="#c9f1c9"/><rect x="8" y="3" width="1" height="1" fill="#c9f1c9"/><rect x="4" y="4" width="1" height="1" fill="#c9f1c9"/><rect x="0" y="5" width="1" height="1" fill="#c9f1c9"/><rect x="4" y="5" width="1" height="1" fill="#c9f1c9"/><rect x="8" y="5" width="1" height="1" fill="#c9f1c9"/><rect x="4" y="6" width="1" height="1" fill="#c9f1c9"/><rect x="0" y="7" width="1" height="1" fill="#c9f1c9"/><rect x="8" y="7" width="1" height="1" fill="#c9f1c9"/><rect x="0" y="8" width="2" height="1" fill="#c9f1c9"/><rect x="3" y="8" width="1" height="1" fill="#c9f1c9"/><rect x="5" y="8" width="1" height="1" fill="#c9f1c9"/><rect x="7" y="8" width="2" height="1" fill="#c9f1c9"/></svg>
<svg style="position:absolute;left:1600.3px;top:1128.8px" width="36.5" height="36.5" viewBox="0 0 10 10" preserveAspectRatio="none" shape-rendering="crispEdges"><rect x="0" y="0" width="10" height="1" fill="#8eae8c"/><rect x="0" y="1" width="1" height="1" fill="#8eae8c"/><rect x="3" y="1" width="1" height="1" fill="#c9f1c9"/><rect x="6" y="1" width="1" height="1" fill="#c9f1c9"/><rect x="9" y="1" width="1" height="1" fill="#8eae8c"/><rect x="0" y="2" width="1" height="1" fill="#8eae8c"/><rect x="3" y="2" width="1" height="1" fill="#c9f1c9"/><rect x="6" y="2" width="1" height="1" fill="#c9f1c9"/><rect x="9" y="2" width="1" height="1" fill="#8eae8c"/><rect x="0" y="3" width="1" height="1" fill="#8eae8c"/><rect x="1" y="3" width="8" height="1" fill="#c9f1c9"/><rect x="9" y="3" width="1" height="1" fill="#8eae8c"/><rect x="0" y="4" width="1" height="1" fill="#8eae8c"/><rect x="3" y="4" width="1" height="1" fill="#c9f1c9"/><rect x="6" y="4" width="1" height="1" fill="#c9f1c9"/><rect x="9" y="4" width="1" height="1" fill="#8eae8c"/><rect x="0" y="5" width="1" height="1" fill="#8eae8c"/><rect x="3" y="5" width="1" height="1" fill="#c9f1c9"/><rect x="6" y="5" width="1" height="1" fill="#c9f1c9"/><rect x="9" y="5" width="1" height="1" fill="#8eae8c"/><rect x="0" y="6" width="1" height="1" fill="#8eae8c"/><rect x="1" y="6" width="8" height="1" fill="#c9f1c9"/><rect x="9" y="6" width="1" height="1" fill="#8eae8c"/><rect x="0" y="7" width="1" height="1" fill="#8eae8c"/><rect x="3" y="7" width="1" height="1" fill="#c9f1c9"/><rect x="6" y="7" width="1" height="1" fill="#c9f1c9"/><rect x="9" y="7" width="1" height="1" fill="#8eae8c"/><rect x="0" y="8" width="1" height="1" fill="#8eae8c"/><rect x="3" y="8" width="1" height="1" fill="#c9f1c9"/><rect x="6" y="8" width="1" height="1" fill="#c9f1c9"/><rect x="9" y="8" width="1" height="1" fill="#8eae8c"/><rect x="0" y="9" width="10" height="1" fill="#8eae8c"/></svg>
<svg style="position:absolute;left:1673.4px;top:1130.2px" width="36.5" height="32.85" viewBox="0 0 10 9" preserveAspectRatio="none" shape-rendering="crispEdges"><rect x="4" y="0" width="2" height="1" fill="#c9f1c9"/><rect x="2" y="1" width="2" height="1" fill="#c9f1c9"/><rect x="6" y="1" width="2" height="1" fill="#c9f1c9"/><rect x="0" y="2" width="2" height="1" fill="#c9f1c9"/><rect x="8" y="2" width="2" height="1" fill="#c9f1c9"/><rect x="2" y="3" width="2" height="1" fill="#c9f1c9"/><rect x="6" y="3" width="2" height="1" fill="#c9f1c9"/><rect x="4" y="4" width="2" height="1" fill="#c9f1c9"/><rect x="2" y="5" width="2" height="1" fill="#c9f1c9"/><rect x="6" y="5" width="2" height="1" fill="#c9f1c9"/><rect x="0" y="6" width="2" height="1" fill="#c9f1c9"/><rect x="8" y="6" width="2" height="1" fill="#c9f1c9"/><rect x="2" y="7" width="2" height="1" fill="#c9f1c9"/><rect x="6" y="7" width="2" height="1" fill="#c9f1c9"/><rect x="4" y="8" width="2" height="1" fill="#c9f1c9"/></svg>
<svg style="position:absolute;left:1748.5px;top:1132.2px" width="32.85" height="29.2" viewBox="0 0 9 8" preserveAspectRatio="none" shape-rendering="crispEdges"><rect x="4" y="0" width="1" height="1" fill="#c9f1c9"/><rect x="0" y="1" width="1" height="1" fill="#8eae8c"/><rect x="1" y="1" width="3" height="1" fill="#c9f1c9"/><rect x="5" y="1" width="3" height="1" fill="#c9f1c9"/><rect x="8" y="1" width="1" height="1" fill="#8eae8c"/><rect x="0" y="2" width="1" height="1" fill="#c9f1c9"/><rect x="4" y="2" width="1" height="1" fill="#c9f1c9"/><rect x="8" y="2" width="1" height="1" fill="#c9f1c9"/><rect x="0" y="3" width="1" height="1" fill="#c9f1c9"/><rect x="8" y="3" width="1" height="1" fill="#c9f1c9"/><rect x="0" y="4" width="1" height="1" fill="#c9f1c9"/><rect x="4" y="4" width="1" height="1" fill="#c9f1c9"/><rect x="8" y="4" width="1" height="1" fill="#c9f1c9"/><rect x="0" y="5" width="1" height="1" fill="#c9f1c9"/><rect x="8" y="5" width="1" height="1" fill="#c9f1c9"/><rect x="0" y="6" width="1" height="1" fill="#8eae8c"/><rect x="1" y="6" width="3" height="1" fill="#c9f1c9"/><rect x="5" y="6" width="3" height="1" fill="#c9f1c9"/><rect x="8" y="6" width="1" height="1" fill="#8eae8c"/><rect x="4" y="7" width="1" height="1" fill="#c9f1c9"/></svg>
<svg style="position:absolute;left:1823.6px;top:1130.2px" width="29.2" height="32.85" viewBox="0 0 8 9" preserveAspectRatio="none" shape-rendering="crispEdges"><rect x="1" y="0" width="1" height="1" fill="#8eae8c"/><rect x="2" y="0" width="4" height="1" fill="#c9f1c9"/><rect x="6" y="0" width="1" height="1" fill="#8eae8c"/><rect x="1" y="1" width="1" height="1" fill="#c9f1c9"/><rect x="6" y="1" width="1" height="1" fill="#c9f1c9"/><rect x="1" y="2" width="1" height="1" fill="#c9f1c9"/><rect x="6" y="2" width="1" height="1" fill="#c9f1c9"/><rect x="1" y="3" width="1" height="1" fill="#c9f1c9"/><rect x="6" y="3" width="1" height="1" fill="#c9f1c9"/><rect x="0" y="4" width="1" height="1" fill="#c9f1c9"/><rect x="1" y="4" width="1" height="1" fill="#000"/><rect x="2" y="4" width="1" height="1" fill="#c9f1c9"/><rect x="4" y="4" width="1" height="1" fill="#c9f1c9"/><rect x="5" y="4" width="1" height="1" fill="#000"/><rect x="6" y="4" width="2" height="1" fill="#c9f1c9"/><rect x="1" y="5" width="1" height="1" fill="#c9f1c9"/><rect x="6" y="5" width="1" height="1" fill="#c9f1c9"/><rect x="1" y="6" width="1" height="1" fill="#c9f1c9"/><rect x="6" y="6" width="1" height="1" fill="#c9f1c9"/><rect x="1" y="7" width="1" height="1" fill="#c9f1c9"/><rect x="6" y="7" width="1" height="1" fill="#c9f1c9"/><rect x="1" y="8" width="1" height="1" fill="#8eae8c"/><rect x="2" y="8" width="4" height="1" fill="#c9f1c9"/><rect x="6" y="8" width="1" height="1" fill="#8eae8c"/></svg>
<svg style="position:absolute;left:1895.9px;top:1132px" width="29.2" height="29.2" viewBox="0 0 8 8" preserveAspectRatio="none" shape-rendering="crispEdges"><rect x="0" y="0" width="1" height="1" fill="#8eae8c"/><rect x="4" y="0" width="2" height="1" fill="#c9f1c9"/><rect x="1" y="1" width="1" height="1" fill="#4b5e4b"/><rect x="3" y="1" width="1" height="1" fill="#c9f1c9"/><rect x="6" y="1" width="1" height="1" fill="#c9f1c9"/><rect x="2" y="2" width="1" height="1" fill="#c9f1c9"/><rect x="7" y="2" width="1" height="1" fill="#c9f1c9"/><rect x="1" y="3" width="1" height="1" fill="#c9f1c9"/><rect x="3" y="3" width="1" height="1" fill="#4b5e4b"/><rect x="7" y="3" width="1" height="1" fill="#c9f1c9"/><rect x="0" y="4" width="1" height="1" fill="#c9f1c9"/><rect x="4" y="4" width="1" height="1" fill="#4b5e4b"/><rect x="6" y="4" width="1" height="1" fill="#c9f1c9"/><rect x="0" y="5" width="1" height="1" fill="#c9f1c9"/><rect x="5" y="5" width="1" height="1" fill="#c9f1c9"/><rect x="1" y="6" width="1" height="1" fill="#c9f1c9"/><rect x="3" y="6" width="1" height="1" fill="#c9f1c9"/><rect x="6" y="6" width="1" height="1" fill="#4b5e4b"/><rect x="2" y="7" width="2" height="1" fill="#c9f1c9"/><rect x="7" y="7" width="1" height="1" fill="#8eae8c"/></svg>
<svg style="position:absolute;left:1969.2px;top:1132px" width="29.2" height="29.2" viewBox="0 0 8 8" preserveAspectRatio="none" shape-rendering="crispEdges"><rect x="2" y="0" width="2" height="1" fill="#c9f1c9"/><rect x="7" y="0" width="1" height="1" fill="#8eae8c"/><rect x="1" y="1" width="1" height="1" fill="#c9f1c9"/><rect x="4" y="1" width="1" height="1" fill="#c9f1c9"/><rect x="6" y="1" width="1" height="1" fill="#4b5e4b"/><rect x="0" y="2" width="1" height="1" fill="#c9f1c9"/><rect x="5" y="2" width="1" height="1" fill="#c9f1c9"/><rect x="0" y="3" width="1" height="1" fill="#c9f1c9"/><rect x="4" y="3" width="1" height="1" fill="#4b5e4b"/><rect x="6" y="3" width="1" height="1" fill="#c9f1c9"/><rect x="1" y="4" width="1" height="1" fill="#c9f1c9"/><rect x="3" y="4" width="1" height="1" fill="#4b5e4b"/><rect x="7" y="4" width="1" height="1" fill="#c9f1c9"/><rect x="2" y="5" width="1" height="1" fill="#c9f1c9"/><rect x="7" y="5" width="1" height="1" fill="#c9f1c9"/><rect x="1" y="6" width="1" height="1" fill="#4b5e4b"/><rect x="3" y="6" width="1" height="1" fill="#c9f1c9"/><rect x="6" y="6" width="1" height="1" fill="#c9f1c9"/><rect x="0" y="7" width="1" height="1" fill="#8eae8c"/><rect x="4" y="7" width="2" height="1" fill="#c9f1c9"/></svg>
<svg style="position:absolute;left:2041px;top:1134.5px" width="32.85" height="25.55" viewBox="0 0 9 7" preserveAspectRatio="none" shape-rendering="crispEdges"><rect x="0" y="0" width="4" height="1" fill="#4b5e4b"/><rect x="5" y="0" width="4" height="1" fill="#4b5e4b"/><rect x="0" y="1" width="1" height="1" fill="#4b5e4b"/><rect x="2" y="1" width="5" height="1" fill="#c9f1c9"/><rect x="8" y="1" width="1" height="1" fill="#4b5e4b"/><rect x="0" y="2" width="1" height="1" fill="#4b5e4b"/><rect x="2" y="2" width="1" height="1" fill="#c9f1c9"/><rect x="6" y="2" width="1" height="1" fill="#c9f1c9"/><rect x="8" y="2" width="1" height="1" fill="#4b5e4b"/><rect x="0" y="3" width="1" height="1" fill="#4b5e4b"/><rect x="2" y="3" width="1" height="1" fill="#c9f1c9"/><rect x="6" y="3" width="1" height="1" fill="#c9f1c9"/><rect x="8" y="3" width="1" height="1" fill="#4b5e4b"/><rect x="0" y="4" width="1" height="1" fill="#4b5e4b"/><rect x="2" y="4" width="1" height="1" fill="#c9f1c9"/><rect x="6" y="4" width="1" height="1" fill="#c9f1c9"/><rect x="8" y="4" width="1" height="1" fill="#4b5e4b"/><rect x="0" y="5" width="2" height="1" fill="#4b5e4b"/><rect x="2" y="5" width="1" height="1" fill="#c9f1c9"/><rect x="6" y="5" width="1" height="1" fill="#c9f1c9"/><rect x="7" y="5" width="2" height="1" fill="#4b5e4b"/><rect x="2" y="6" width="5" height="1" fill="#c9f1c9"/></svg>
<div style="left:9.7px;top:1182.5px;width:2138.9px;height:202.3px;background:#000;"></div>
<div style="left:9.7px;top:1182.5px;width:2138.9px;height:3.5px;background:#3a3a3a;"></div>
<div style="left:9.7px;top:1381.3px;width:2138.9px;height:3.5px;background:#3a3a3a;"></div>
<div style="left:2145.1px;top:1182.5px;width:3.5px;height:202.3px;background:#3a3a3a;"></div>
<div style="left:9.7px;top:1245.8px;width:724.1px;height:3.4px;background:#3a3a3a;"></div>
<div style="left:9.7px;top:1309.4px;width:724.1px;height:3.4px;background:#3a3a3a;"></div>
<div style="left:9.7px;top:1372.7px;width:724.1px;height:3.4px;background:#3a3a3a;"></div>
<div style="left:9.7px;top:1182.5px;width:3.4px;height:202.3px;background:#3a3a3a;"></div>
<div style="left:73px;top:1182.5px;width:3.4px;height:202.3px;background:#3a3a3a;"></div>
<div style="left:473.5px;top:1182.5px;width:3.4px;height:202.3px;background:#3a3a3a;"></div>
<div style="left:536.8px;top:1182.5px;width:3.4px;height:202.3px;background:#3a3a3a;"></div>
<div style="left:600.9px;top:1182.5px;width:3.4px;height:202.3px;background:#3a3a3a;"></div>
<div style="left:665.3px;top:1182.5px;width:3.4px;height:202.3px;background:#3a3a3a;"></div>
<div style="left:730.4px;top:1182.5px;width:3.4px;height:202.3px;background:#3a3a3a;"></div>
<div style="left:476.9px;top:1249.2px;width:59.9px;height:60.2px;background:#363636;"></div>
<div style="left:84px;top:1188.5px;width:334.4px;height:52.1px;background:#3a3a3a;"></div>
<div style="left:86.2px;top:1192.9px;width:328.3px;height:42.4px;background:#2f2830;"></div>
<div style="left:98px;top:1203.38px;font:25.35px/25.35px 'Liberation Mono',monospace;color:#e8e8e8;white-space:pre;transform:scaleX(0.8283);transform-origin:0 0;">All</div>
<svg style="position:absolute;left:383.5px;top:1208.5px" width="19.25" height="11" viewBox="0 0 7 4" preserveAspectRatio="none" shape-rendering="crispEdges"><rect x="0" y="0" width="2" height="1" fill="#e0e0e0"/><rect x="5" y="0" width="2" height="1" fill="#e0e0e0"/><rect x="1" y="1" width="2" height="1" fill="#e0e0e0"/><rect x="4" y="1" width="2" height="1" fill="#e0e0e0"/><rect x="2" y="2" width="3" height="1" fill="#e0e0e0"/><rect x="3" y="3" width="1" height="1" fill="#e0e0e0"/></svg>
<div style="left:438.3px;top:1201px;width:3.4px;height:3.4px;background:#e8e8e8;"></div>
<div style="left:444.9px;top:1201px;width:3.4px;height:3.4px;background:#e8e8e8;"></div>
<div style="left:451.5px;top:1201px;width:3.4px;height:3.4px;background:#e8e8e8;"></div>
<div style="left:438.3px;top:1208.2px;width:3.4px;height:3.4px;background:#e8e8e8;"></div>
<div style="left:444.9px;top:1208.2px;width:3.4px;height:3.4px;background:#e8e8e8;"></div>
<div style="left:451.5px;top:1208.2px;width:3.4px;height:3.4px;background:#e8e8e8;"></div>
<div style="left:438.3px;top:1215.4px;width:3.4px;height:3.4px;background:#e8e8e8;"></div>
<div style="left:444.9px;top:1215.4px;width:3.4px;height:3.4px;background:#e8e8e8;"></div>
<div style="left:451.5px;top:1215.4px;width:3.4px;height:3.4px;background:#e8e8e8;"></div>
<div style="left:438.3px;top:1222.6px;width:3.4px;height:3.4px;background:#e8e8e8;"></div>
<div style="left:444.9px;top:1222.6px;width:3.4px;height:3.4px;background:#e8e8e8;"></div>
<div style="left:451.5px;top:1222.6px;width:3.4px;height:3.4px;background:#e8e8e8;"></div>
<div style="left:438.3px;top:1229.8px;width:3.4px;height:3.4px;background:#e8e8e8;"></div>
<div style="left:444.9px;top:1229.8px;width:3.4px;height:3.4px;background:#e8e8e8;"></div>
<div style="left:451.5px;top:1229.8px;width:3.4px;height:3.4px;background:#e8e8e8;"></div>
<div style="left:499px;top:1202.48px;font:31.88px/31.88px 'Liberation Mono',monospace;color:#6a9a63;white-space:pre;transform:scaleX(0.7319);transform-origin:0 0;">1</div>
<div style="left:562px;top:1202.48px;font:31.88px/31.88px 'Liberation Mono',monospace;color:#f4f4f4;white-space:pre;transform:scaleX(0.7319);transform-origin:0 0;">2</div>
<div style="left:626.5px;top:1202.48px;font:31.88px/31.88px 'Liberation Mono',monospace;color:#f4f4f4;white-space:pre;transform:scaleX(0.7319);transform-origin:0 0;">3</div>
<div style="left:690.5px;top:1202.48px;font:31.88px/31.88px 'Liberation Mono',monospace;color:#f4f4f4;white-space:pre;transform:scaleX(0.7319);transform-origin:0 0;">4</div>
<div style="left:490.2px;top:1262.7px;width:33px;height:33px;border-radius:50%;background:#5b8456"></div>
<div style="left:553.6px;top:1262.7px;width:33px;height:33px;border-radius:50%;background:#5b8456"></div>
<div style="left:618px;top:1262.7px;width:33px;height:33px;border-radius:50%;background:#5b8456"></div>
<div style="left:682.2px;top:1262.7px;width:33px;height:33px;border-radius:50%;background:#5b8456"></div>
<div style="left:490.4px;top:1326.3px;width:224.6px;height:34.3px;border-radius:17px;background:linear-gradient(to right,#5b8456 0,#5b8456 48px,#fff 48px)"></div>
<div style="left:88.5px;top:1267.04px;font:30.36px/30.36px 'Liberation Mono',monospace;color:#6a9a63;white-space:pre;transform:scaleX(0.9112);transform-origin:0 0;">Mage</div>
<div style="left:88.5px;top:1330.74px;font:30.36px/30.36px 'Liberation Mono',monospace;color:#f4f4f4;white-space:pre;transform:scaleX(0.9112);transform-origin:0 0;">Mini</div>
<svg style="position:absolute;left:26.6px;top:1204.4px" width="32.67" height="21.78" viewBox="0 0 9 6" preserveAspectRatio="none" shape-rendering="crispEdges"><rect x="2" y="0" width="5" height="1" fill="#ffffff"/><rect x="1" y="1" width="3" height="1" fill="#ffffff"/><rect x="4" y="1" width="1" height="1" fill="#000"/><rect x="5" y="1" width="3" height="1" fill="#ffffff"/><rect x="0" y="2" width="1" height="1" fill="#ffffff"/><rect x="1" y="2" width="1" height="1" fill="#000"/><rect x="2" y="2" width="4" height="1" fill="#ffffff"/><rect x="6" y="2" width="2" height="1" fill="#000"/><rect x="8" y="2" width="1" height="1" fill="#ffffff"/><rect x="0" y="3" width="1" height="1" fill="#ffffff"/><rect x="3" y="3" width="2" height="1" fill="#ffffff"/><rect x="8" y="3" width="1" height="1" fill="#ffffff"/><rect x="1" y="4" width="1" height="1" fill="#ffffff"/><rect x="7" y="4" width="1" height="1" fill="#ffffff"/><rect x="2" y="5" width="5" height="1" fill="#ffffff"/></svg>
<svg style="position:absolute;left:26.6px;top:1268.7px" width="32.67" height="21.78" viewBox="0 0 9 6" preserveAspectRatio="none" shape-rendering="crispEdges"><rect x="2" y="0" width="5" height="1" fill="#5e8a58"/><rect x="1" y="1" width="3" height="1" fill="#5e8a58"/><rect x="4" y="1" width="1" height="1" fill="#000"/><rect x="5" y="1" width="3" height="1" fill="#5e8a58"/><rect x="0" y="2" width="1" height="1" fill="#5e8a58"/><rect x="1" y="2" width="1" height="1" fill="#000"/><rect x="2" y="2" width="4" height="1" fill="#5e8a58"/><rect x="6" y="2" width="2" height="1" fill="#000"/><rect x="8" y="2" width="1" height="1" fill="#5e8a58"/><rect x="0" y="3" width="1" height="1" fill="#5e8a58"/><rect x="3" y="3" width="2" height="1" fill="#5e8a58"/><rect x="8" y="3" width="1" height="1" fill="#5e8a58"/><rect x="1" y="4" width="1" height="1" fill="#5e8a58"/><rect x="7" y="4" width="1" height="1" fill="#5e8a58"/><rect x="2" y="5" width="5" height="1" fill="#5e8a58"/></svg>
<svg style="position:absolute;left:26.6px;top:1332.6px" width="32.67" height="21.78" viewBox="0 0 9 6" preserveAspectRatio="none" shape-rendering="crispEdges"><rect x="2" y="0" width="5" height="1" fill="#4a4a4a"/><rect x="1" y="1" width="1" height="1" fill="#4a4a4a"/><rect x="7" y="1" width="1" height="1" fill="#4a4a4a"/><rect x="0" y="2" width="1" height="1" fill="#4a4a4a"/><rect x="6" y="2" width="2" height="1" fill="#4a4a4a"/><rect x="0" y="3" width="1" height="1" fill="#ffffff"/><rect x="5" y="3" width="3" height="1" fill="#4a4a4a"/><rect x="8" y="3" width="1" height="1" fill="#ffffff"/><rect x="1" y="4" width="1" height="1" fill="#ffffff"/><rect x="2" y="4" width="5" height="1" fill="#4a4a4a"/><rect x="7" y="4" width="1" height="1" fill="#ffffff"/><rect x="2" y="5" width="5" height="1" fill="#ffffff"/></svg>
<div style="left:9px;top:1413.99px;font:25.2px/25.2px 'Liberation Mono',monospace;color:#0b0b0b;white-space:pre;transform:scaleX(0.8597);transform-origin:0 0;">Mage</div>
<svg style="position:absolute;left:75.5px;top:1406.5px" width="36" height="32" viewBox="0 0 36 32" preserveAspectRatio="none" shape-rendering="crispEdges"><rect x="5" y="5" width="28" height="24" fill="none" stroke="#3f5d3b" stroke-width="3"/><path d="M5 29 V5 H31" fill="none" stroke="#0b0b0b" stroke-width="3.4"/><rect x="30" y="0" width="3.4" height="10" fill="#0b0b0b"/><rect x="0" y="27" width="10" height="3.4" fill="#0b0b0b"/><rect x="3.5" y="27" width="3.4" height="5" fill="#0b0b0b"/></svg>
<div style="left:123px;top:1413.99px;font:25.2px/25.2px 'Liberation Mono',monospace;color:#0b0b0b;white-space:pre;transform:scaleX(0.8664);transform-origin:0 0;">64x64</div>
<svg style="position:absolute;left:196px;top:1407.5px" width="33" height="33" viewBox="0 0 33 33" preserveAspectRatio="none" shape-rendering="crispEdges"><circle cx="11" cy="11" r="8.5" fill="none" stroke="#0b0b0b" stroke-width="3.4"/><path d="M17 17 L28 28" stroke="#0b0b0b" stroke-width="4"/><rect x="9" y="7" width="5" height="3" fill="#2d4a2a"/></svg>
<div style="left:235px;top:1413.99px;font:25.2px/25.2px 'Liberation Mono',monospace;color:#0b0b0b;white-space:pre;transform:scaleX(0.8664);transform-origin:0 0;">700%</div>
<svg style="position:absolute;left:296.3px;top:1411px" width="29.4" height="26" viewBox="0 0 29.4 26" preserveAspectRatio="none" shape-rendering="crispEdges"><rect width="29.4" height="26" fill="#3d5a3a"/><rect x="6" y="0" width="17" height="26" fill="#1f2f1e"/><rect x="1.5" y="2" width="3" height="3" fill="#1f2f1e"/><rect x="25" y="2" width="3" height="3" fill="#1f2f1e"/><rect x="1.5" y="8.5" width="3" height="3" fill="#1f2f1e"/><rect x="25" y="8.5" width="3" height="3" fill="#1f2f1e"/><rect x="1.5" y="15" width="3" height="3" fill="#1f2f1e"/><rect x="25" y="15" width="3" height="3" fill="#1f2f1e"/><rect x="1.5" y="21.5" width="3" height="3" fill="#1f2f1e"/><rect x="25" y="21.5" width="3" height="3" fill="#1f2f1e"/></svg>
<div style="left:335px;top:1413.99px;font:25.2px/25.2px 'Liberation Mono',monospace;color:#0b0b0b;white-space:pre;transform:scaleX(0.8664);transform-origin:0 0;">1</div>
<div style="left:365px;top:1413.99px;font:25.2px/25.2px 'Liberation Mono',monospace;color:#0b0b0b;white-space:pre;transform:scaleX(0.8664);transform-origin:0 0;">FPS</div>
<div style="left:418px;top:1413.99px;font:25.2px/25.2px 'Liberation Mono',monospace;color:#0b0b0b;white-space:pre;transform:scaleX(0.8664);transform-origin:0 0;">1</div>
<div style="left:705px;top:1383px;width:67px;height:66.8px;background:#141414;clip-path:polygon(3.3px 0px,63.7px 0px,63.7px 3.3px,67px 3.3px,67px 63.5px,63.7px 63.5px,63.7px 66.8px,3.3px 66.8px,3.3px 63.5px,0px 63.5px,0px 3.3px,3.3px 3.3px)"></div>
<div style="left:711.7px;top:1386.3px;width:53.6px;height:3.4px;background:#3c3c3c;"></div>
<div style="left:711.7px;top:1440.4px;width:53.6px;height:3.4px;background:#3c3c3c;"></div>
<div style="left:708.3px;top:1389.7px;width:3.4px;height:50.7px;background:#3c3c3c;"></div>
<div style="left:765.3px;top:1389.7px;width:3.4px;height:50.7px;background:#3c3c3c;"></div>
<div style="left:711.7px;top:1389.7px;width:53.6px;height:50.7px;background:#000;"></div>
<svg style="position:absolute;left:728px;top:1405px" width="21.81" height="21.81" viewBox="0 0 3 3" preserveAspectRatio="none" shape-rendering="crispEdges"><rect x="0" y="0" width="1" height="1" fill="#c9f1c9"/><rect x="1" y="0" width="1" height="1" fill="#84a282"/><rect x="2" y="0" width="1" height="1" fill="#4a5e49"/><rect x="0" y="1" width="1" height="1" fill="#84a282"/><rect x="1" y="1" width="1" height="1" fill="#4a5e49"/><rect x="2" y="1" width="1" height="1" fill="#84a282"/><rect x="0" y="2" width="1" height="1" fill="#c9f1c9"/><rect x="1" y="2" width="1" height="1" fill="#84a282"/><rect x="2" y="2" width="1" height="1" fill="#4a5e49"/></svg>
</div></body></html>
